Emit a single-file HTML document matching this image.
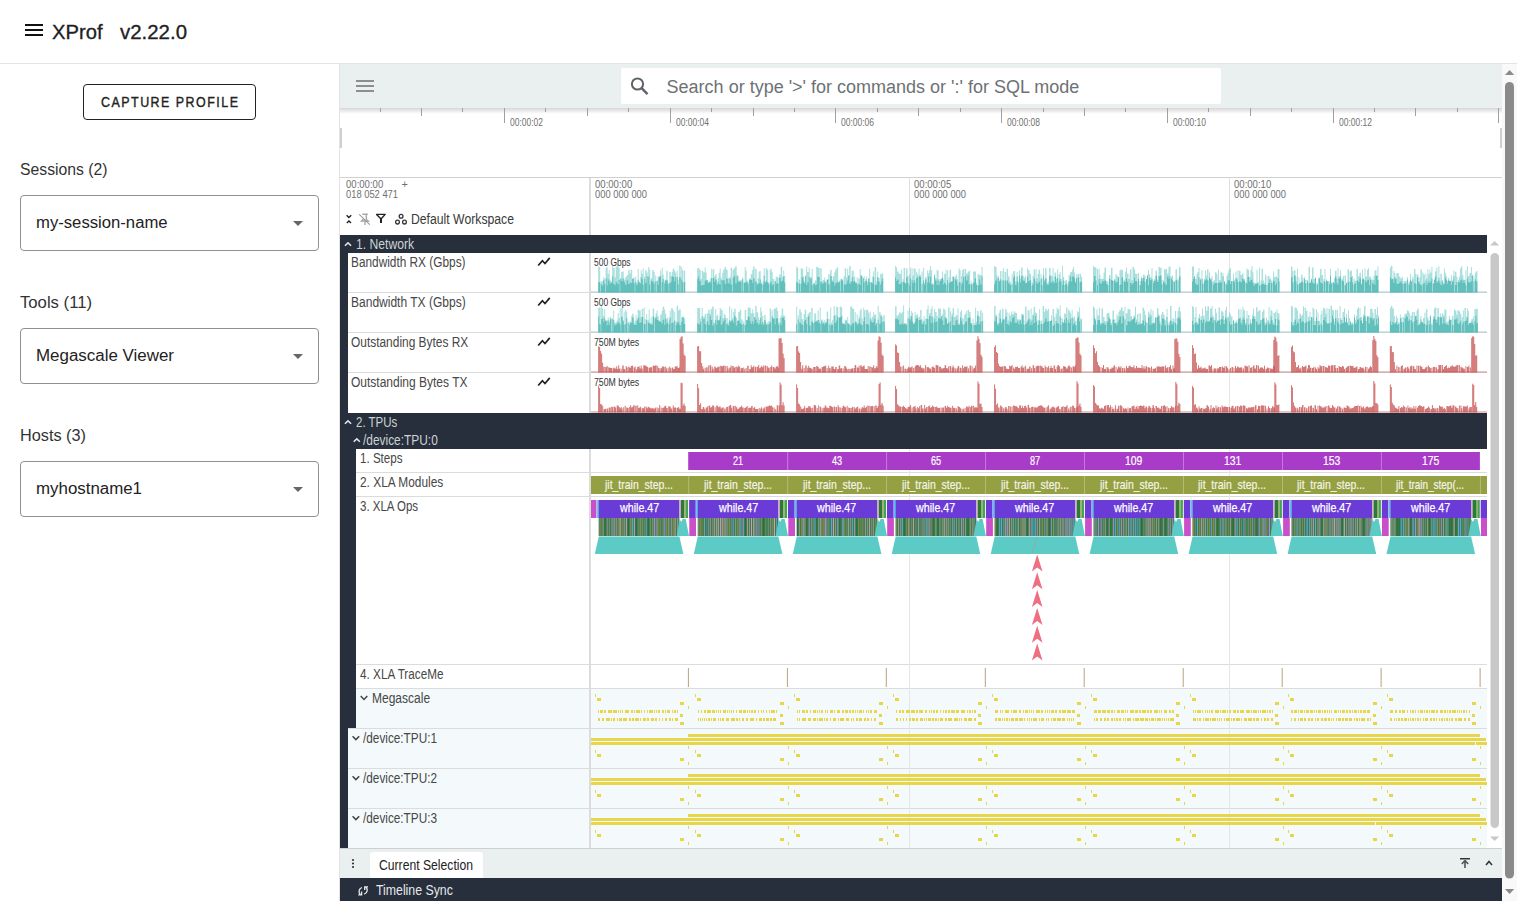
<!DOCTYPE html>
<html><head><meta charset="utf-8"><style>
html,body{margin:0;padding:0;width:1517px;height:901px;overflow:hidden;background:#fff;font-family:"Liberation Sans", sans-serif;}
</style></head><body>
<div style="position:absolute;left:0px;top:0px;width:1517px;height:63px;background:#fff;"></div><div style="position:absolute;left:0px;top:63px;width:1517px;height:1px;background:#e3e3e3;"></div><div style="position:absolute;left:25px;top:24px;width:18px;height:2px;background:#111;"></div><div style="position:absolute;left:25px;top:29px;width:18px;height:2px;background:#111;"></div><div style="position:absolute;left:25px;top:34px;width:18px;height:2px;background:#111;"></div><span style="position:absolute;left:52px;top:22.07px;font-size:20px;line-height:20px;color:#202124;font-weight:normal;letter-spacing:0px;white-space:nowrap;transform-origin:0 0;transform:scaleX(1.0094);-webkit-text-stroke:0.3px #202124;">XProf</span><span style="position:absolute;left:120px;top:22.07px;font-size:20px;line-height:20px;color:#202124;font-weight:normal;letter-spacing:0px;white-space:nowrap;transform-origin:0 0;transform:scaleX(1.0212);-webkit-text-stroke:0.3px #202124;">v2.22.0</span><div style="position:absolute;left:0px;top:64px;width:339px;height:837px;background:#fff;"></div><div style="position:absolute;left:339px;top:64px;width:1px;height:837px;background:#e3e3e3;"></div><div style="position:absolute;left:83px;top:84px;width:171px;height:34px;border:1px solid #222;border-radius:4px;"></div><span style="position:absolute;left:100.7px;top:93.60px;font-size:15px;line-height:15px;color:#222;font-weight:normal;letter-spacing:1.8px;white-space:nowrap;transform-origin:0 0;transform:scaleX(0.8292);-webkit-text-stroke:0.4px #222;">CAPTURE PROFILE</span><span style="position:absolute;left:20px;top:161.96px;font-size:16px;line-height:16px;color:#333;font-weight:normal;letter-spacing:0px;white-space:nowrap;transform-origin:0 0;transform:scaleX(0.9840);">Sessions (2)</span><div style="position:absolute;left:20px;top:195px;width:297px;height:54px;border:1px solid #909090;border-radius:4px;"></div><span style="position:absolute;left:36px;top:214.76px;font-size:16px;line-height:16px;color:#222;font-weight:normal;letter-spacing:0px;white-space:nowrap;transform-origin:0 0;transform:scaleX(1.0422);">my-session-name</span><div style="position:absolute;left:293px;top:221px;width:0;height:0;border-left:5px solid transparent;border-right:5px solid transparent;border-top:5px solid #666;"></div><span style="position:absolute;left:20px;top:294.96px;font-size:16px;line-height:16px;color:#333;font-weight:normal;letter-spacing:0px;white-space:nowrap;transform-origin:0 0;transform:scaleX(1.0425);">Tools (11)</span><div style="position:absolute;left:20px;top:328px;width:297px;height:54px;border:1px solid #909090;border-radius:4px;"></div><span style="position:absolute;left:36px;top:347.76px;font-size:16px;line-height:16px;color:#222;font-weight:normal;letter-spacing:0px;white-space:nowrap;transform-origin:0 0;transform:scaleX(1.0580);">Megascale Viewer</span><div style="position:absolute;left:293px;top:354px;width:0;height:0;border-left:5px solid transparent;border-right:5px solid transparent;border-top:5px solid #666;"></div><span style="position:absolute;left:20px;top:427.96px;font-size:16px;line-height:16px;color:#333;font-weight:normal;letter-spacing:0px;white-space:nowrap;transform-origin:0 0;transform:scaleX(1.0169);">Hosts (3)</span><div style="position:absolute;left:20px;top:461px;width:297px;height:54px;border:1px solid #909090;border-radius:4px;"></div><span style="position:absolute;left:36px;top:480.76px;font-size:16px;line-height:16px;color:#222;font-weight:normal;letter-spacing:0px;white-space:nowrap;transform-origin:0 0;transform:scaleX(1.0547);">myhostname1</span><div style="position:absolute;left:293px;top:487px;width:0;height:0;border-left:5px solid transparent;border-right:5px solid transparent;border-top:5px solid #666;"></div><svg width="1517" height="901" viewBox="0 0 1517 901" style="position:absolute;left:0;top:0"><rect x="340" y="64" width="1162" height="44" fill="#eaeff0" /><defs><linearGradient id="sh" x1="0" y1="0" x2="0" y2="1"><stop offset="0" stop-color="#000" stop-opacity="0.16"/><stop offset="1" stop-color="#000" stop-opacity="0"/></linearGradient></defs><rect x="340" y="108" width="1162" height="69" fill="#ffffff" /><rect x="340" y="108" width="1162" height="6" fill="url(#sh)" /><rect x="356" y="80" width="18" height="2" fill="#8e8e8e" /><rect x="356" y="85" width="18" height="2" fill="#8e8e8e" /><rect x="356" y="90" width="18" height="2" fill="#8e8e8e" /><rect x="621" y="68" width="600" height="36" rx="2" fill="#fff"/><circle cx="637.5" cy="84" r="5.6" fill="none" stroke="#5f6368" stroke-width="2"/><line x1="641.6" y1="88.2" x2="647.5" y2="94.2" stroke="#5f6368" stroke-width="2.4"/><rect x="380" y="108" width="1" height="4" fill="#a0a0a0" /><rect x="421" y="108" width="1" height="8" fill="#a0a0a0" /><rect x="462" y="108" width="1" height="4" fill="#a0a0a0" /><rect x="504" y="108" width="1" height="15" fill="#a0a0a0" /><rect x="545" y="108" width="1" height="4" fill="#a0a0a0" /><rect x="587" y="108" width="1" height="8" fill="#a0a0a0" /><rect x="628" y="108" width="1" height="4" fill="#a0a0a0" /><rect x="670" y="108" width="1" height="15" fill="#a0a0a0" /><rect x="711" y="108" width="1" height="4" fill="#a0a0a0" /><rect x="753" y="108" width="1" height="8" fill="#a0a0a0" /><rect x="794" y="108" width="1" height="4" fill="#a0a0a0" /><rect x="835" y="108" width="1" height="15" fill="#a0a0a0" /><rect x="877" y="108" width="1" height="4" fill="#a0a0a0" /><rect x="918" y="108" width="1" height="8" fill="#a0a0a0" /><rect x="960" y="108" width="1" height="4" fill="#a0a0a0" /><rect x="1001" y="108" width="1" height="15" fill="#a0a0a0" /><rect x="1043" y="108" width="1" height="4" fill="#a0a0a0" /><rect x="1084" y="108" width="1" height="8" fill="#a0a0a0" /><rect x="1125" y="108" width="1" height="4" fill="#a0a0a0" /><rect x="1167" y="108" width="1" height="15" fill="#a0a0a0" /><rect x="1208" y="108" width="1" height="4" fill="#a0a0a0" /><rect x="1250" y="108" width="1" height="8" fill="#a0a0a0" /><rect x="1291" y="108" width="1" height="4" fill="#a0a0a0" /><rect x="1333" y="108" width="1" height="15" fill="#a0a0a0" /><rect x="1374" y="108" width="1" height="4" fill="#a0a0a0" /><rect x="1415" y="108" width="1" height="8" fill="#a0a0a0" /><rect x="1457" y="108" width="1" height="4" fill="#a0a0a0" /><rect x="1498" y="108" width="1" height="15" fill="#a0a0a0" /><rect x="1498" y="108" width="1" height="14" fill="#a0a0a0" /><rect x="340" y="128" width="2" height="20" fill="#cfcfcf" /><rect x="1500" y="128" width="2" height="20" fill="#cfcfcf" /><rect x="340" y="177" width="1162" height="1" fill="#d0d0d0" /><rect x="340" y="178" width="1162" height="57" fill="#fff" /><rect x="589" y="178" width="2" height="57" fill="#dcdcdc" /><rect x="909" y="178" width="1" height="57" fill="#e0e0e0" /><rect x="1229" y="178" width="1" height="57" fill="#e0e0e0" /><rect x="340" y="235" width="1147" height="613" fill="#262f3b" /><rect x="1487" y="235" width="15" height="613" fill="#ffffff" /><rect x="1490.5" y="253" width="8.5" height="575" rx="4.2" fill="#c8c8c8"/><path d="M1490 245.5 L1494.6 241 L1499.2 245.5 Z" fill="#c8c8c8"/><path d="M1490 836.5 L1494.6 841 L1499.2 836.5 Z" fill="#c8c8c8"/><rect x="1502" y="64" width="15" height="837" fill="#f9f9f9" /><rect x="1505" y="82" width="9" height="796.5" rx="4.5" fill="#8a8a8a"/><path d="M1505 75 L1509.6 70 L1514.2 75 Z" fill="#8a8a8a"/><path d="M1505 889 L1509.6 894 L1514.2 889 Z" fill="#8a8a8a"/><rect x="348" y="253" width="1139" height="160" fill="#fff" /><rect x="348" y="292" width="1139" height="1" fill="#dcdcdc" /><rect x="348" y="332" width="1139" height="1" fill="#dcdcdc" /><rect x="348" y="372" width="1139" height="1" fill="#dcdcdc" /><rect x="589" y="253" width="2" height="160" fill="#dcdcdc" /><rect x="356" y="449" width="1131" height="239" fill="#fff" /><rect x="356" y="472" width="1131" height="1" fill="#dcdcdc" /><rect x="356" y="496" width="1131" height="1" fill="#dcdcdc" /><rect x="356" y="664" width="1131" height="1" fill="#dcdcdc" /><rect x="356" y="688" width="1131" height="40" fill="#f4fafb" /><rect x="348" y="728" width="1139" height="40" fill="#f4fafb" /><rect x="348" y="768" width="1139" height="40" fill="#f4fafb" /><rect x="348" y="808" width="1139" height="40" fill="#f4fafb" /><rect x="356" y="688" width="1131" height="1" fill="#dcdcdc" /><rect x="348" y="728" width="1139" height="1" fill="#dcdcdc" /><rect x="348" y="768" width="1139" height="1" fill="#dcdcdc" /><rect x="348" y="808" width="1139" height="1" fill="#dcdcdc" /><rect x="589" y="449" width="2" height="399" fill="#dcdcdc" /><rect x="909" y="253" width="1" height="160" fill="#e6e6e6" /><rect x="909" y="449" width="1" height="399" fill="#e6e6e6" /><rect x="1229" y="253" width="1" height="160" fill="#e6e6e6" /><rect x="1229" y="449" width="1" height="399" fill="#e6e6e6" /><rect x="340" y="848" width="1162" height="1" fill="#cfcfcf" /><rect x="340" y="849" width="1162" height="29" fill="#eaeff0" /><path d="M370 878 V855 Q370 852 373 852 H480 Q483 852 483 855 V878 Z" fill="#fff"/><rect x="340" y="878" width="1162" height="23" fill="#262f3b" /><circle cx="353" cy="860.0" r="1.1" fill="#333"/><circle cx="353" cy="863.5" r="1.1" fill="#333"/><circle cx="353" cy="867.0" r="1.1" fill="#333"/><rect x="1460" y="858" width="10" height="1.5" fill="#333" /><path d="M1465 860.5 L1461.8 864 M1465 860.5 L1468.2 864 M1465 861 V868" stroke="#555" stroke-width="1.6" fill="none"/><path d="M1486 865 L1489 861.5 L1492 865" stroke="#333" stroke-width="1.5" fill="none"/><clipPath id="trk"><rect x="591" y="235" width="896" height="613"/></clipPath><g clip-path="url(#trk)"><rect x="591" y="291.5" width="896" height="1" fill="#a9cfcd" /><path d="M499.3 266.1h1v26.4h-1zM500.3 268.1h1v24.4h-1zM501.3 274.6h1.5v17.9h-1.5zM502.8 267.8h1.5v24.7h-1.5zM504.3 272h1v20.5h-1zM505.3 278.1h1v14.4h-1zM506.8 283.4h1v9.1h-1zM507.8 281.9h1v10.6h-1zM508.8 277.5h1.5v15h-1.5zM510.3 279.8h1v12.7h-1zM511.3 274.1h1v18.4h-1zM512.3 278.7h1v13.8h-1zM513.3 274.9h1v17.6h-1zM514.3 265.5h1v27h-1zM515.3 277.6h1.5v14.9h-1.5zM517.3 282.5h1.5v10h-1.5zM519.3 280.3h1.5v12.2h-1.5zM520.8 275.6h1v16.9h-1zM521.8 280.9h1v11.6h-1zM522.8 283.4h1v9.1h-1zM523.8 275.4h1v17.1h-1zM525.3 280.6h1v11.9h-1zM526.3 280.7h1v11.8h-1zM527.3 275.3h1v17.2h-1zM528.8 280.4h1.5v12.1h-1.5zM530.3 269.2h1.5v23.3h-1.5zM531.8 266.5h1v26h-1zM532.8 271.4h1.5v21.1h-1.5zM534.3 271.6h1v20.9h-1zM535.8 279.3h1.5v13.2h-1.5zM537.3 283h1v9.5h-1zM538.3 281.7h1v10.8h-1zM539.8 279.1h1v13.4h-1zM540.8 282.3h1v10.2h-1zM541.8 266.4h1v26.1h-1zM543.3 267.9h1v24.6h-1zM544.3 270h1v22.5h-1zM545.3 274.4h1v18.1h-1zM546.3 267.9h1v24.6h-1zM547.8 283.3h1.5v9.2h-1.5zM549.3 271.3h1.5v21.2h-1.5zM551.3 268.6h1v23.9h-1zM552.3 268.9h1v23.6h-1zM553.3 270h1v22.5h-1zM554.3 280.7h1.5v11.8h-1.5zM555.8 282h1.5v10.5h-1.5zM557.3 278.2h1v14.3h-1zM558.3 267.6h1.5v24.9h-1.5zM559.8 272.7h1v19.8h-1zM560.8 271h1v21.5h-1zM561.8 279.3h1v13.2h-1zM562.8 277.6h1v14.9h-1zM563.8 276.3h1.5v16.2h-1.5zM565.3 268.9h1.5v23.6h-1.5zM567.3 272.5h1v20h-1zM568.3 278.6h1v13.9h-1zM569.8 274.4h1v18.1h-1zM570.8 271.8h1.5v20.7h-1.5zM572.8 272.4h1v20.1h-1zM573.8 277.1h1.5v15.4h-1.5zM575.3 282h1v10.5h-1zM576.3 281.1h1v11.4h-1zM577.3 280.1h1v12.4h-1zM578.3 280.1h1v12.4h-1zM579.8 273.3h1.5v19.2h-1.5zM581.3 268.3h1.5v24.2h-1.5zM582.8 277.1h1v15.4h-1zM584.3 270.8h1.5v21.7h-1.5zM585.8 271h1.5v21.5h-1.5zM598.2 266.6h1v25.9h-1zM599.2 267.1h1v25.4h-1zM600.7 281.3h1v11.2h-1zM601.7 281.4h1.5v11.1h-1.5zM603.2 276.9h1v15.6h-1zM604.2 278.8h1v13.7h-1zM605.7 267.8h1v24.7h-1zM606.7 267.2h1v25.3h-1zM607.7 274.1h1v18.4h-1zM608.7 269.9h1v22.6h-1zM609.7 279.4h1v13.1h-1zM610.7 281.4h1.5v11.1h-1.5zM612.2 265.8h1v26.7h-1zM613.2 268h1.5v24.5h-1.5zM614.7 277.5h1v15h-1zM615.7 266.4h1.5v26.1h-1.5zM617.2 266.2h1.5v26.3h-1.5zM618.7 268.1h1v24.4h-1zM620.2 278.2h1v14.3h-1zM621.2 272h1.5v20.5h-1.5zM622.7 271.2h1v21.3h-1zM623.7 279.4h1.5v13.1h-1.5zM625.2 277.1h1.5v15.4h-1.5zM626.7 274.9h1.5v17.6h-1.5zM628.2 270h1.5v22.5h-1.5zM629.7 273.3h1v19.2h-1zM630.7 269.8h1.5v22.7h-1.5zM632.2 278.5h1.5v14h-1.5zM633.7 277.5h1v15h-1zM635.2 276.8h1v15.7h-1zM636.2 282.8h1.5v9.7h-1.5zM637.7 269h1v23.5h-1zM638.7 281.4h1v11.1h-1zM639.7 283.3h1v9.2h-1zM640.7 270.2h1v22.3h-1zM641.7 273.8h1v18.7h-1zM642.7 268.3h1v24.2h-1zM644.2 276.3h1v16.2h-1zM645.2 270.2h1.5v22.3h-1.5zM646.7 272.5h1v20h-1zM648.2 267h1v25.5h-1zM649.2 269.5h1v23h-1zM650.7 278.3h1.5v14.2h-1.5zM652.2 269.9h1.5v22.6h-1.5zM653.7 271.9h1v20.6h-1zM655.2 275.5h1v17h-1zM656.7 280.5h1v12h-1zM657.7 276.4h1v16.1h-1zM658.7 276.3h1.5v16.2h-1.5zM660.2 270.5h1v22h-1zM661.7 267.8h1v24.7h-1zM662.7 274.5h1v18h-1zM664.2 280.6h1v11.9h-1zM665.2 279.2h1v13.3h-1zM666.2 270.8h1.5v21.7h-1.5zM667.7 282.3h1v10.2h-1zM669.2 272.1h1.5v20.4h-1.5zM670.7 276.2h1v16.3h-1zM671.7 272.1h1v20.4h-1zM672.7 268.6h1.5v23.9h-1.5zM674.2 270.5h1v22h-1zM675.2 272.5h1v20h-1zM676.7 270.8h1v21.7h-1zM677.7 279.8h1v12.7h-1zM679.2 265.8h1.5v26.7h-1.5zM681.2 267.1h1v25.4h-1zM682.2 270h1v22.5h-1zM683.7 270.7h1.5v21.8h-1.5zM697.2 268.1h1v24.4h-1zM698.2 268.1h1v24.4h-1zM699.2 269.8h1.5v22.7h-1.5zM700.7 279h1v13.5h-1zM701.7 270.7h1.5v21.8h-1.5zM703.2 272.2h1.5v20.3h-1.5zM704.7 267.6h1v24.9h-1zM705.7 272.6h1v19.9h-1zM706.7 280h1v12.5h-1zM707.7 281.8h1.5v10.7h-1.5zM709.2 281.4h1v11.1h-1zM710.2 278.2h1v14.3h-1zM711.2 268.8h1v23.7h-1zM712.7 269.3h1.5v23.2h-1.5zM714.2 276.6h1v15.9h-1zM715.2 274.2h1.5v18.3h-1.5zM716.7 283.3h1v9.2h-1zM717.7 278.1h1v14.4h-1zM718.7 273.1h1v19.4h-1zM719.7 268.8h1v23.7h-1zM720.7 277.4h1v15.1h-1zM722.2 272.7h1v19.8h-1zM723.2 269.5h1.5v23h-1.5zM724.7 267h1.5v25.5h-1.5zM726.2 269.8h1.5v22.7h-1.5zM727.7 278.3h1v14.2h-1zM728.7 277.5h1v15h-1zM729.7 276.7h1v15.8h-1zM730.7 267.7h1.5v24.8h-1.5zM732.7 270.1h1v22.4h-1zM733.7 268.3h1.5v24.2h-1.5zM735.2 266.2h1.5v26.3h-1.5zM736.7 274.7h1v17.8h-1zM737.7 275.7h1v16.8h-1zM738.7 280.6h1.5v11.9h-1.5zM740.2 279.7h1.5v12.8h-1.5zM742.2 277.3h1v15.2h-1zM743.7 282.3h1v10.2h-1zM744.7 267.1h1v25.4h-1zM745.7 270.4h1v22.1h-1zM746.7 280.4h1v12.1h-1zM747.7 281.5h1v11h-1zM749.2 278.5h1.5v14h-1.5zM750.7 273.9h1.5v18.6h-1.5zM752.2 270.1h1v22.4h-1zM753.2 266.4h1.5v26.1h-1.5zM755.2 269h1.5v23.5h-1.5zM756.7 283.2h1v9.3h-1zM757.7 278.1h1v14.4h-1zM758.7 271.4h1v21.1h-1zM759.7 270.9h1v21.6h-1zM760.7 282.3h1.5v10.2h-1.5zM762.7 280.9h1v11.6h-1zM763.7 268.3h1v24.2h-1zM764.7 282.3h1v10.2h-1zM765.7 267.9h1v24.6h-1zM766.7 269.4h1.5v23.1h-1.5zM768.2 282.2h1v10.3h-1zM769.7 269.7h1v22.8h-1zM770.7 268.5h1v24h-1zM771.7 272.1h1v20.4h-1zM772.7 279h1.5v13.5h-1.5zM774.7 281h1v11.5h-1zM775.7 276.7h1.5v15.8h-1.5zM777.2 277.3h1.5v15.2h-1.5zM779.2 274.4h1.5v18.1h-1.5zM780.7 266.7h1.5v25.8h-1.5zM782.2 276.8h1v15.7h-1zM783.2 270.5h1v22h-1zM784.2 275.9h1v16.6h-1zM796.2 266.4h1v26.1h-1zM797.2 268h1v24.5h-1zM798.7 279.5h1.5v13h-1.5zM800.7 268.2h1v24.3h-1zM801.7 268.8h1.5v23.7h-1.5zM803.2 276.4h1v16.1h-1zM804.2 282.4h1v10.1h-1zM805.2 275.4h1v17.1h-1zM806.2 266.6h1v25.9h-1zM807.2 272h1.5v20.5h-1.5zM808.7 267.9h1v24.6h-1zM810.2 276.8h1.5v15.7h-1.5zM811.7 269h1v23.5h-1zM813.2 283.2h1.5v9.3h-1.5zM814.7 280.5h1.5v12h-1.5zM816.2 266.8h1v25.7h-1zM817.2 266.9h1v25.6h-1zM818.2 268h1.5v24.5h-1.5zM820.2 268.3h1.5v24.2h-1.5zM821.7 280.9h1v11.6h-1zM822.7 279.9h1.5v12.6h-1.5zM824.2 277.5h1v15h-1zM825.2 281.8h1v10.7h-1zM826.7 279.1h1.5v13.4h-1.5zM828.2 274.1h1.5v18.4h-1.5zM830.2 270.1h1.5v22.4h-1.5zM831.7 280.1h1v12.4h-1zM832.7 276.3h1.5v16.2h-1.5zM834.2 272.4h1v20.1h-1zM835.2 269.5h1.5v23h-1.5zM836.7 267.3h1.5v25.2h-1.5zM838.2 282.4h1v10.1h-1zM839.2 280.6h1v11.9h-1zM840.7 278.6h1v13.9h-1zM841.7 279.2h1.5v13.3h-1.5zM843.7 276.3h1v16.2h-1zM844.7 268.3h1.5v24.2h-1.5zM846.2 277.5h1v15h-1zM847.2 268.8h1v23.7h-1zM848.2 275.1h1v17.4h-1zM849.2 266.1h1.5v26.4h-1.5zM850.7 281.6h1v10.9h-1zM851.7 270.7h1v21.8h-1zM852.7 270.5h1v22h-1zM853.7 276.6h1.5v15.9h-1.5zM855.2 282.7h1.5v9.8h-1.5zM856.7 277.3h1v15.2h-1zM858.2 278.4h1.5v14.1h-1.5zM859.7 268.9h1v23.6h-1zM860.7 275.5h1.5v17h-1.5zM862.7 277.7h1v14.8h-1zM863.7 276.3h1v16.2h-1zM865.2 279h1v13.5h-1zM866.2 276.4h1v16.1h-1zM867.2 282.4h1v10.1h-1zM868.2 278.2h1v14.3h-1zM869.2 268.8h1v23.7h-1zM870.7 282.2h1.5v10.3h-1.5zM872.2 276.4h1v16.1h-1zM873.2 271.2h1v21.3h-1zM874.7 267.2h1.5v25.3h-1.5zM876.2 281.5h1v11h-1zM877.2 271.7h1v20.8h-1zM878.2 277.7h1.5v14.8h-1.5zM880.2 273.8h1v18.7h-1zM881.2 274.2h1v18.3h-1zM882.2 273.3h1v19.2h-1zM895.1 265.9h1v26.6h-1zM896.1 267.5h1v25h-1zM897.1 271.6h1.5v20.9h-1.5zM898.6 273.5h1.5v19h-1.5zM900.1 274h1v18.5h-1zM901.1 269.8h1v22.7h-1zM902.6 279.2h1v13.3h-1zM903.6 267.9h1.5v24.6h-1.5zM905.1 283.1h1v9.4h-1zM906.1 268.2h1.5v24.3h-1.5zM907.6 276.1h1v16.4h-1zM909.1 274.6h1v17.9h-1zM910.1 267.6h1v24.9h-1zM911.6 268.4h1v24.1h-1zM912.6 275.7h1v16.8h-1zM913.6 268.1h1v24.4h-1zM914.6 268.9h1v23.6h-1zM916.1 271.7h1v20.8h-1zM917.1 273.8h1v18.7h-1zM918.6 268.8h1v23.7h-1zM919.6 274.8h1.5v17.7h-1.5zM921.6 271.6h1v20.9h-1zM923.1 267.8h1v24.7h-1zM924.1 282.8h1v9.7h-1zM925.1 277h1.5v15.5h-1.5zM927.1 270.4h1v22.1h-1zM928.1 273.3h1v19.2h-1zM929.1 270h1v22.5h-1zM930.1 265.9h1v26.6h-1zM931.1 270.5h1v22h-1zM932.1 283.3h1.5v9.2h-1.5zM934.1 274.2h1v18.3h-1zM935.1 278.3h1.5v14.2h-1.5zM936.6 269.7h1v22.8h-1zM937.6 270.6h1v21.9h-1zM938.6 281.3h1v11.2h-1zM939.6 278.9h1.5v13.6h-1.5zM941.1 278.7h1v13.8h-1zM942.1 271.6h1v20.9h-1zM943.1 279.4h1v13.1h-1zM944.1 274h1.5v18.5h-1.5zM945.6 269.8h1v22.7h-1zM947.1 270.2h1v22.3h-1zM948.6 277.3h1v15.2h-1zM949.6 269.8h1.5v22.7h-1.5zM951.1 281.1h1.5v11.4h-1.5zM952.6 276.5h1.5v16h-1.5zM954.6 277.1h1v15.4h-1zM955.6 274.7h1.5v17.8h-1.5zM957.1 278.9h1v13.6h-1zM958.6 268.2h1v24.3h-1zM959.6 270h1v22.5h-1zM961.1 276.1h1v16.4h-1zM962.1 269.9h1v22.6h-1zM963.1 269.3h1v23.2h-1zM964.6 268.8h1.5v23.7h-1.5zM966.1 273.5h1.5v19h-1.5zM967.6 271.8h1v20.7h-1zM968.6 270.8h1.5v21.7h-1.5zM970.6 280.8h1v11.7h-1zM971.6 282.9h1v9.6h-1zM973.1 271.6h1.5v20.9h-1.5zM974.6 271.6h1.5v20.9h-1.5zM976.1 282.9h1v9.6h-1zM977.6 273.9h1.5v18.6h-1.5zM979.1 275.3h1v17.2h-1zM980.1 274.9h1.5v17.6h-1.5zM981.6 267h1v25.5h-1zM994.1 266.1h1v26.4h-1zM995.1 267.1h1.5v25.4h-1.5zM996.6 275.3h1v17.2h-1zM998.1 275.9h1v16.6h-1zM999.1 280.5h1v12h-1zM1000.1 271.1h1v21.4h-1zM1001.6 271h1v21.5h-1zM1003.1 268.3h1v24.2h-1zM1004.6 272h1.5v20.5h-1.5zM1006.6 268.7h1.5v23.8h-1.5zM1008.1 276.6h1.5v15.9h-1.5zM1009.6 281.7h1.5v10.8h-1.5zM1011.6 273.8h1v18.7h-1zM1013.1 271.2h1v21.3h-1zM1014.1 270.9h1v21.6h-1zM1015.1 281.5h1.5v11h-1.5zM1016.6 272.1h1v20.4h-1zM1017.6 281.1h1v11.4h-1zM1019.1 269.9h1v22.6h-1zM1020.1 278.7h1v13.8h-1zM1021.1 267.4h1.5v25.1h-1.5zM1022.6 275.4h1v17.1h-1zM1023.6 277.5h1.5v15h-1.5zM1025.1 275.8h1v16.7h-1zM1026.1 282.5h1v10h-1zM1027.1 267.9h1v24.6h-1zM1028.1 270.3h1.5v22.2h-1.5zM1029.6 274.1h1.5v18.4h-1.5zM1031.6 282.4h1v10.1h-1zM1032.6 275.9h1v16.6h-1zM1033.6 269.6h1.5v22.9h-1.5zM1035.6 269.2h1v23.3h-1zM1036.6 278.3h1v14.2h-1zM1037.6 273.8h1v18.7h-1zM1038.6 269.8h1.5v22.7h-1.5zM1040.6 274.2h1v18.3h-1zM1041.6 277.8h1v14.7h-1zM1043.1 267.9h1v24.6h-1zM1044.1 279.5h1v13h-1zM1045.1 268.2h1.5v24.3h-1.5zM1046.6 283.1h1.5v9.4h-1.5zM1048.1 281.4h1v11.1h-1zM1049.1 268h1.5v24.5h-1.5zM1050.6 275.1h1v17.4h-1zM1051.6 276.6h1v15.9h-1zM1052.6 268.3h1v24.2h-1zM1053.6 282.3h1v10.2h-1zM1054.6 272.4h1.5v20.1h-1.5zM1056.1 279.1h1v13.4h-1zM1057.1 269.2h1v23.3h-1zM1058.6 274.3h1v18.2h-1zM1059.6 272.1h1v20.4h-1zM1060.6 278.8h1v13.7h-1zM1062.1 265.7h1v26.8h-1zM1063.1 276.8h1v15.7h-1zM1064.6 280.9h1v11.6h-1zM1065.6 279.9h1.5v12.6h-1.5zM1067.6 282.5h1v10h-1zM1068.6 274.9h1.5v17.6h-1.5zM1070.1 272.3h1v20.2h-1zM1071.1 271.7h1v20.8h-1zM1072.1 269.4h1v23.1h-1zM1073.1 266.7h1v25.8h-1zM1074.1 272.6h1v19.9h-1zM1075.1 281.2h1v11.3h-1zM1076.1 274.4h1v18.1h-1zM1077.6 273.8h1.5v18.7h-1.5zM1079.6 273.9h1.5v18.6h-1.5zM1081.1 276.8h1v15.7h-1zM1093 265.9h1v26.6h-1zM1094 267.2h1.5v25.3h-1.5zM1095.5 267.5h1v25h-1zM1097 269.1h1v23.4h-1zM1098.5 268.5h1v24h-1zM1099.5 274.4h1v18.1h-1zM1100.5 278.9h1.5v13.6h-1.5zM1102 278.8h1.5v13.7h-1.5zM1103.5 272.8h1v19.7h-1zM1104.5 267.5h1.5v25h-1.5zM1106 280.9h1.5v11.6h-1.5zM1107.5 281.8h1v10.7h-1zM1109 275h1.5v17.5h-1.5zM1111 267.8h1.5v24.7h-1.5zM1112.5 280.6h1v11.9h-1zM1114 278.9h1.5v13.6h-1.5zM1115.5 273.9h1v18.6h-1zM1116.5 275.8h1.5v16.7h-1.5zM1118 277.2h1v15.3h-1zM1119.5 270.5h1v22h-1zM1120.5 269.3h1v23.2h-1zM1121.5 270.1h1.5v22.4h-1.5zM1123.5 279.6h1.5v12.9h-1.5zM1125 271.7h1v20.8h-1zM1126 267.5h1v25h-1zM1127 273.5h1v19h-1zM1128.5 273.6h1v18.9h-1zM1130 269.3h1.5v23.2h-1.5zM1131.5 280.2h1v12.3h-1zM1132.5 267h1.5v25.5h-1.5zM1134 269.2h1v23.3h-1zM1135 273.6h1.5v18.9h-1.5zM1136.5 274h1v18.5h-1zM1138 272.9h1v19.6h-1zM1139.5 280.9h1.5v11.6h-1.5zM1141 276.6h1v15.9h-1zM1142 278h1v14.5h-1zM1143 274.6h1.5v17.9h-1.5zM1144.5 275.4h1v17.1h-1zM1146 279.1h1v13.4h-1zM1147 274.4h1v18.1h-1zM1148 270.1h1v22.4h-1zM1149 274.3h1v18.2h-1zM1150 277.2h1.5v15.3h-1.5zM1151.5 268.1h1v24.4h-1zM1153 280.6h1v11.9h-1zM1154 279.3h1.5v13.2h-1.5zM1155.5 270.7h1.5v21.8h-1.5zM1157 279.4h1.5v13.1h-1.5zM1158.5 267h1.5v25.5h-1.5zM1160 267.8h1.5v24.7h-1.5zM1161.5 280h1v12.5h-1zM1163 280.6h1v11.9h-1zM1164 269.5h1.5v23h-1.5zM1165.5 269.1h1.5v23.4h-1.5zM1167 273.4h1.5v19.1h-1.5zM1168.5 267.1h1v25.4h-1zM1169.5 266.2h1v26.3h-1zM1171 276.5h1v16h-1zM1172 275.4h1v17.1h-1zM1173.5 281.3h1.5v11.2h-1.5zM1175.5 269.3h1.5v23.2h-1.5zM1177.5 278.3h1v14.2h-1zM1179 267.2h1.5v25.3h-1.5zM1192 266.7h1v25.8h-1zM1193 266.3h1v26.2h-1zM1194 275.8h1v16.7h-1zM1195 278.7h1.5v13.8h-1.5zM1196.5 273.8h1v18.7h-1zM1197.5 272h1v20.5h-1zM1198.5 267.9h1v24.6h-1zM1200 278.1h1v14.4h-1zM1201.5 270.1h1v22.4h-1zM1202.5 282.6h1v9.9h-1zM1204 278.4h1v14.1h-1zM1205 270.4h1v22.1h-1zM1206 275.6h1v16.9h-1zM1207 269.3h1.5v23.2h-1.5zM1209 272.5h1v20h-1zM1210 278.4h1.5v14.1h-1.5zM1211.5 276.1h1v16.4h-1zM1213 280.9h1v11.6h-1zM1214 280.3h1v12.2h-1zM1215 272.2h1.5v20.3h-1.5zM1216.5 274h1v18.5h-1zM1218 269.8h1v22.7h-1zM1219 279.9h1.5v12.6h-1.5zM1220.5 272.3h1.5v20.2h-1.5zM1222.5 273h1v19.5h-1zM1224 281.3h1v11.2h-1zM1225.5 283.2h1v9.3h-1zM1226.5 275.7h1v16.8h-1zM1227.5 273.1h1v19.4h-1zM1228.5 269.8h1.5v22.7h-1.5zM1230 268.1h1v24.4h-1zM1231 281.2h1.5v11.3h-1.5zM1233 273.6h1v18.9h-1zM1234 279.7h1v12.8h-1zM1235.5 271.4h1v21.1h-1zM1236.5 277.9h1v14.6h-1zM1237.5 270h1v22.5h-1zM1239 270.9h1.5v21.6h-1.5zM1240.5 275.1h1.5v17.4h-1.5zM1242 273.5h1.5v19h-1.5zM1243.5 279.1h1.5v13.4h-1.5zM1245.5 281.9h1v10.6h-1zM1246.5 268.4h1v24.1h-1zM1247.5 269.8h1.5v22.7h-1.5zM1249 276.7h1.5v15.8h-1.5zM1250.5 269.8h1v22.7h-1zM1251.5 266h1v26.5h-1zM1252.5 272.3h1v20.2h-1zM1253.5 282.4h1.5v10.1h-1.5zM1255 283.5h1.5v9h-1.5zM1256.5 269.7h1v22.8h-1zM1257.5 282.2h1v10.3h-1zM1259 267.7h1v24.8h-1zM1260.5 280.6h1v11.9h-1zM1261.5 268.7h1.5v23.8h-1.5zM1263 280.4h1v12.1h-1zM1264 282.7h1v9.8h-1zM1265 274.6h1v17.9h-1zM1266.5 276.3h1v16.2h-1zM1268 275.9h1.5v16.6h-1.5zM1269.5 278.4h1v14.1h-1zM1271 280.6h1.5v11.9h-1.5zM1273 271.5h1v21h-1zM1274 276.8h1v15.7h-1zM1275 277h1v15.5h-1zM1276 276.2h1v16.3h-1zM1277.5 269.6h1v22.9h-1zM1278.5 269.1h1v23.4h-1zM1291 266.5h1.5v26h-1.5zM1292.5 270.9h1v21.6h-1zM1294 270.2h1.5v22.3h-1.5zM1295.5 276.5h1v16h-1zM1297 269.1h1v23.4h-1zM1298.5 277.2h1v15.3h-1zM1299.5 282.7h1.5v9.8h-1.5zM1301 274.8h1.5v17.7h-1.5zM1302.5 278h1v14.5h-1zM1304 277h1v15.5h-1zM1305 280.1h1.5v12.4h-1.5zM1307 279.9h1v12.6h-1zM1308.5 267.1h1.5v25.4h-1.5zM1310 281.7h1v10.8h-1zM1311 278.7h1v13.8h-1zM1312 267.5h1.5v25h-1.5zM1313.5 279h1.5v13.5h-1.5zM1315 277.3h1v15.2h-1zM1316.5 282.7h1.5v9.8h-1.5zM1318.5 277.5h1.5v15h-1.5zM1320 269.1h1.5v23.4h-1.5zM1321.5 275h1.5v17.5h-1.5zM1323.5 278.9h1v13.6h-1zM1324.5 268.9h1v23.6h-1zM1326 279.4h1v13.1h-1zM1327 280.9h1.5v11.6h-1.5zM1329 281.3h1v11.2h-1zM1330 268.7h1v23.8h-1zM1331 282.5h1v10h-1zM1332.5 282.2h1.5v10.3h-1.5zM1334 278h1v14.5h-1zM1335 270.8h1.5v21.7h-1.5zM1336.5 279h1v13.5h-1zM1337.5 268.3h1v24.2h-1zM1338.5 276.4h1.5v16.1h-1.5zM1340 270.1h1v22.4h-1zM1341.5 278.4h1.5v14.1h-1.5zM1343 276h1v16.5h-1zM1344.5 275.6h1.5v16.9h-1.5zM1346 283h1v9.5h-1zM1347.5 269.3h1.5v23.2h-1.5zM1349.5 271.2h1v21.3h-1zM1350.5 270.5h1.5v22h-1.5zM1352 275.9h1v16.6h-1zM1353.5 278.6h1v13.9h-1zM1354.5 280.8h1.5v11.7h-1.5zM1356.5 269.1h1.5v23.4h-1.5zM1358 276.2h1.5v16.3h-1.5zM1359.5 272.7h1.5v19.8h-1.5zM1361 283.3h1v9.2h-1zM1362 269.8h1v22.7h-1zM1363 278.5h1v14h-1zM1364.5 268.5h1v24h-1zM1365.5 276.4h1.5v16.1h-1.5zM1367 269.7h1v22.8h-1zM1368 268.3h1v24.2h-1zM1369 277h1v15.5h-1zM1370 276.5h1v16h-1zM1371.5 278.5h1v14h-1zM1372.5 283.2h1v9.3h-1zM1373.5 275.8h1v16.7h-1zM1374.5 270.8h1v21.7h-1zM1375.5 270.1h1v22.4h-1zM1376.5 275.3h1v17.2h-1zM1377.5 266.5h1v26h-1zM1389.9 267.7h1v24.8h-1zM1390.9 265.7h1.5v26.8h-1.5zM1392.4 278.4h1v14.1h-1zM1393.4 270.9h1v21.6h-1zM1394.4 273.2h1v19.3h-1zM1395.4 278.2h1v14.3h-1zM1396.4 273.3h1v19.2h-1zM1397.4 273h1.5v19.5h-1.5zM1398.9 276.4h1.5v16.1h-1.5zM1400.4 278.5h1.5v14h-1.5zM1401.9 276.8h1v15.7h-1zM1403.4 281h1.5v11.5h-1.5zM1404.9 280.7h1.5v11.8h-1.5zM1406.9 277h1v15.5h-1zM1408.4 281.8h1.5v10.7h-1.5zM1409.9 274.1h1v18.4h-1zM1410.9 281.3h1v11.2h-1zM1412.4 276.2h1v16.3h-1zM1413.9 269.1h1.5v23.4h-1.5zM1415.4 273.7h1v18.8h-1zM1416.9 274.5h1.5v18h-1.5zM1418.4 281.3h1v11.2h-1zM1419.4 277h1v15.5h-1zM1420.4 269.4h1.5v23.1h-1.5zM1422.4 272.4h1v20.1h-1zM1423.4 274.4h1.5v18.1h-1.5zM1425.4 273.5h1v19h-1zM1426.4 278.2h1v14.3h-1zM1427.4 269.4h1v23.1h-1zM1428.4 274.3h1v18.2h-1zM1429.4 269.6h1v22.9h-1zM1430.4 272.8h1v19.7h-1zM1431.4 267.1h1v25.4h-1zM1432.9 283.1h1v9.4h-1zM1433.9 279h1v13.5h-1zM1434.9 271.2h1.5v21.3h-1.5zM1436.4 267.6h1v24.9h-1zM1437.4 280.9h1v11.6h-1zM1438.4 266.3h1v26.2h-1zM1439.4 280.5h1v12h-1zM1440.4 273.7h1.5v18.8h-1.5zM1441.9 280h1v12.5h-1zM1442.9 282.5h1v10h-1zM1443.9 268.6h1v23.9h-1zM1444.9 272.7h1v19.8h-1zM1445.9 275.7h1v16.8h-1zM1446.9 281.1h1v11.4h-1zM1447.9 278.1h1.5v14.4h-1.5zM1449.4 280.8h1.5v11.7h-1.5zM1450.9 275h1v17.5h-1zM1451.9 280.5h1.5v12h-1.5zM1453.4 270.4h1v22.1h-1zM1454.9 271.7h1.5v20.8h-1.5zM1456.4 276.7h1v15.8h-1zM1457.9 280.1h1v12.4h-1zM1458.9 276.7h1v15.8h-1zM1459.9 268.8h1v23.7h-1zM1460.9 266.6h1.5v25.9h-1.5zM1462.4 275.3h1v17.2h-1zM1463.4 279.4h1v13.1h-1zM1464.4 280.1h1v12.4h-1zM1465.4 270.3h1v22.2h-1zM1466.9 266.3h1v26.2h-1zM1467.9 275.9h1.5v16.6h-1.5zM1469.4 272.9h1.5v19.6h-1.5zM1470.9 267.1h1v25.4h-1zM1471.9 274.4h1v18.1h-1zM1473.4 275.8h1v16.7h-1zM1474.9 272.8h1v19.7h-1zM1475.9 271.3h1.5v21.2h-1.5zM1488.9 268.4h1v24.1h-1zM1489.9 265.9h1v26.6h-1zM1490.9 280.5h1v12h-1zM1491.9 276.7h1v15.8h-1zM1492.9 270h1v22.5h-1zM1494.4 269h1v23.5h-1zM1495.4 282.2h1v10.3h-1zM1496.4 272.8h1.5v19.7h-1.5zM1497.9 273.7h1v18.8h-1zM1498.9 268.8h1.5v23.7h-1.5zM1500.4 273.5h1.5v19h-1.5zM1501.9 278h1v14.5h-1zM1502.9 273.6h1v18.9h-1zM1503.9 271.8h1.5v20.7h-1.5zM1505.9 268.1h1v24.4h-1zM1506.9 266.8h1.5v25.7h-1.5zM1508.4 271.2h1v21.3h-1zM1509.4 277.8h1v14.7h-1zM1510.4 268.4h1v24.1h-1zM1511.4 280.9h1.5v11.6h-1.5zM1512.9 282.9h1v9.6h-1zM1513.9 268.4h1v24.1h-1zM1514.9 278.7h1.5v13.8h-1.5zM1516.4 267h1v25.5h-1zM1517.4 277.5h1v15h-1zM1518.4 282.4h1.5v10.1h-1.5zM1520.4 273.3h1.5v19.2h-1.5zM1521.9 276.3h1v16.2h-1zM1522.9 269.7h1v22.8h-1zM1523.9 271.4h1.5v21.1h-1.5zM1525.4 267.3h1v25.2h-1zM1526.9 274.6h1v17.9h-1zM1527.9 272.6h1.5v19.9h-1.5zM1529.9 282.9h1v9.6h-1zM1530.9 280.1h1.5v12.4h-1.5zM1532.4 276.4h1.5v16.1h-1.5zM1533.9 269.5h1v23h-1zM1535.4 268h1.5v24.5h-1.5zM1536.9 270.1h1.5v22.4h-1.5zM1538.4 272.4h1.5v20.1h-1.5zM1539.9 272h1.5v20.5h-1.5zM1541.9 270.3h1.5v22.2h-1.5zM1543.4 267.9h1.5v24.6h-1.5zM1544.9 276.8h1v15.7h-1zM1545.9 269.4h1.5v23.1h-1.5zM1547.4 271.4h1v21.1h-1zM1548.4 269.7h1.5v22.8h-1.5zM1549.9 269.6h1.5v22.9h-1.5zM1551.9 271.7h1.5v20.8h-1.5zM1553.9 280.3h1.5v12.2h-1.5zM1555.4 273.8h1v18.7h-1zM1556.4 274.8h1v17.7h-1zM1557.4 278.1h1v14.4h-1zM1558.4 274.4h1v18.1h-1zM1559.4 281.7h1v10.8h-1zM1560.4 268.7h1.5v23.8h-1.5zM1561.9 278.4h1v14.1h-1zM1562.9 282.4h1v10.1h-1zM1563.9 280.1h1v12.4h-1zM1564.9 282.1h1v10.4h-1zM1565.9 270h1v22.5h-1zM1566.9 268.3h1v24.2h-1zM1567.9 275.6h1.5v16.9h-1.5zM1569.9 269.5h1v23h-1zM1570.9 277.3h1v15.2h-1zM1571.9 276.3h1v16.2h-1zM1572.9 278.3h1.5v14.2h-1.5zM1574.9 269.6h1.5v22.9h-1.5z" fill="#62c6c2" fill-opacity="0.55"/><path d="M499.3 276.9h1v15.6h-1zM500.3 281.2h1v11.3h-1zM501.3 275.9h1.5v16.6h-1.5zM502.8 280.5h1.5v12h-1.5zM504.3 282.1h1v10.4h-1zM505.3 278.2h1v14.3h-1zM506.8 285.2h1v7.3h-1zM507.8 282.3h1v10.2h-1zM508.8 280.7h1.5v11.8h-1.5zM510.3 284.3h1v8.2h-1zM511.3 275.9h1v16.6h-1zM512.3 285.4h1v7.1h-1zM513.3 282.3h1v10.2h-1zM514.3 276.3h1v16.2h-1zM515.3 279.5h1.5v13h-1.5zM517.3 284.5h1.5v8h-1.5zM519.3 281.8h1.5v10.7h-1.5zM520.8 282.2h1v10.3h-1zM521.8 285.1h1v7.4h-1zM522.8 285.1h1v7.4h-1zM523.8 277.6h1v14.9h-1zM525.3 284.6h1v7.9h-1zM526.3 282.7h1v9.8h-1zM527.3 284.3h1v8.2h-1zM528.8 284.5h1.5v8h-1.5zM530.3 282.6h1.5v9.9h-1.5zM531.8 280.1h1v12.4h-1zM532.8 276.7h1.5v15.8h-1.5zM534.3 281.5h1v11h-1zM535.8 282.5h1.5v10h-1.5zM537.3 283.2h1v9.3h-1zM538.3 282.2h1v10.3h-1zM539.8 283.6h1v8.9h-1zM540.8 283h1v9.5h-1zM541.8 283.2h1v9.3h-1zM543.3 277.6h1v14.9h-1zM544.3 284h1v8.5h-1zM545.3 275.7h1v16.8h-1zM546.3 280h1v12.5h-1zM547.8 284.2h1.5v8.3h-1.5zM549.3 280.9h1.5v11.6h-1.5zM551.3 278.8h1v13.7h-1zM552.3 277.5h1v15h-1zM553.3 276h1v16.5h-1zM554.3 284h1.5v8.5h-1.5zM555.8 285.3h1.5v7.2h-1.5zM557.3 282.7h1v9.8h-1zM558.3 276.5h1.5v16h-1.5zM559.8 277.9h1v14.6h-1zM560.8 279.9h1v12.6h-1zM561.8 279.4h1v13.1h-1zM562.8 280.2h1v12.3h-1zM563.8 280.9h1.5v11.6h-1.5zM565.3 281.8h1.5v10.7h-1.5zM567.3 284.4h1v8.1h-1zM568.3 284.3h1v8.2h-1zM569.8 277.5h1v15h-1zM570.8 277.4h1.5v15.1h-1.5zM572.8 279.2h1v13.3h-1zM573.8 280.8h1.5v11.7h-1.5zM575.3 284.6h1v7.9h-1zM576.3 281.4h1v11.1h-1zM577.3 282.1h1v10.4h-1zM578.3 281.8h1v10.7h-1zM579.8 281.1h1.5v11.4h-1.5zM581.3 280.7h1.5v11.8h-1.5zM582.8 279.9h1v12.6h-1zM584.3 278.1h1.5v14.4h-1.5zM585.8 281.9h1.5v10.6h-1.5zM598.2 282.3h1v10.2h-1zM599.2 282h1v10.5h-1zM600.7 283.9h1v8.6h-1zM601.7 285.5h1.5v7h-1.5zM603.2 280.2h1v12.3h-1zM604.2 284h1v8.5h-1zM605.7 277.9h1v14.6h-1zM606.7 285.5h1v7h-1zM607.7 279.3h1v13.2h-1zM608.7 281.1h1v11.4h-1zM609.7 283.7h1v8.8h-1zM610.7 282.7h1.5v9.8h-1.5zM612.2 276.4h1v16.1h-1zM613.2 284.1h1.5v8.4h-1.5zM614.7 285.3h1v7.2h-1zM615.7 281.9h1.5v10.6h-1.5zM617.2 284.2h1.5v8.3h-1.5zM618.7 280.1h1v12.4h-1zM620.2 278.7h1v13.8h-1zM621.2 281.1h1.5v11.4h-1.5zM622.7 278.2h1v14.3h-1zM623.7 282.3h1.5v10.2h-1.5zM625.2 284.7h1.5v7.8h-1.5zM626.7 280.5h1.5v12h-1.5zM628.2 284h1.5v8.5h-1.5zM629.7 282.6h1v9.9h-1zM630.7 283.1h1.5v9.4h-1.5zM632.2 278.7h1.5v13.8h-1.5zM633.7 283.2h1v9.3h-1zM635.2 281.4h1v11.1h-1zM636.2 285h1.5v7.5h-1.5zM637.7 279.7h1v12.8h-1zM638.7 282.1h1v10.4h-1zM639.7 283.5h1v9h-1zM640.7 277.1h1v15.4h-1zM641.7 279.1h1v13.4h-1zM642.7 284.8h1v7.7h-1zM644.2 278.7h1v13.8h-1zM645.2 283h1.5v9.5h-1.5zM646.7 276.2h1v16.3h-1zM648.2 276.4h1v16.1h-1zM649.2 284.5h1v8h-1zM650.7 280.8h1.5v11.7h-1.5zM652.2 281.7h1.5v10.8h-1.5zM653.7 283.6h1v8.9h-1zM655.2 281.3h1v11.2h-1zM656.7 280.9h1v11.6h-1zM657.7 285.1h1v7.4h-1zM658.7 277.2h1.5v15.3h-1.5zM660.2 276h1v16.5h-1zM661.7 282.2h1v10.3h-1zM662.7 279.1h1v13.4h-1zM664.2 283.2h1v9.3h-1zM665.2 280.6h1v11.9h-1zM666.2 280.2h1.5v12.3h-1.5zM667.7 284.1h1v8.4h-1zM669.2 283.3h1.5v9.2h-1.5zM670.7 281.7h1v10.8h-1zM671.7 276.3h1v16.2h-1zM672.7 277h1.5v15.5h-1.5zM674.2 281.5h1v11h-1zM675.2 277.2h1v15.3h-1zM676.7 276.7h1v15.8h-1zM677.7 284.2h1v8.3h-1zM679.2 277.1h1.5v15.4h-1.5zM681.2 279.4h1v13.1h-1zM682.2 282.2h1v10.3h-1zM683.7 282h1.5v10.5h-1.5zM697.2 279.1h1v13.4h-1zM698.2 276.2h1v16.3h-1zM699.2 280.7h1.5v11.8h-1.5zM700.7 285.5h1v7h-1zM701.7 285.2h1.5v7.3h-1.5zM703.2 284.9h1.5v7.6h-1.5zM704.7 281h1v11.5h-1zM705.7 280.3h1v12.2h-1zM706.7 280.1h1v12.4h-1zM707.7 283.2h1.5v9.3h-1.5zM709.2 281.4h1v11.1h-1zM710.2 282.8h1v9.7h-1zM711.2 277.9h1v14.6h-1zM712.7 278h1.5v14.5h-1.5zM714.2 281.8h1v10.7h-1zM715.2 279.4h1.5v13.1h-1.5zM716.7 284.9h1v7.6h-1zM717.7 281.5h1v11h-1zM718.7 283.9h1v8.6h-1zM719.7 284.6h1v7.9h-1zM720.7 279.7h1v12.8h-1zM722.2 279.9h1v12.6h-1zM723.2 280.4h1.5v12.1h-1.5zM724.7 284h1.5v8.5h-1.5zM726.2 278.7h1.5v13.8h-1.5zM727.7 283.3h1v9.2h-1zM728.7 283.4h1v9.1h-1zM729.7 278.9h1v13.6h-1zM730.7 284.6h1.5v7.9h-1.5zM732.7 278.1h1v14.4h-1zM733.7 276.1h1.5v16.4h-1.5zM735.2 283.5h1.5v9h-1.5zM736.7 276.4h1v16.1h-1zM737.7 281.7h1v10.8h-1zM738.7 281.8h1.5v10.7h-1.5zM740.2 281.5h1.5v11h-1.5zM742.2 279.3h1v13.2h-1zM743.7 282.5h1v10h-1zM744.7 283h1v9.5h-1zM745.7 281.7h1v10.8h-1zM746.7 282.2h1v10.3h-1zM747.7 283.8h1v8.7h-1zM749.2 279.5h1.5v13h-1.5zM750.7 279.9h1.5v12.6h-1.5zM752.2 283h1v9.5h-1zM753.2 278.5h1.5v14h-1.5zM755.2 281.6h1.5v10.9h-1.5zM756.7 284.8h1v7.7h-1zM757.7 284.3h1v8.2h-1zM758.7 283h1v9.5h-1zM759.7 279.2h1v13.3h-1zM760.7 283.9h1.5v8.6h-1.5zM762.7 284.6h1v7.9h-1zM763.7 275.7h1v16.8h-1zM764.7 282.6h1v9.9h-1zM765.7 280.4h1v12.1h-1zM766.7 282.3h1.5v10.2h-1.5zM768.2 284.3h1v8.2h-1zM769.7 282.9h1v9.6h-1zM770.7 281.6h1v10.9h-1zM771.7 285.5h1v7h-1zM772.7 284.3h1.5v8.2h-1.5zM774.7 281h1v11.5h-1zM775.7 283.7h1.5v8.8h-1.5zM777.2 283.2h1.5v9.3h-1.5zM779.2 277.8h1.5v14.7h-1.5zM780.7 281.6h1.5v10.9h-1.5zM782.2 280.6h1v11.9h-1zM783.2 276.4h1v16.1h-1zM784.2 282.6h1v9.9h-1zM796.2 281.8h1v10.7h-1zM797.2 282.8h1v9.7h-1zM798.7 283.6h1.5v8.9h-1.5zM800.7 283.8h1v8.7h-1zM801.7 277.2h1.5v15.3h-1.5zM803.2 280.7h1v11.8h-1zM804.2 283h1v9.5h-1zM805.2 276.3h1v16.2h-1zM806.2 285h1v7.5h-1zM807.2 282.3h1.5v10.2h-1.5zM808.7 277h1v15.5h-1zM810.2 278.5h1.5v14h-1.5zM811.7 284.9h1v7.6h-1zM813.2 283.6h1.5v8.9h-1.5zM814.7 285.3h1.5v7.2h-1.5zM816.2 284.5h1v8h-1zM817.2 276.8h1v15.7h-1zM818.2 277.1h1.5v15.4h-1.5zM820.2 281.9h1.5v10.6h-1.5zM821.7 283.9h1v8.6h-1zM822.7 283.2h1.5v9.3h-1.5zM824.2 281.2h1v11.3h-1zM825.2 283.1h1v9.4h-1zM826.7 280h1.5v12.5h-1.5zM828.2 284.3h1.5v8.2h-1.5zM830.2 276h1.5v16.5h-1.5zM831.7 281.8h1v10.7h-1zM832.7 281.7h1.5v10.8h-1.5zM834.2 285.5h1v7h-1zM835.2 283.2h1.5v9.3h-1.5zM836.7 281.7h1.5v10.8h-1.5zM838.2 282.5h1v10h-1zM839.2 281.6h1v10.9h-1zM840.7 279.2h1v13.3h-1zM841.7 280.6h1.5v11.9h-1.5zM843.7 284h1v8.5h-1zM844.7 285.1h1.5v7.4h-1.5zM846.2 283.2h1v9.3h-1zM847.2 280.5h1v12h-1zM848.2 276.1h1v16.4h-1zM849.2 283.7h1.5v8.8h-1.5zM850.7 281.8h1v10.7h-1zM851.7 277.3h1v15.2h-1zM852.7 281.8h1v10.7h-1zM853.7 280.9h1.5v11.6h-1.5zM855.2 282.8h1.5v9.7h-1.5zM856.7 284.2h1v8.3h-1zM858.2 283.7h1.5v8.8h-1.5zM859.7 284.9h1v7.6h-1zM860.7 275.7h1.5v16.8h-1.5zM862.7 278.5h1v14h-1zM863.7 282.2h1v10.3h-1zM865.2 280.9h1v11.6h-1zM866.2 280.7h1v11.8h-1zM867.2 285.2h1v7.3h-1zM868.2 278.8h1v13.7h-1zM869.2 282.3h1v10.2h-1zM870.7 282.3h1.5v10.2h-1.5zM872.2 283.4h1v9.1h-1zM873.2 276.9h1v15.6h-1zM874.7 284.8h1.5v7.7h-1.5zM876.2 285h1v7.5h-1zM877.2 277h1v15.5h-1zM878.2 281.6h1.5v10.9h-1.5zM880.2 284.5h1v8h-1zM881.2 281.2h1v11.3h-1zM882.2 278.4h1v14.1h-1zM895.1 277.6h1v14.9h-1zM896.1 281h1v11.5h-1zM897.1 279.5h1.5v13h-1.5zM898.6 284.2h1.5v8.3h-1.5zM900.1 284h1v8.5h-1zM901.1 282.3h1v10.2h-1zM902.6 281.9h1v10.6h-1zM903.6 282.3h1.5v10.2h-1.5zM905.1 283.8h1v8.7h-1zM906.1 277.3h1.5v15.2h-1.5zM907.6 283h1v9.5h-1zM909.1 285.4h1v7.1h-1zM910.1 278.5h1v14h-1zM911.6 280.4h1v12.1h-1zM912.6 283.2h1v9.3h-1zM913.6 280.1h1v12.4h-1zM914.6 282.4h1v10.1h-1zM916.1 278.3h1v14.2h-1zM917.1 277.3h1v15.2h-1zM918.6 276.1h1v16.4h-1zM919.6 276.9h1.5v15.6h-1.5zM921.6 283.8h1v8.7h-1zM923.1 280.4h1v12.1h-1zM924.1 284.6h1v7.9h-1zM925.1 279.6h1.5v12.9h-1.5zM927.1 282.4h1v10.1h-1zM928.1 276.8h1v15.7h-1zM929.1 282.9h1v9.6h-1zM930.1 276.6h1v15.9h-1zM931.1 284.5h1v8h-1zM932.1 284.6h1.5v7.9h-1.5zM934.1 275.6h1v16.9h-1zM935.1 280.6h1.5v11.9h-1.5zM936.6 285.1h1v7.4h-1zM937.6 279.5h1v13h-1zM938.6 285.1h1v7.4h-1zM939.6 280.7h1.5v11.8h-1.5zM941.1 278.8h1v13.7h-1zM942.1 277.6h1v14.9h-1zM943.1 284.4h1v8.1h-1zM944.1 282.7h1.5v9.8h-1.5zM945.6 284.8h1v7.7h-1zM947.1 280.2h1v12.3h-1zM948.6 282.9h1v9.6h-1zM949.6 282.3h1.5v10.2h-1.5zM951.1 281.7h1.5v10.8h-1.5zM952.6 276.8h1.5v15.7h-1.5zM954.6 279.1h1v13.4h-1zM955.6 280.5h1.5v12h-1.5zM957.1 285.5h1v7h-1zM958.6 282.6h1v9.9h-1zM959.6 282h1v10.5h-1zM961.1 284.2h1v8.3h-1zM962.1 282.5h1v10h-1zM963.1 277h1v15.5h-1zM964.6 276.3h1.5v16.2h-1.5zM966.1 280.6h1.5v11.9h-1.5zM967.6 275.6h1v16.9h-1zM968.6 284.2h1.5v8.3h-1.5zM970.6 284.3h1v8.2h-1zM971.6 284.7h1v7.8h-1zM973.1 282.6h1.5v9.9h-1.5zM974.6 278.5h1.5v14h-1.5zM976.1 285h1v7.5h-1zM977.6 285.2h1.5v7.3h-1.5zM979.1 279.5h1v13h-1zM980.1 284.6h1.5v7.9h-1.5zM981.6 276.6h1v15.9h-1zM994.1 284.3h1v8.2h-1zM995.1 280.8h1.5v11.7h-1.5zM996.6 278.5h1v14h-1zM998.1 277.8h1v14.7h-1zM999.1 281.6h1v10.9h-1zM1000.1 279.3h1v13.2h-1zM1001.6 280.5h1v12h-1zM1003.1 280.5h1v12h-1zM1004.6 280.5h1.5v12h-1.5zM1006.6 280.5h1.5v12h-1.5zM1008.1 283.3h1.5v9.2h-1.5zM1009.6 285h1.5v7.5h-1.5zM1011.6 284.1h1v8.4h-1zM1013.1 277.5h1v15h-1zM1014.1 276h1v16.5h-1zM1015.1 285.3h1.5v7.2h-1.5zM1016.6 276.5h1v16h-1zM1017.6 282.5h1v10h-1zM1019.1 275.6h1v16.9h-1zM1020.1 282.6h1v9.9h-1zM1021.1 276h1.5v16.5h-1.5zM1022.6 280.6h1v11.9h-1zM1023.6 280.8h1.5v11.7h-1.5zM1025.1 283.2h1v9.3h-1zM1026.1 282.9h1v9.6h-1zM1027.1 276.6h1v15.9h-1zM1028.1 281.2h1.5v11.3h-1.5zM1029.6 280.2h1.5v12.3h-1.5zM1031.6 285.5h1v7h-1zM1032.6 284.2h1v8.3h-1zM1033.6 278.6h1.5v13.9h-1.5zM1035.6 281.2h1v11.3h-1zM1036.6 284.1h1v8.4h-1zM1037.6 282.9h1v9.6h-1zM1038.6 281.8h1.5v10.7h-1.5zM1040.6 279.1h1v13.4h-1zM1041.6 285.3h1v7.2h-1zM1043.1 275.5h1v17h-1zM1044.1 281.5h1v11h-1zM1045.1 278.5h1.5v14h-1.5zM1046.6 284.7h1.5v7.8h-1.5zM1048.1 284.4h1v8.1h-1zM1049.1 275.9h1.5v16.6h-1.5zM1050.6 283.1h1v9.4h-1zM1051.6 281.8h1v10.7h-1zM1052.6 280.7h1v11.8h-1zM1053.6 283.6h1v8.9h-1zM1054.6 276.6h1.5v15.9h-1.5zM1056.1 282.8h1v9.7h-1zM1057.1 277.9h1v14.6h-1zM1058.6 281.6h1v10.9h-1zM1059.6 279.2h1v13.3h-1zM1060.6 281.4h1v11.1h-1zM1062.1 284.8h1v7.7h-1zM1063.1 280.6h1v11.9h-1zM1064.6 285.1h1v7.4h-1zM1065.6 283.8h1.5v8.7h-1.5zM1067.6 285.5h1v7h-1zM1068.6 281.3h1.5v11.2h-1.5zM1070.1 276.8h1v15.7h-1zM1071.1 281.5h1v11h-1zM1072.1 276.5h1v16h-1zM1073.1 276.6h1v15.9h-1zM1074.1 277.9h1v14.6h-1zM1075.1 282.8h1v9.7h-1zM1076.1 278.2h1v14.3h-1zM1077.6 277.5h1.5v15h-1.5zM1079.6 282.2h1.5v10.3h-1.5zM1081.1 281.5h1v11h-1zM1093 282.2h1v10.3h-1zM1094 276h1.5v16.5h-1.5zM1095.5 280.5h1v12h-1zM1097 285.1h1v7.4h-1zM1098.5 279.1h1v13.4h-1zM1099.5 282.7h1v9.8h-1zM1100.5 283.7h1.5v8.8h-1.5zM1102 281.3h1.5v11.2h-1.5zM1103.5 281.5h1v11h-1zM1104.5 280.5h1.5v12h-1.5zM1106 284h1.5v8.5h-1.5zM1107.5 285.5h1v7h-1zM1109 278.8h1.5v13.7h-1.5zM1111 279.9h1.5v12.6h-1.5zM1112.5 281.1h1v11.4h-1zM1114 280.7h1.5v11.8h-1.5zM1115.5 282.7h1v9.8h-1zM1116.5 281.7h1.5v10.8h-1.5zM1118 277.3h1v15.2h-1zM1119.5 285.1h1v7.4h-1zM1120.5 284.4h1v8.1h-1zM1121.5 277.2h1.5v15.3h-1.5zM1123.5 281.5h1.5v11h-1.5zM1125 281.9h1v10.6h-1zM1126 278.4h1v14.1h-1zM1127 281.8h1v10.7h-1zM1128.5 279h1v13.5h-1zM1130 282.9h1.5v9.6h-1.5zM1131.5 284.9h1v7.6h-1zM1132.5 283h1.5v9.5h-1.5zM1134 277.4h1v15.1h-1zM1135 281.1h1.5v11.4h-1.5zM1136.5 281.6h1v10.9h-1zM1138 279h1v13.5h-1zM1139.5 285.2h1.5v7.3h-1.5zM1141 278.4h1v14.1h-1zM1142 281.2h1v11.3h-1zM1143 278h1.5v14.5h-1.5zM1144.5 282h1v10.5h-1zM1146 279.3h1v13.2h-1zM1147 276.1h1v16.4h-1zM1148 284.9h1v7.6h-1zM1149 278.3h1v14.2h-1zM1150 280.2h1.5v12.3h-1.5zM1151.5 279h1v13.5h-1zM1153 283.2h1v9.3h-1zM1154 281h1.5v11.5h-1.5zM1155.5 275.8h1.5v16.7h-1.5zM1157 281.9h1.5v10.6h-1.5zM1158.5 276.2h1.5v16.3h-1.5zM1160 275.5h1.5v17h-1.5zM1161.5 284.2h1v8.3h-1zM1163 281.4h1v11.1h-1zM1164 282.8h1.5v9.7h-1.5zM1165.5 284.8h1.5v7.7h-1.5zM1167 276.6h1.5v15.9h-1.5zM1168.5 279.1h1v13.4h-1zM1169.5 276.5h1v16h-1zM1171 278.9h1v13.6h-1zM1172 280.3h1v12.2h-1zM1173.5 281.7h1.5v10.8h-1.5zM1175.5 279.9h1.5v12.6h-1.5zM1177.5 280.4h1v12.1h-1zM1179 276.4h1.5v16.1h-1.5zM1192 281.4h1v11.1h-1zM1193 279h1v13.5h-1zM1194 276.7h1v15.8h-1zM1195 283.5h1.5v9h-1.5zM1196.5 285.3h1v7.2h-1zM1197.5 284.4h1v8.1h-1zM1198.5 277.2h1v15.3h-1zM1200 279.9h1v12.6h-1zM1201.5 279h1v13.5h-1zM1202.5 284h1v8.5h-1zM1204 281h1v11.5h-1zM1205 279.9h1v12.6h-1zM1206 279h1v13.5h-1zM1207 280.2h1.5v12.3h-1.5zM1209 277.4h1v15.1h-1zM1210 279.5h1.5v13h-1.5zM1211.5 282.3h1v10.2h-1zM1213 284.7h1v7.8h-1zM1214 282.9h1v9.6h-1zM1215 282.9h1.5v9.6h-1.5zM1216.5 283h1v9.5h-1zM1218 282.4h1v10.1h-1zM1219 282.7h1.5v9.8h-1.5zM1220.5 282h1.5v10.5h-1.5zM1222.5 276.3h1v16.2h-1zM1224 281.6h1v10.9h-1zM1225.5 283.8h1v8.7h-1zM1226.5 285h1v7.5h-1zM1227.5 280.5h1v12h-1zM1228.5 280.3h1.5v12.2h-1.5zM1230 283.9h1v8.6h-1zM1231 281.2h1.5v11.3h-1.5zM1233 281h1v11.5h-1zM1234 282.6h1v9.9h-1zM1235.5 278h1v14.5h-1zM1236.5 279.8h1v12.7h-1zM1237.5 281.9h1v10.6h-1zM1239 281.2h1.5v11.3h-1.5zM1240.5 282.3h1.5v10.2h-1.5zM1242 278.5h1.5v14h-1.5zM1243.5 280.7h1.5v11.8h-1.5zM1245.5 283h1v9.5h-1zM1246.5 283.4h1v9.1h-1zM1247.5 277.1h1.5v15.4h-1.5zM1249 281.4h1.5v11.1h-1.5zM1250.5 280.1h1v12.4h-1zM1251.5 279.6h1v12.9h-1zM1252.5 282.8h1v9.7h-1zM1253.5 285.5h1.5v7h-1.5zM1255 283.7h1.5v8.8h-1.5zM1256.5 283.4h1v9.1h-1zM1257.5 282.8h1v9.7h-1zM1259 285.5h1v7h-1zM1260.5 285.1h1v7.4h-1zM1261.5 283.8h1.5v8.7h-1.5zM1263 283.9h1v8.6h-1zM1264 285h1v7.5h-1zM1265 284.3h1v8.2h-1zM1266.5 284.9h1v7.6h-1zM1268 283.1h1.5v9.4h-1.5zM1269.5 279.3h1v13.2h-1zM1271 283h1.5v9.5h-1.5zM1273 280.7h1v11.8h-1zM1274 281.4h1v11.1h-1zM1275 285.1h1v7.4h-1zM1276 282.9h1v9.6h-1zM1277.5 278.1h1v14.4h-1zM1278.5 281.6h1v10.9h-1zM1291 277.3h1.5v15.2h-1.5zM1292.5 282.6h1v9.9h-1zM1294 275.6h1.5v16.9h-1.5zM1295.5 281.5h1v11h-1zM1297 284h1v8.5h-1zM1298.5 284.7h1v7.8h-1zM1299.5 282.7h1.5v9.8h-1.5zM1301 281.4h1.5v11.1h-1.5zM1302.5 282.4h1v10.1h-1zM1304 279h1v13.5h-1zM1305 283.2h1.5v9.3h-1.5zM1307 281.2h1v11.3h-1zM1308.5 283h1.5v9.5h-1.5zM1310 282.9h1v9.6h-1zM1311 279.4h1v13.1h-1zM1312 282.4h1.5v10.1h-1.5zM1313.5 283.8h1.5v8.7h-1.5zM1315 278.1h1v14.4h-1zM1316.5 284.4h1.5v8.1h-1.5zM1318.5 278.5h1.5v14h-1.5zM1320 282.4h1.5v10.1h-1.5zM1321.5 283.6h1.5v8.9h-1.5zM1323.5 281h1v11.5h-1zM1324.5 282.3h1v10.2h-1zM1326 280.8h1v11.7h-1zM1327 281.5h1.5v11h-1.5zM1329 284.3h1v8.2h-1zM1330 276.1h1v16.4h-1zM1331 283.4h1v9.1h-1zM1332.5 282.6h1.5v9.9h-1.5zM1334 283.8h1v8.7h-1zM1335 276.6h1.5v15.9h-1.5zM1336.5 283h1v9.5h-1zM1337.5 284.7h1v7.8h-1zM1338.5 278.4h1.5v14.1h-1.5zM1340 276.4h1v16.1h-1zM1341.5 280.5h1.5v12h-1.5zM1343 281.3h1v11.2h-1zM1344.5 285.2h1.5v7.3h-1.5zM1346 283.1h1v9.4h-1zM1347.5 281.7h1.5v10.8h-1.5zM1349.5 281.7h1v10.8h-1zM1350.5 277.2h1.5v15.3h-1.5zM1352 282.3h1v10.2h-1zM1353.5 284.5h1v8h-1zM1354.5 283.2h1.5v9.3h-1.5zM1356.5 280.4h1.5v12.1h-1.5zM1358 281.7h1.5v10.8h-1.5zM1359.5 278.6h1.5v13.9h-1.5zM1361 284.5h1v8h-1zM1362 279.5h1v13h-1zM1363 278.7h1v13.8h-1zM1364.5 280h1v12.5h-1zM1365.5 282.1h1.5v10.4h-1.5zM1367 280.2h1v12.3h-1zM1368 279.8h1v12.7h-1zM1369 285.3h1v7.2h-1zM1370 279.4h1v13.1h-1zM1371.5 280.2h1v12.3h-1zM1372.5 284.1h1v8.4h-1zM1373.5 280.3h1v12.2h-1zM1374.5 285.1h1v7.4h-1zM1375.5 276h1v16.5h-1zM1376.5 276h1v16.5h-1zM1377.5 280.1h1v12.4h-1zM1389.9 277.2h1v15.3h-1zM1390.9 279.2h1.5v13.3h-1.5zM1392.4 279.1h1v13.4h-1zM1393.4 283.1h1v9.4h-1zM1394.4 277.1h1v15.4h-1zM1395.4 279h1v13.5h-1zM1396.4 283.7h1v8.8h-1zM1397.4 283.9h1.5v8.6h-1.5zM1398.9 282.7h1.5v9.8h-1.5zM1400.4 281.4h1.5v11.1h-1.5zM1401.9 283.7h1v8.8h-1zM1403.4 283.7h1.5v8.8h-1.5zM1404.9 283h1.5v9.5h-1.5zM1406.9 279.5h1v13h-1zM1408.4 284.4h1.5v8.1h-1.5zM1409.9 279.7h1v12.8h-1zM1410.9 281.4h1v11.1h-1zM1412.4 279.2h1v13.3h-1zM1413.9 282.9h1.5v9.6h-1.5zM1415.4 284h1v8.5h-1zM1416.9 277.2h1.5v15.3h-1.5zM1418.4 282.4h1v10.1h-1zM1419.4 284.1h1v8.4h-1zM1420.4 285.3h1.5v7.2h-1.5zM1422.4 284.2h1v8.3h-1zM1423.4 282.9h1.5v9.6h-1.5zM1425.4 280.6h1v11.9h-1zM1426.4 285.1h1v7.4h-1zM1427.4 282.8h1v9.7h-1zM1428.4 281.2h1v11.3h-1zM1429.4 283h1v9.5h-1zM1430.4 281.2h1v11.3h-1zM1431.4 278.3h1v14.2h-1zM1432.9 284.1h1v8.4h-1zM1433.9 279.9h1v12.6h-1zM1434.9 276.4h1.5v16.1h-1.5zM1436.4 282.9h1v9.6h-1zM1437.4 281.2h1v11.3h-1zM1438.4 277.8h1v14.7h-1zM1439.4 283h1v9.5h-1zM1440.4 285h1.5v7.5h-1.5zM1441.9 281.5h1v11h-1zM1442.9 284.8h1v7.7h-1zM1443.9 284.1h1v8.4h-1zM1444.9 277.7h1v14.8h-1zM1445.9 279.7h1v12.8h-1zM1446.9 283.8h1v8.7h-1zM1447.9 280.4h1.5v12.1h-1.5zM1449.4 281h1.5v11.5h-1.5zM1450.9 284.9h1v7.6h-1zM1451.9 281.5h1.5v11h-1.5zM1453.4 276.3h1v16.2h-1zM1454.9 285.1h1.5v7.4h-1.5zM1456.4 282.1h1v10.4h-1zM1457.9 282h1v10.5h-1zM1458.9 282.6h1v9.9h-1zM1459.9 280.4h1v12.1h-1zM1460.9 279.4h1.5v13.1h-1.5zM1462.4 282.7h1v9.8h-1zM1463.4 280.3h1v12.2h-1zM1464.4 282.9h1v9.6h-1zM1465.4 285.3h1v7.2h-1zM1466.9 278.8h1v13.7h-1zM1467.9 282h1.5v10.5h-1.5zM1469.4 282.5h1.5v10h-1.5zM1470.9 281.1h1v11.4h-1zM1471.9 275.8h1v16.7h-1zM1473.4 281.2h1v11.3h-1zM1474.9 279.2h1v13.3h-1zM1475.9 281.2h1.5v11.3h-1.5zM1488.9 276.4h1v16.1h-1zM1489.9 278.8h1v13.7h-1zM1490.9 281.5h1v11h-1zM1491.9 281.7h1v10.8h-1zM1492.9 279.3h1v13.2h-1zM1494.4 277.8h1v14.7h-1zM1495.4 284.7h1v7.8h-1zM1496.4 282.8h1.5v9.7h-1.5zM1497.9 282.3h1v10.2h-1zM1498.9 285h1.5v7.5h-1.5zM1500.4 280.4h1.5v12.1h-1.5zM1501.9 285.5h1v7h-1zM1502.9 278.6h1v13.9h-1zM1503.9 283.9h1.5v8.6h-1.5zM1505.9 276.5h1v16h-1zM1506.9 282.3h1.5v10.2h-1.5zM1508.4 280.6h1v11.9h-1zM1509.4 283h1v9.5h-1zM1510.4 285.1h1v7.4h-1zM1511.4 281.3h1.5v11.2h-1.5zM1512.9 283h1v9.5h-1zM1513.9 285.1h1v7.4h-1zM1514.9 282.4h1.5v10.1h-1.5zM1516.4 280.9h1v11.6h-1zM1517.4 279.4h1v13.1h-1zM1518.4 284.4h1.5v8.1h-1.5zM1520.4 275.7h1.5v16.8h-1.5zM1521.9 278h1v14.5h-1zM1522.9 276.2h1v16.3h-1zM1523.9 279.4h1.5v13.1h-1.5zM1525.4 284.4h1v8.1h-1zM1526.9 277.7h1v14.8h-1zM1527.9 281.5h1.5v11h-1.5zM1529.9 285.2h1v7.3h-1zM1530.9 281.3h1.5v11.2h-1.5zM1532.4 284h1.5v8.5h-1.5zM1533.9 275.9h1v16.6h-1zM1535.4 281.6h1.5v10.9h-1.5zM1536.9 278h1.5v14.5h-1.5zM1538.4 284.1h1.5v8.4h-1.5zM1539.9 278.5h1.5v14h-1.5zM1541.9 284.2h1.5v8.3h-1.5zM1543.4 281.4h1.5v11.1h-1.5zM1544.9 277.5h1v15h-1zM1545.9 277.6h1.5v14.9h-1.5zM1547.4 278.1h1v14.4h-1zM1548.4 276.5h1.5v16h-1.5zM1549.9 277.5h1.5v15h-1.5zM1551.9 275.7h1.5v16.8h-1.5zM1553.9 282.8h1.5v9.7h-1.5zM1555.4 281.9h1v10.6h-1zM1556.4 279.4h1v13.1h-1zM1557.4 284h1v8.5h-1zM1558.4 278.1h1v14.4h-1zM1559.4 283.6h1v8.9h-1zM1560.4 281.7h1.5v10.8h-1.5zM1561.9 285h1v7.5h-1zM1562.9 283.6h1v8.9h-1zM1563.9 281.6h1v10.9h-1zM1564.9 285.2h1v7.3h-1zM1565.9 280.5h1v12h-1zM1566.9 277h1v15.5h-1zM1567.9 281h1.5v11.5h-1.5zM1569.9 285.4h1v7.1h-1zM1570.9 277.6h1v14.9h-1zM1571.9 285.4h1v7.1h-1zM1572.9 285.3h1.5v7.2h-1.5zM1574.9 277.2h1.5v15.3h-1.5z" fill="#45b3af" fill-opacity="0.72"/><rect x="591" y="331.5" width="896" height="1" fill="#a9cfcd" /><path d="M499.3 307.5h1v25h-1zM500.3 306.8h1v25.7h-1zM501.3 314.3h1.5v18.2h-1.5zM502.8 317.6h1.5v14.9h-1.5zM504.8 322.4h1v10.1h-1zM506.3 307.8h1v24.7h-1zM507.3 316.5h1v16h-1zM508.3 318.8h1.5v13.7h-1.5zM509.8 312.6h1.5v19.9h-1.5zM511.3 312.5h1.5v20h-1.5zM512.8 312.4h1v20.1h-1zM513.8 306.6h1.5v25.9h-1.5zM515.8 313h1v19.5h-1zM516.8 308.2h1v24.3h-1zM517.8 315.9h1v16.6h-1zM518.8 320.9h1v11.6h-1zM519.8 323.1h1.5v9.4h-1.5zM521.3 312.3h1v20.2h-1zM522.3 311.1h1.5v21.4h-1.5zM523.8 318.2h1v14.3h-1zM524.8 311h1v21.5h-1zM525.8 307.1h1v25.4h-1zM526.8 322.9h1v9.6h-1zM527.8 318.4h1.5v14.1h-1.5zM529.3 314.7h1v17.8h-1zM530.3 312.7h1v19.8h-1zM531.3 322.6h1v9.9h-1zM532.3 317.3h1v15.2h-1zM533.3 317.6h1v14.9h-1zM534.3 317.1h1.5v15.4h-1.5zM535.8 310.1h1v22.4h-1zM536.8 317.5h1v15h-1zM537.8 311.1h1v21.4h-1zM538.8 318.4h1v14.1h-1zM539.8 316h1.5v16.5h-1.5zM541.3 312.6h1v19.9h-1zM542.3 316.6h1.5v15.9h-1.5zM543.8 321.1h1.5v11.4h-1.5zM545.8 310.8h1.5v21.7h-1.5zM547.3 319.5h1v13h-1zM548.3 319.9h1v12.6h-1zM549.8 310.4h1v22.1h-1zM550.8 315h1v17.5h-1zM551.8 311.6h1v20.9h-1zM552.8 316.6h1.5v15.9h-1.5zM554.3 313.2h1v19.3h-1zM555.3 313.5h1v19h-1zM556.3 314.9h1.5v17.6h-1.5zM557.8 315.4h1v17.1h-1zM558.8 318.2h1v14.3h-1zM559.8 313.8h1.5v18.7h-1.5zM561.3 305.8h1v26.7h-1zM562.3 316.1h1v16.4h-1zM563.8 314.7h1.5v17.8h-1.5zM565.3 318h1.5v14.5h-1.5zM567.3 308.4h1.5v24.1h-1.5zM568.8 323.2h1v9.3h-1zM570.3 315.7h1.5v16.8h-1.5zM571.8 314.2h1v18.3h-1zM572.8 320.7h1.5v11.8h-1.5zM574.3 311h1v21.5h-1zM575.8 308.9h1v23.6h-1zM576.8 307.5h1v25h-1zM577.8 319.1h1v13.4h-1zM579.3 320.2h1v12.3h-1zM580.3 309.6h1.5v22.9h-1.5zM582.3 316.1h1v16.4h-1zM583.3 312.3h1.5v20.2h-1.5zM584.8 315.6h1.5v16.9h-1.5zM586.3 313h1.5v19.5h-1.5zM598.2 307.9h1v24.6h-1zM599.2 307.6h1.5v24.9h-1.5zM601.2 306h1v26.5h-1zM602.2 308.5h1v24h-1zM603.2 316.1h1v16.4h-1zM604.2 308.9h1v23.6h-1zM605.2 320.2h1.5v12.3h-1.5zM606.7 320.5h1v12h-1zM607.7 317.6h1v14.9h-1zM608.7 322.5h1v10h-1zM609.7 317h1.5v15.5h-1.5zM611.7 318.2h1v14.3h-1zM613.2 310.5h1v22h-1zM614.2 323h1v9.5h-1zM615.2 322.2h1.5v10.3h-1.5zM616.7 320.3h1v12.2h-1zM617.7 313h1v19.5h-1zM618.7 317.9h1v14.6h-1zM619.7 308.4h1v24.1h-1zM621.2 307.7h1.5v24.8h-1.5zM622.7 320.2h1v12.3h-1zM623.7 311.8h1v20.7h-1zM625.2 309.4h1v23.1h-1zM626.2 311.5h1v21h-1zM627.7 322.1h1v10.4h-1zM629.2 322.2h1v10.3h-1zM630.2 320.7h1v11.8h-1zM631.2 315.8h1v16.7h-1zM632.2 313.7h1.5v18.8h-1.5zM633.7 322.9h1v9.6h-1zM634.7 320.8h1v11.7h-1zM635.7 315.3h1v17.2h-1zM636.7 319.5h1v13h-1zM637.7 309.7h1.5v22.8h-1.5zM639.2 310.5h1.5v22h-1.5zM640.7 316.9h1v15.6h-1zM641.7 309h1.5v23.5h-1.5zM643.7 307.5h1v25h-1zM644.7 319h1v13.5h-1zM646.2 314.2h1v18.3h-1zM647.7 319.7h1v12.8h-1zM648.7 309.5h1v23h-1zM649.7 323h1v9.5h-1zM650.7 317.2h1v15.3h-1zM651.7 323h1v9.5h-1zM652.7 308.4h1.5v24.1h-1.5zM654.7 317.2h1v15.3h-1zM655.7 313.2h1v19.3h-1zM656.7 310.2h1v22.3h-1zM657.7 316h1v16.5h-1zM658.7 320.6h1.5v11.9h-1.5zM660.2 314.6h1.5v17.9h-1.5zM661.7 310.5h1v22h-1zM662.7 306.7h1.5v25.8h-1.5zM664.2 309.6h1v22.9h-1zM665.2 313.8h1v18.7h-1zM666.2 318.9h1v13.6h-1zM667.2 317.3h1v15.2h-1zM668.7 319.6h1v12.9h-1zM669.7 310.6h1v21.9h-1zM671.2 308h1.5v24.5h-1.5zM672.7 310.1h1v22.4h-1zM674.2 312h1v20.5h-1zM675.7 321.6h1v10.9h-1zM676.7 305.8h1.5v26.7h-1.5zM678.2 310.5h1v22h-1zM679.2 309.2h1.5v23.3h-1.5zM681.2 317.4h1v15.1h-1zM682.2 316.6h1.5v15.9h-1.5zM683.7 318.3h1.5v14.2h-1.5zM697.2 307.9h1v24.6h-1zM698.2 308.1h1v24.4h-1zM699.2 307.9h1v24.6h-1zM700.2 318.6h1v13.9h-1zM701.7 308h1v24.5h-1zM703.2 316.7h1.5v15.8h-1.5zM704.7 314.1h1.5v18.4h-1.5zM706.7 313.2h1.5v19.3h-1.5zM708.2 309.8h1.5v22.7h-1.5zM709.7 313.7h1v18.8h-1zM710.7 309.1h1.5v23.4h-1.5zM712.2 306.5h1.5v26h-1.5zM713.7 322.7h1v9.8h-1zM715.2 309h1v23.5h-1zM716.2 316.1h1v16.4h-1zM717.2 314.4h1v18.1h-1zM718.2 319.7h1.5v12.8h-1.5zM719.7 307.9h1v24.6h-1zM720.7 309.5h1v23h-1zM721.7 309.9h1v22.6h-1zM722.7 318h1v14.5h-1zM723.7 313.5h1v19h-1zM724.7 315h1v17.5h-1zM726.2 318h1.5v14.5h-1.5zM727.7 322.5h1.5v10h-1.5zM729.2 306.2h1v26.3h-1zM730.2 321h1v11.5h-1zM731.2 308.5h1v24h-1zM732.2 318h1v14.5h-1zM733.2 312.1h1v20.4h-1zM734.2 308.8h1.5v23.7h-1.5zM735.7 317.8h1.5v14.7h-1.5zM737.2 320.7h1v11.8h-1zM738.2 312.1h1.5v20.4h-1.5zM739.7 309.7h1.5v22.8h-1.5zM741.2 319.6h1.5v12.9h-1.5zM743.2 321.6h1v10.9h-1zM744.7 310.1h1.5v22.4h-1.5zM746.2 320h1.5v12.5h-1.5zM747.7 307.8h1v24.7h-1zM748.7 307.5h1v25h-1zM749.7 307.8h1v24.7h-1zM750.7 313.2h1.5v19.3h-1.5zM752.2 309.2h1v23.3h-1zM753.2 312.9h1v19.6h-1zM754.2 317.1h1v15.4h-1zM755.2 305.9h1.5v26.6h-1.5zM756.7 312.3h1.5v20.2h-1.5zM758.2 317.3h1v15.2h-1zM759.2 319.9h1v12.6h-1zM760.2 307.6h1v24.9h-1zM761.2 311.5h1v21h-1zM762.2 316.1h1v16.4h-1zM763.2 323.3h1v9.2h-1zM764.2 315.1h1.5v17.4h-1.5zM765.7 323.4h1v9.1h-1zM766.7 322.2h1v10.3h-1zM768.2 321.3h1.5v11.2h-1.5zM769.7 308.6h1.5v23.9h-1.5zM771.7 310.2h1v22.3h-1zM772.7 318.1h1v14.4h-1zM773.7 309h1v23.5h-1zM774.7 308.6h1v23.9h-1zM775.7 307.5h1.5v25h-1.5zM777.2 310.9h1v21.6h-1zM778.2 322.8h1v9.7h-1zM779.7 317.4h1v15.1h-1zM780.7 315.8h1v16.7h-1zM781.7 308.6h1.5v23.9h-1.5zM783.2 315.6h1v16.9h-1zM784.2 315.7h1v16.8h-1zM796.2 306.5h1v26h-1zM797.7 315.2h1v17.3h-1zM799.2 309.3h1.5v23.2h-1.5zM800.7 312.2h1v20.3h-1zM801.7 319.1h1.5v13.4h-1.5zM803.7 314.1h1v18.4h-1zM804.7 309.8h1.5v22.7h-1.5zM806.2 317.2h1v15.3h-1zM807.7 313.4h1.5v19.1h-1.5zM809.2 311.9h1.5v20.6h-1.5zM811.2 307.9h1.5v24.6h-1.5zM812.7 323h1v9.5h-1zM814.2 313.2h1v19.3h-1zM815.2 313.5h1v19h-1zM816.2 320.4h1.5v12.1h-1.5zM817.7 310.3h1v22.2h-1zM818.7 319.9h1v12.6h-1zM819.7 307.4h1v25.1h-1zM821.2 319.6h1v12.9h-1zM822.2 319.7h1v12.8h-1zM823.2 322.5h1v10h-1zM824.2 320h1v12.5h-1zM825.2 322h1.5v10.5h-1.5zM826.7 311.4h1.5v21.1h-1.5zM828.7 318.7h1v13.8h-1zM830.2 307.6h1v24.9h-1zM831.2 322.5h1v10h-1zM832.2 319.8h1v12.7h-1zM833.7 305.9h1v26.6h-1zM834.7 315h1.5v17.5h-1.5zM836.2 306.9h1v25.6h-1zM837.2 306.7h1v25.8h-1zM838.7 317.5h1v15h-1zM839.7 306.4h1.5v26.1h-1.5zM841.2 307.4h1v25.1h-1zM842.2 323.1h1.5v9.4h-1.5zM843.7 323.4h1v9.1h-1zM844.7 319.6h1v12.9h-1zM845.7 319.8h1v12.7h-1zM847.2 317.1h1v15.4h-1zM848.2 323.3h1.5v9.2h-1.5zM850.2 306.3h1.5v26.2h-1.5zM851.7 307.7h1v24.8h-1zM852.7 309h1.5v23.5h-1.5zM854.7 312.1h1v20.4h-1zM855.7 322h1v10.5h-1zM856.7 314.1h1v18.4h-1zM857.7 323.4h1v9.1h-1zM858.7 316.6h1v15.9h-1zM859.7 310.3h1v22.2h-1zM860.7 308.4h1v24.1h-1zM861.7 318.5h1v14h-1zM863.2 307.8h1v24.7h-1zM864.2 310.2h1v22.3h-1zM865.7 309.8h1.5v22.7h-1.5zM867.2 309.7h1v22.8h-1zM868.2 312.6h1v19.9h-1zM869.7 311.5h1v21h-1zM870.7 319.5h1v13h-1zM871.7 316.7h1.5v15.8h-1.5zM873.2 312.1h1v20.4h-1zM874.2 315h1v17.5h-1zM875.2 314.3h1v18.2h-1zM876.2 323h1v9.5h-1zM877.7 305.8h1v26.7h-1zM879.2 312.3h1.5v20.2h-1.5zM880.7 315h1v17.5h-1zM881.7 316.9h1v15.6h-1zM883.2 315.2h1.5v17.3h-1.5zM895.1 306.2h1.5v26.3h-1.5zM896.6 316.2h1v16.3h-1zM897.6 314.7h1.5v17.8h-1.5zM899.1 312.3h1.5v20.2h-1.5zM900.6 313.6h1.5v18.9h-1.5zM902.1 312h1v20.5h-1zM903.1 305.5h1v27h-1zM904.1 322.9h1.5v9.6h-1.5zM905.6 323.3h1.5v9.2h-1.5zM907.6 310.4h1v22.1h-1zM909.1 308.1h1v24.4h-1zM910.1 315.8h1v16.7h-1zM911.1 310.9h1v21.6h-1zM912.1 312.7h1v19.8h-1zM913.1 323.5h1.5v9h-1.5zM914.6 311.7h1v20.8h-1zM915.6 315.2h1.5v17.3h-1.5zM917.1 313.7h1v18.8h-1zM918.6 316.7h1.5v15.8h-1.5zM920.1 309.9h1.5v22.6h-1.5zM921.6 319.3h1v13.2h-1zM922.6 321.8h1v10.7h-1zM923.6 316h1v16.5h-1zM925.1 318.4h1.5v14.1h-1.5zM926.6 309.6h1v22.9h-1zM927.6 305.6h1v26.9h-1zM929.1 313.2h1.5v19.3h-1.5zM930.6 308.9h1v23.6h-1zM931.6 306.2h1v26.3h-1zM932.6 316.8h1v15.7h-1zM934.1 308.9h1v23.6h-1zM935.1 312h1.5v20.5h-1.5zM936.6 315.7h1v16.8h-1zM938.1 308.5h1.5v24h-1.5zM939.6 308.7h1.5v23.8h-1.5zM941.1 315.9h1v16.6h-1zM942.1 314.3h1v18.2h-1zM943.1 308.7h1.5v23.8h-1.5zM944.6 310.3h1v22.2h-1zM945.6 317.5h1.5v15h-1.5zM947.1 323.3h1v9.2h-1zM948.1 307.6h1.5v24.9h-1.5zM950.1 311.3h1v21.2h-1zM951.6 313.2h1v19.3h-1zM952.6 308.3h1.5v24.2h-1.5zM954.1 317.1h1.5v15.4h-1.5zM955.6 314.7h1v17.8h-1zM956.6 315.4h1v17.1h-1zM957.6 308.5h1v24h-1zM958.6 323.2h1.5v9.3h-1.5zM960.1 311.7h1v20.8h-1zM961.1 310h1v22.5h-1zM962.1 318.2h1.5v14.3h-1.5zM964.1 314.9h1v17.6h-1zM965.1 313.6h1v18.9h-1zM966.1 311.1h1v21.4h-1zM967.6 309.8h1.5v22.7h-1.5zM969.1 312h1.5v20.5h-1.5zM970.6 322.9h1.5v9.6h-1.5zM972.6 318.7h1v13.8h-1zM974.1 322.7h1v9.8h-1zM975.1 307.7h1v24.8h-1zM976.1 321.4h1v11.1h-1zM977.1 310.9h1.5v21.6h-1.5zM978.6 316.4h1.5v16.1h-1.5zM980.1 310.3h1.5v22.2h-1.5zM982.1 312.7h1v19.8h-1zM994.1 306h1.5v26.5h-1.5zM995.6 314.8h1.5v17.7h-1.5zM997.1 322.9h1.5v9.6h-1.5zM998.6 312.7h1v19.8h-1zM999.6 309.8h1.5v22.7h-1.5zM1001.1 321.5h1v11h-1zM1002.1 308.8h1.5v23.7h-1.5zM1003.6 318.9h1v13.6h-1zM1005.1 309h1.5v23.5h-1.5zM1006.6 312.3h1v20.2h-1zM1007.6 320.5h1v12h-1zM1008.6 312.8h1v19.7h-1zM1009.6 315.4h1.5v17.1h-1.5zM1011.1 311.6h1v20.9h-1zM1012.1 314h1.5v18.5h-1.5zM1013.6 311h1v21.5h-1zM1014.6 312.5h1.5v20h-1.5zM1016.1 313.1h1v19.4h-1zM1017.1 319h1v13.5h-1zM1018.1 319.5h1.5v13h-1.5zM1019.6 319.5h1.5v13h-1.5zM1021.1 313.9h1v18.6h-1zM1022.1 314h1.5v18.5h-1.5zM1023.6 320.5h1v12h-1zM1025.1 306.5h1.5v26h-1.5zM1026.6 321.8h1v10.7h-1zM1027.6 309.9h1v22.6h-1zM1028.6 310.5h1v22h-1zM1029.6 319.3h1v13.2h-1zM1030.6 308.5h1v24h-1zM1031.6 319.8h1v12.7h-1zM1032.6 314.3h1v18.2h-1zM1033.6 307.1h1.5v25.4h-1.5zM1035.1 312.6h1v19.9h-1zM1036.1 312.9h1v19.6h-1zM1037.6 319.8h1.5v12.7h-1.5zM1039.1 309.2h1v23.3h-1zM1040.6 320.7h1.5v11.8h-1.5zM1042.6 305.9h1.5v26.6h-1.5zM1044.1 311.8h1v20.7h-1zM1045.1 308.8h1.5v23.7h-1.5zM1046.6 310.4h1.5v22.1h-1.5zM1048.1 308.6h1v23.9h-1zM1049.6 320.9h1.5v11.6h-1.5zM1051.1 315.5h1v17h-1zM1052.6 309h1.5v23.5h-1.5zM1054.1 317.3h1v15.2h-1zM1055.6 313.8h1v18.7h-1zM1056.6 307.7h1v24.8h-1zM1057.6 309.3h1.5v23.2h-1.5zM1059.6 305.5h1v27h-1zM1060.6 318h1v14.5h-1zM1062.1 318.5h1v14h-1zM1063.1 322.2h1v10.3h-1zM1064.1 313.3h1v19.2h-1zM1065.1 314.1h1v18.4h-1zM1066.1 307.5h1v25h-1zM1067.6 308.8h1v23.7h-1zM1068.6 310.8h1.5v21.7h-1.5zM1070.1 313.3h1v19.2h-1zM1071.6 309.8h1v22.7h-1zM1072.6 318.2h1v14.3h-1zM1073.6 316.5h1.5v16h-1.5zM1075.1 320.7h1.5v11.8h-1.5zM1077.1 310.9h1v21.6h-1zM1078.1 312.3h1v20.2h-1zM1079.1 307.2h1v25.3h-1zM1080.6 318.2h1v14.3h-1zM1093 306.2h1v26.3h-1zM1094 307.9h1v24.6h-1zM1095 318.8h1v13.7h-1zM1096.5 309.2h1v23.3h-1zM1097.5 315.4h1.5v17.1h-1.5zM1099 307.7h1v24.8h-1zM1100 322.6h1.5v9.9h-1.5zM1101.5 308.6h1.5v23.9h-1.5zM1103 316.9h1.5v15.6h-1.5zM1104.5 321.1h1.5v11.4h-1.5zM1106.5 313.8h1v18.7h-1zM1107.5 312.8h1v19.7h-1zM1108.5 312.9h1v19.6h-1zM1109.5 318.4h1v14.1h-1zM1110.5 323.1h1.5v9.4h-1.5zM1112.5 310.5h1.5v22h-1.5zM1114 319.5h1.5v13h-1.5zM1115.5 322.7h1v9.8h-1zM1116.5 314.5h1v18h-1zM1117.5 316.6h1v15.9h-1zM1118.5 311.7h1v20.8h-1zM1119.5 309.7h1.5v22.8h-1.5zM1121 307.2h1.5v25.3h-1.5zM1122.5 311.1h1.5v21.4h-1.5zM1124.5 306.7h1v25.8h-1zM1126 313.2h1.5v19.3h-1.5zM1127.5 308.8h1.5v23.7h-1.5zM1129 309.5h1.5v23h-1.5zM1130.5 316.3h1.5v16.2h-1.5zM1132 318.9h1.5v13.6h-1.5zM1133.5 315.4h1.5v17.1h-1.5zM1135 306.8h1v25.7h-1zM1136 319.2h1v13.3h-1zM1137 314.1h1.5v18.4h-1.5zM1138.5 321.8h1v10.7h-1zM1139.5 313.3h1.5v19.2h-1.5zM1141 322.9h1.5v9.6h-1.5zM1142.5 307.7h1.5v24.8h-1.5zM1144 310.4h1v22.1h-1zM1145 314.9h1v17.6h-1zM1146.5 322.6h1v9.9h-1zM1148 311.4h1.5v21.1h-1.5zM1149.5 314.3h1v18.2h-1zM1150.5 308.9h1v23.6h-1zM1151.5 323.1h1v9.4h-1zM1152.5 310.7h1v21.8h-1zM1153.5 322.6h1.5v9.9h-1.5zM1155 316.9h1.5v15.6h-1.5zM1157 308.2h1.5v24.3h-1.5zM1158.5 314.3h1v18.2h-1zM1159.5 321.1h1v11.4h-1zM1161 314.4h1v18.1h-1zM1162 312.1h1.5v20.4h-1.5zM1163.5 314.8h1v17.7h-1zM1164.5 320.2h1.5v12.3h-1.5zM1166.5 309.1h1v23.4h-1zM1167.5 322.2h1v10.3h-1zM1169 322h1v10.5h-1zM1170 305.9h1.5v26.6h-1.5zM1171.5 321.1h1v11.4h-1zM1172.5 317.8h1v14.7h-1zM1173.5 319h1v13.5h-1zM1175 310.9h1v21.6h-1zM1176.5 317.7h1v14.8h-1zM1177.5 311h1v21.5h-1zM1178.5 307.3h1.5v25.2h-1.5zM1180 311.6h1v20.9h-1zM1192 306.1h1v26.4h-1zM1193 307.2h1v25.3h-1zM1194.5 317h1v15.5h-1zM1195.5 306.9h1v25.6h-1zM1196.5 322.3h1.5v10.2h-1.5zM1198 317.4h1v15.1h-1zM1199 313.9h1v18.6h-1zM1200.5 316.2h1.5v16.3h-1.5zM1202 308.5h1v24h-1zM1203 315.7h1.5v16.8h-1.5zM1205 306.3h1v26.2h-1zM1206 310.4h1.5v22.1h-1.5zM1207.5 306.2h1.5v26.3h-1.5zM1209 320.6h1v11.9h-1zM1210 308.6h1.5v23.9h-1.5zM1211.5 306h1v26.5h-1zM1212.5 315.6h1v16.9h-1zM1213.5 317.8h1v14.7h-1zM1215 308.8h1v23.7h-1zM1216 312.7h1v19.8h-1zM1217 320.4h1.5v12.1h-1.5zM1218.5 307.5h1.5v25h-1.5zM1220 319.2h1v13.3h-1zM1221 310.8h1.5v21.7h-1.5zM1222.5 311.9h1v20.6h-1zM1223.5 319.9h1.5v12.6h-1.5zM1225 310.2h1v22.3h-1zM1226 306.7h1v25.8h-1zM1227.5 316.6h1v15.9h-1zM1229 312.2h1v20.3h-1zM1230 314.4h1v18.1h-1zM1231 316.4h1.5v16.1h-1.5zM1233 320h1v12.5h-1zM1234.5 322.4h1v10.1h-1zM1235.5 321.3h1v11.2h-1zM1236.5 320.3h1v12.2h-1zM1238 309.3h1.5v23.2h-1.5zM1239.5 317.4h1v15.1h-1zM1240.5 309.2h1v23.3h-1zM1241.5 320.3h1v12.2h-1zM1242.5 306.9h1v25.6h-1zM1243.5 310.2h1.5v22.3h-1.5zM1245 322.8h1.5v9.7h-1.5zM1246.5 310.9h1v21.6h-1zM1248 315.1h1.5v17.4h-1.5zM1250 319.2h1v13.3h-1zM1251 322.8h1v9.7h-1zM1252 314.5h1v18h-1zM1253 308.6h1v23.9h-1zM1254 315.9h1.5v16.6h-1.5zM1256 307.3h1.5v25.2h-1.5zM1257.5 311.8h1v20.7h-1zM1258.5 310.3h1v22.2h-1zM1259.5 310.4h1v22.1h-1zM1260.5 320.1h1v12.4h-1zM1262 312h1v20.5h-1zM1263 309.7h1.5v22.8h-1.5zM1264.5 322.4h1.5v10.1h-1.5zM1266 317.6h1v14.9h-1zM1267.5 320h1v12.5h-1zM1268.5 307.1h1v25.4h-1zM1269.5 321.8h1v10.7h-1zM1270.5 309.5h1v23h-1zM1271.5 310.9h1v21.6h-1zM1272.5 322.4h1v10.1h-1zM1273.5 313h1.5v19.5h-1.5zM1275 311.8h1v20.7h-1zM1276.5 309.3h1v23.2h-1zM1277.5 313.1h1v19.4h-1zM1278.5 313.5h1v19h-1zM1291 306h1v26.5h-1zM1292 306.5h1v26h-1zM1293 322.1h1.5v10.4h-1.5zM1294.5 307.6h1.5v24.9h-1.5zM1296 308h1v24.5h-1zM1297 310.3h1v22.2h-1zM1298 319h1v13.5h-1zM1299.5 313.7h1.5v18.8h-1.5zM1301 316h1v16.5h-1zM1302 314.6h1v17.9h-1zM1303 306.2h1v26.3h-1zM1304.5 307.7h1.5v24.8h-1.5zM1306 310.7h1.5v21.8h-1.5zM1308 316.7h1.5v15.8h-1.5zM1309.5 311.8h1v20.7h-1zM1311 317.1h1v15.4h-1zM1312.5 307.8h1v24.7h-1zM1313.5 309h1v23.5h-1zM1314.5 320.9h1.5v11.6h-1.5zM1316 309.2h1v23.3h-1zM1317.5 312.6h1v19.9h-1zM1318.5 320.9h1.5v11.6h-1.5zM1320.5 314.6h1v17.9h-1zM1321.5 310.4h1v22.1h-1zM1323 307.7h1.5v24.8h-1.5zM1324.5 309.1h1v23.4h-1zM1325.5 313.8h1v18.7h-1zM1326.5 307.9h1v24.6h-1zM1327.5 323.2h1v9.3h-1zM1328.5 308.7h1.5v23.8h-1.5zM1330.5 305.8h1.5v26.7h-1.5zM1332 309.7h1v22.8h-1zM1333 310.5h1v22h-1zM1334 321.4h1v11.1h-1zM1335 310h1.5v22.5h-1.5zM1337 309.7h1v22.8h-1zM1338 318h1v14.5h-1zM1339.5 306h1v26.5h-1zM1340.5 317.9h1v14.6h-1zM1341.5 320.2h1v12.3h-1zM1342.5 312.1h1.5v20.4h-1.5zM1344 308.6h1v23.9h-1zM1345 321.6h1v10.9h-1zM1346 314.1h1v18.4h-1zM1347 322h1v10.5h-1zM1348 310.3h1v22.2h-1zM1349 317.9h1v14.6h-1zM1350 320.8h1v11.7h-1zM1351 322.7h1v9.8h-1zM1352 322.5h1.5v10h-1.5zM1354 314.5h1v18h-1zM1355 320.1h1v12.4h-1zM1356 315.4h1v17.1h-1zM1357 308.8h1v23.7h-1zM1358 307.3h1v25.2h-1zM1359.5 308h1v24.5h-1zM1360.5 317.1h1.5v15.4h-1.5zM1362 323.2h1v9.3h-1zM1363 314.5h1v18h-1zM1364 305.9h1.5v26.6h-1.5zM1365.5 317.8h1v14.7h-1zM1367 316.1h1.5v16.4h-1.5zM1368.5 316.4h1.5v16.1h-1.5zM1370 308.9h1.5v23.6h-1.5zM1371.5 308.7h1v23.8h-1zM1372.5 312.8h1v19.7h-1zM1373.5 318.2h1v14.3h-1zM1374.5 309.1h1.5v23.4h-1.5zM1376 314.6h1v17.9h-1zM1377 307.1h1v25.4h-1zM1378 315.8h1v16.7h-1zM1389.9 307.7h1v24.8h-1zM1390.9 305.9h1.5v26.6h-1.5zM1392.4 308.4h1.5v24.1h-1.5zM1393.9 315.9h1v16.6h-1zM1394.9 322.8h1v9.7h-1zM1395.9 315.7h1v16.8h-1zM1396.9 318.1h1v14.4h-1zM1397.9 322.3h1.5v10.2h-1.5zM1399.9 314.6h1v17.9h-1zM1400.9 317.4h1.5v15.1h-1.5zM1402.9 316.7h1v15.8h-1zM1404.4 314h1.5v18.5h-1.5zM1405.9 313.2h1v19.3h-1zM1406.9 310.2h1v22.3h-1zM1407.9 310.9h1v21.6h-1zM1408.9 312.7h1v19.8h-1zM1410.4 315.6h1.5v16.9h-1.5zM1411.9 311.9h1.5v20.6h-1.5zM1413.9 311.9h1v20.6h-1zM1414.9 315.8h1.5v16.7h-1.5zM1416.4 310.7h1v21.8h-1zM1417.4 308.7h1.5v23.8h-1.5zM1418.9 323.1h1.5v9.4h-1.5zM1420.4 315.7h1v16.8h-1zM1421.4 321.9h1.5v10.6h-1.5zM1422.9 318h1.5v14.5h-1.5zM1424.4 312.8h1v19.7h-1zM1425.9 309.2h1.5v23.3h-1.5zM1427.4 317.5h1v15h-1zM1428.9 320.6h1v11.9h-1zM1429.9 315.1h1v17.4h-1zM1431.4 323h1v9.5h-1zM1432.9 315.9h1v16.6h-1zM1433.9 308.7h1v23.8h-1zM1434.9 307.2h1.5v25.3h-1.5zM1436.4 320.1h1v12.4h-1zM1437.4 308.1h1.5v24.4h-1.5zM1438.9 317.1h1v15.4h-1zM1439.9 313.6h1v18.9h-1zM1440.9 316.8h1v15.7h-1zM1441.9 313.2h1.5v19.3h-1.5zM1443.4 315.5h1v17h-1zM1444.4 309.3h1v23.2h-1zM1445.4 309.8h1v22.7h-1zM1446.4 321.9h1.5v10.6h-1.5zM1447.9 321.2h1v11.3h-1zM1448.9 315.8h1v16.7h-1zM1449.9 319.5h1.5v13h-1.5zM1451.9 316h1.5v16.5h-1.5zM1453.9 309.3h1v23.2h-1zM1454.9 310.6h1.5v21.9h-1.5zM1456.4 314.8h1v17.7h-1zM1457.4 310.4h1v22.1h-1zM1458.4 310.2h1v22.3h-1zM1459.4 311.8h1v20.7h-1zM1460.4 314.2h1v18.3h-1zM1461.9 317h1v15.5h-1zM1462.9 310.3h1v22.2h-1zM1464.4 307.9h1.5v24.6h-1.5zM1465.9 316.5h1v16h-1zM1466.9 308.2h1v24.3h-1zM1467.9 311h1v21.5h-1zM1468.9 323.1h1.5v9.4h-1.5zM1470.4 320.8h1v11.7h-1zM1471.4 318.9h1.5v13.6h-1.5zM1472.9 316.4h1v16.1h-1zM1474.4 309.3h1v23.2h-1zM1475.4 308.8h1v23.7h-1zM1476.4 308.9h1.5v23.6h-1.5zM1488.9 307.5h1.5v25h-1.5zM1490.4 309.4h1v23.1h-1zM1491.4 307.6h1v24.9h-1zM1492.4 313.9h1.5v18.6h-1.5zM1493.9 318.7h1v13.8h-1zM1494.9 323.4h1v9.1h-1zM1495.9 312h1.5v20.5h-1.5zM1497.4 311.9h1v20.6h-1zM1498.4 317.6h1.5v14.9h-1.5zM1499.9 320.3h1v12.2h-1zM1501.4 306.6h1.5v25.9h-1.5zM1502.9 321.9h1v10.6h-1zM1503.9 315.3h1.5v17.2h-1.5zM1505.9 317.2h1.5v15.3h-1.5zM1507.9 308.7h1v23.8h-1zM1508.9 322.1h1.5v10.4h-1.5zM1510.4 306.7h1.5v25.8h-1.5zM1511.9 317.9h1v14.6h-1zM1512.9 315.1h1v17.4h-1zM1513.9 313.1h1v19.4h-1zM1514.9 318.2h1v14.3h-1zM1515.9 319h1v13.5h-1zM1517.4 311.6h1v20.9h-1zM1518.9 310.2h1v22.3h-1zM1520.4 315.9h1v16.6h-1zM1521.4 318.3h1v14.2h-1zM1522.9 312.6h1.5v19.9h-1.5zM1524.4 311.2h1v21.3h-1zM1525.4 307.8h1v24.7h-1zM1526.4 311.2h1v21.3h-1zM1527.4 309.6h1v22.9h-1zM1528.9 310.2h1v22.3h-1zM1530.4 322h1.5v10.5h-1.5zM1531.9 308.5h1.5v24h-1.5zM1533.4 307.9h1.5v24.6h-1.5zM1534.9 313.8h1.5v18.7h-1.5zM1536.4 310.9h1v21.6h-1zM1537.9 314.1h1v18.4h-1zM1538.9 322.2h1v10.3h-1zM1540.4 322.4h1v10.1h-1zM1541.9 305.5h1v27h-1zM1542.9 317.4h1v15.1h-1zM1543.9 320h1v12.5h-1zM1544.9 309.5h1v23h-1zM1545.9 322.8h1v9.7h-1zM1547.4 323.2h1.5v9.3h-1.5zM1548.9 316h1v16.5h-1zM1549.9 312.2h1.5v20.3h-1.5zM1551.9 310h1v22.5h-1zM1552.9 321.2h1v11.3h-1zM1553.9 322.4h1v10.1h-1zM1554.9 314.8h1v17.7h-1zM1555.9 310h1v22.5h-1zM1556.9 307.6h1.5v24.9h-1.5zM1558.4 306.7h1v25.8h-1zM1559.9 314.4h1.5v18.1h-1.5zM1561.9 320h1.5v12.5h-1.5zM1563.4 313.7h1.5v18.8h-1.5zM1564.9 309.1h1v23.4h-1zM1565.9 319.5h1v13h-1zM1567.4 321.2h1v11.3h-1zM1568.4 311.4h1.5v21.1h-1.5zM1569.9 322h1v10.5h-1zM1570.9 317.4h1v15.1h-1zM1571.9 310.7h1v21.8h-1zM1572.9 314.2h1v18.3h-1zM1573.9 314.4h1v18.1h-1zM1574.9 313.3h1.5v19.2h-1.5z" fill="#62c6c2" fill-opacity="0.55"/><path d="M499.3 324.8h1v7.7h-1zM500.3 322h1v10.5h-1zM501.3 316.1h1.5v16.4h-1.5zM502.8 318.4h1.5v14.1h-1.5zM504.8 324h1v8.5h-1zM506.3 322.4h1v10.1h-1zM507.3 317.7h1v14.8h-1zM508.3 320.8h1.5v11.7h-1.5zM509.8 320.9h1.5v11.6h-1.5zM511.3 322h1.5v10.5h-1.5zM512.8 324.8h1v7.7h-1zM513.8 318h1.5v14.5h-1.5zM515.8 318.6h1v13.9h-1zM516.8 321h1v11.5h-1zM517.8 322.1h1v10.4h-1zM518.8 321.9h1v10.6h-1zM519.8 323.7h1.5v8.8h-1.5zM521.3 316.8h1v15.7h-1zM522.3 323.6h1.5v8.9h-1.5zM523.8 319.5h1v13h-1zM524.8 324.1h1v8.4h-1zM525.8 316.5h1v16h-1zM526.8 323.2h1v9.3h-1zM527.8 323.4h1.5v9.1h-1.5zM529.3 321.9h1v10.6h-1zM530.3 322.7h1v9.8h-1zM531.3 324.5h1v8h-1zM532.3 319.3h1v13.2h-1zM533.3 318.2h1v14.3h-1zM534.3 317.8h1.5v14.7h-1.5zM535.8 317.1h1v15.4h-1zM536.8 323.6h1v8.9h-1zM537.8 318.3h1v14.2h-1zM538.8 320h1v12.5h-1zM539.8 325.1h1.5v7.4h-1.5zM541.3 316.8h1v15.7h-1zM542.3 323.9h1.5v8.6h-1.5zM543.8 322.5h1.5v10h-1.5zM545.8 318.9h1.5v13.6h-1.5zM547.3 319.6h1v12.9h-1zM548.3 321.7h1v10.8h-1zM549.8 317.1h1v15.4h-1zM550.8 318.8h1v13.7h-1zM551.8 316.7h1v15.8h-1zM552.8 320.3h1.5v12.2h-1.5zM554.3 320.9h1v11.6h-1zM555.3 319.7h1v12.8h-1zM556.3 322.3h1.5v10.2h-1.5zM557.8 321.1h1v11.4h-1zM558.8 320.5h1v12h-1zM559.8 322.3h1.5v10.2h-1.5zM561.3 322.9h1v9.6h-1zM562.3 319.4h1v13.1h-1zM563.8 323.5h1.5v9h-1.5zM565.3 321.2h1.5v11.3h-1.5zM567.3 319.2h1.5v13.3h-1.5zM568.8 325.2h1v7.3h-1zM570.3 323.2h1.5v9.3h-1.5zM571.8 316.9h1v15.6h-1zM572.8 320.8h1.5v11.7h-1.5zM574.3 323.5h1v9h-1zM575.8 319.7h1v12.8h-1zM576.8 322.1h1v10.4h-1zM577.8 324.8h1v7.7h-1zM579.3 320.3h1v12.2h-1zM580.3 320.6h1.5v11.9h-1.5zM582.3 324.7h1v7.8h-1zM583.3 316.4h1.5v16.1h-1.5zM584.8 323.8h1.5v8.7h-1.5zM586.3 321.7h1.5v10.8h-1.5zM598.2 316.5h1v16h-1zM599.2 324.2h1.5v8.3h-1.5zM601.2 319.1h1v13.4h-1zM602.2 318.5h1v14h-1zM603.2 321.9h1v10.6h-1zM604.2 318.6h1v13.9h-1zM605.2 321h1.5v11.5h-1.5zM606.7 325.3h1v7.2h-1zM607.7 320.4h1v12.1h-1zM608.7 325.1h1v7.4h-1zM609.7 319.3h1.5v13.2h-1.5zM611.7 319.1h1v13.4h-1zM613.2 320.1h1v12.4h-1zM614.2 325.4h1v7.1h-1zM615.2 324.7h1.5v7.8h-1.5zM616.7 323.5h1v9h-1zM617.7 322.1h1v10.4h-1zM618.7 323h1v9.5h-1zM619.7 324.4h1v8.1h-1zM621.2 316.7h1.5v15.8h-1.5zM622.7 321.5h1v11h-1zM623.7 324.7h1v7.8h-1zM625.2 323.9h1v8.6h-1zM626.2 318.1h1v14.4h-1zM627.7 322.8h1v9.7h-1zM629.2 324.8h1v7.7h-1zM630.2 322.5h1v10h-1zM631.2 322.9h1v9.6h-1zM632.2 317.4h1.5v15.1h-1.5zM633.7 325h1v7.5h-1zM634.7 324.6h1v7.9h-1zM635.7 324.9h1v7.6h-1zM636.7 320.7h1v11.8h-1zM637.7 317.8h1.5v14.7h-1.5zM639.2 323h1.5v9.5h-1.5zM640.7 322.2h1v10.3h-1zM641.7 317.2h1.5v15.3h-1.5zM643.7 324.1h1v8.4h-1zM644.7 323.9h1v8.6h-1zM646.2 320h1v12.5h-1zM647.7 322.3h1v10.2h-1zM648.7 322.9h1v9.6h-1zM649.7 324h1v8.5h-1zM650.7 324.5h1v8h-1zM651.7 325h1v7.5h-1zM652.7 316.6h1.5v15.9h-1.5zM654.7 319.1h1v13.4h-1zM655.7 317.1h1v15.4h-1zM656.7 319.7h1v12.8h-1zM657.7 320.2h1v12.3h-1zM658.7 321.4h1.5v11.1h-1.5zM660.2 322h1.5v10.5h-1.5zM661.7 323.7h1v8.8h-1zM662.7 319.7h1.5v12.8h-1.5zM664.2 325h1v7.5h-1zM665.2 318.6h1v13.9h-1zM666.2 323.8h1v8.7h-1zM667.2 322.3h1v10.2h-1zM668.7 324h1v8.5h-1zM669.7 317.3h1v15.2h-1zM671.2 323.1h1.5v9.4h-1.5zM672.7 322.5h1v10h-1zM674.2 320.5h1v12h-1zM675.7 325.1h1v7.4h-1zM676.7 322.5h1.5v10h-1.5zM678.2 322.3h1v10.2h-1zM679.2 325.1h1.5v7.4h-1.5zM681.2 322h1v10.5h-1zM682.2 317.2h1.5v15.3h-1.5zM683.7 323.9h1.5v8.6h-1.5zM697.2 322.9h1v9.6h-1zM698.2 324h1v8.5h-1zM699.2 324.4h1v8.1h-1zM700.2 321.7h1v10.8h-1zM701.7 316.3h1v16.2h-1zM703.2 319h1.5v13.5h-1.5zM704.7 324.2h1.5v8.3h-1.5zM706.7 321.6h1.5v10.9h-1.5zM708.2 324.9h1.5v7.6h-1.5zM709.7 315.7h1v16.8h-1zM710.7 319.9h1.5v12.6h-1.5zM712.2 325.5h1.5v7h-1.5zM713.7 323.2h1v9.3h-1zM715.2 320h1v12.5h-1zM716.2 324.7h1v7.8h-1zM717.2 320.3h1v12.2h-1zM718.2 320.4h1.5v12.1h-1.5zM719.7 316.2h1v16.3h-1zM720.7 325.2h1v7.3h-1zM721.7 324.1h1v8.4h-1zM722.7 321.5h1v11h-1zM723.7 320.4h1v12.1h-1zM724.7 318.7h1v13.8h-1zM726.2 324.1h1.5v8.4h-1.5zM727.7 325.5h1.5v7h-1.5zM729.2 320.1h1v12.4h-1zM730.2 322.3h1v10.2h-1zM731.2 320.6h1v11.9h-1zM732.2 320.4h1v12.1h-1zM733.2 323h1v9.5h-1zM734.2 316.3h1.5v16.2h-1.5zM735.7 325.4h1.5v7.1h-1.5zM737.2 321h1v11.5h-1zM738.2 320.4h1.5v12.1h-1.5zM739.7 323.3h1.5v9.2h-1.5zM741.2 324.4h1.5v8.1h-1.5zM743.2 324h1v8.5h-1zM744.7 325.1h1.5v7.4h-1.5zM746.2 320.2h1.5v12.3h-1.5zM747.7 316.2h1v16.3h-1zM748.7 316.9h1v15.6h-1zM749.7 321h1v11.5h-1zM750.7 323.8h1.5v8.7h-1.5zM752.2 321.1h1v11.4h-1zM753.2 323.8h1v8.7h-1zM754.2 317.2h1v15.3h-1zM755.2 319.8h1.5v12.7h-1.5zM756.7 322.9h1.5v9.6h-1.5zM758.2 324.9h1v7.6h-1zM759.2 323.6h1v8.9h-1zM760.2 317.9h1v14.6h-1zM761.2 324.7h1v7.8h-1zM762.2 321.9h1v10.6h-1zM763.2 324.9h1v7.6h-1zM764.2 320.3h1.5v12.2h-1.5zM765.7 324.4h1v8.1h-1zM766.7 324.4h1v8.1h-1zM768.2 324.2h1.5v8.3h-1.5zM769.7 322.3h1.5v10.2h-1.5zM771.7 316.3h1v16.2h-1zM772.7 318.6h1v13.9h-1zM773.7 318.7h1v13.8h-1zM774.7 324.5h1v8h-1zM775.7 318.2h1.5v14.3h-1.5zM777.2 318.6h1v13.9h-1zM778.2 324.8h1v7.7h-1zM779.7 322.5h1v10h-1zM780.7 325.1h1v7.4h-1zM781.7 318h1.5v14.5h-1.5zM783.2 317.6h1v14.9h-1zM784.2 320.2h1v12.3h-1zM796.2 323.9h1v8.6h-1zM797.7 319.3h1v13.2h-1zM799.2 322.4h1.5v10.1h-1.5zM800.7 323.7h1v8.8h-1zM801.7 324.9h1.5v7.6h-1.5zM803.7 321.9h1v10.6h-1zM804.7 320h1.5v12.5h-1.5zM806.2 324h1v8.5h-1zM807.7 316.4h1.5v16.1h-1.5zM809.2 325.5h1.5v7h-1.5zM811.2 321.6h1.5v10.9h-1.5zM812.7 323.1h1v9.4h-1zM814.2 321.7h1v10.8h-1zM815.2 321.8h1v10.7h-1zM816.2 321.4h1.5v11.1h-1.5zM817.7 320.1h1v12.4h-1zM818.7 323.2h1v9.3h-1zM819.7 323.4h1v9.1h-1zM821.2 321.3h1v11.2h-1zM822.2 324h1v8.5h-1zM823.2 322.6h1v9.9h-1zM824.2 324.8h1v7.7h-1zM825.2 323.1h1.5v9.4h-1.5zM826.7 319.2h1.5v13.3h-1.5zM828.7 324.3h1v8.2h-1zM830.2 325.2h1v7.3h-1zM831.2 324.7h1v7.8h-1zM832.2 325h1v7.5h-1zM833.7 315.7h1v16.8h-1zM834.7 323h1.5v9.5h-1.5zM836.2 320.8h1v11.7h-1zM837.2 316.8h1v15.7h-1zM838.7 317.8h1v14.7h-1zM839.7 317.3h1.5v15.2h-1.5zM841.2 315.7h1v16.8h-1zM842.2 324.1h1.5v8.4h-1.5zM843.7 323.8h1v8.7h-1zM844.7 325.1h1v7.4h-1zM845.7 320.7h1v11.8h-1zM847.2 323.2h1v9.3h-1zM848.2 324.3h1.5v8.2h-1.5zM850.2 325.5h1.5v7h-1.5zM851.7 323.5h1v9h-1zM852.7 323.5h1.5v9h-1.5zM854.7 321.4h1v11.1h-1zM855.7 322.8h1v9.7h-1zM856.7 324.9h1v7.6h-1zM857.7 323.8h1v8.7h-1zM858.7 318.9h1v13.6h-1zM859.7 323.3h1v9.2h-1zM860.7 324.7h1v7.8h-1zM861.7 325h1v7.5h-1zM863.2 321.4h1v11.1h-1zM864.2 316.9h1v15.6h-1zM865.7 323.9h1.5v8.6h-1.5zM867.2 323.9h1v8.6h-1zM868.2 325.1h1v7.4h-1zM869.7 318.4h1v14.1h-1zM870.7 321.4h1v11.1h-1zM871.7 322.8h1.5v9.7h-1.5zM873.2 321.9h1v10.6h-1zM874.2 318.8h1v13.7h-1zM875.2 325.2h1v7.3h-1zM876.2 323.2h1v9.3h-1zM877.7 319.6h1v12.9h-1zM879.2 323.8h1.5v8.7h-1.5zM880.7 315.8h1v16.7h-1zM881.7 321.9h1v10.6h-1zM883.2 321.6h1.5v10.9h-1.5zM895.1 318.8h1.5v13.7h-1.5zM896.6 318.7h1v13.8h-1zM897.6 319.7h1.5v12.8h-1.5zM899.1 324.4h1.5v8.1h-1.5zM900.6 324.3h1.5v8.2h-1.5zM902.1 323.2h1v9.3h-1zM903.1 324.4h1v8.1h-1zM904.1 323.9h1.5v8.6h-1.5zM905.6 324.9h1.5v7.6h-1.5zM907.6 318.2h1v14.3h-1zM909.1 318.7h1v13.8h-1zM910.1 320.6h1v11.9h-1zM911.1 316.6h1v15.9h-1zM912.1 321.7h1v10.8h-1zM913.1 324h1.5v8.5h-1.5zM914.6 322.1h1v10.4h-1zM915.6 318.7h1.5v13.8h-1.5zM917.1 317.7h1v14.8h-1zM918.6 320h1.5v12.5h-1.5zM920.1 319.7h1.5v12.8h-1.5zM921.6 324h1v8.5h-1zM922.6 324.1h1v8.4h-1zM923.6 320.7h1v11.8h-1zM925.1 324.6h1.5v7.9h-1.5zM926.6 319.1h1v13.4h-1zM927.6 319.2h1v13.3h-1zM929.1 316.1h1.5v16.4h-1.5zM930.6 322.8h1v9.7h-1zM931.6 316.8h1v15.7h-1zM932.6 322.8h1v9.7h-1zM934.1 318.7h1v13.8h-1zM935.1 322.3h1.5v10.2h-1.5zM936.6 321.3h1v11.2h-1zM938.1 317.9h1.5v14.6h-1.5zM939.6 318.7h1.5v13.8h-1.5zM941.1 316.3h1v16.2h-1zM942.1 320.4h1v12.1h-1zM943.1 324.9h1.5v7.6h-1.5zM944.6 317.2h1v15.3h-1zM945.6 318.9h1.5v13.6h-1.5zM947.1 324h1v8.5h-1zM948.1 322.5h1.5v10h-1.5zM950.1 321.2h1v11.3h-1zM951.6 316.4h1v16.1h-1zM952.6 325h1.5v7.5h-1.5zM954.1 325.2h1.5v7.3h-1.5zM955.6 320.6h1v11.9h-1zM956.6 319.8h1v12.7h-1zM957.6 324.4h1v8.1h-1zM958.6 325.1h1.5v7.4h-1.5zM960.1 317.4h1v15.1h-1zM961.1 320.7h1v11.8h-1zM962.1 324.4h1.5v8.1h-1.5zM964.1 324.3h1v8.2h-1zM965.1 322h1v10.5h-1zM966.1 321.5h1v11h-1zM967.6 318h1.5v14.5h-1.5zM969.1 317.5h1.5v15h-1.5zM970.6 323.6h1.5v8.9h-1.5zM972.6 324.8h1v7.7h-1zM974.1 325.3h1v7.2h-1zM975.1 324.9h1v7.6h-1zM976.1 324.6h1v7.9h-1zM977.1 315.7h1.5v16.8h-1.5zM978.6 324.2h1.5v8.3h-1.5zM980.1 321.4h1.5v11.1h-1.5zM982.1 320.9h1v11.6h-1zM994.1 321.2h1.5v11.3h-1.5zM995.6 316.8h1.5v15.7h-1.5zM997.1 325.2h1.5v7.3h-1.5zM998.6 323.5h1v9h-1zM999.6 318.4h1.5v14.1h-1.5zM1001.1 323.6h1v8.9h-1zM1002.1 319.6h1.5v12.9h-1.5zM1003.6 319.4h1v13.1h-1zM1005.1 316.8h1.5v15.7h-1.5zM1006.6 324h1v8.5h-1zM1007.6 324h1v8.5h-1zM1008.6 325.5h1v7h-1zM1009.6 321.4h1.5v11.1h-1.5zM1011.1 322.6h1v9.9h-1zM1012.1 317.8h1.5v14.7h-1.5zM1013.6 316.4h1v16.1h-1zM1014.6 322.7h1.5v9.8h-1.5zM1016.1 323h1v9.5h-1zM1017.1 321h1v11.5h-1zM1018.1 324.3h1.5v8.2h-1.5zM1019.6 320.5h1.5v12h-1.5zM1021.1 323.9h1v8.6h-1zM1022.1 315.5h1.5v17h-1.5zM1023.6 325h1v7.5h-1zM1025.1 324h1.5v8.5h-1.5zM1026.6 322.3h1v10.2h-1zM1027.6 319.7h1v12.8h-1zM1028.6 318.5h1v14h-1zM1029.6 325.2h1v7.3h-1zM1030.6 321.5h1v11h-1zM1031.6 325h1v7.5h-1zM1032.6 315.5h1v17h-1zM1033.6 323.1h1.5v9.4h-1.5zM1035.1 316.1h1v16.4h-1zM1036.1 321.6h1v10.9h-1zM1037.6 324.7h1.5v7.8h-1.5zM1039.1 320.5h1v12h-1zM1040.6 323.9h1.5v8.6h-1.5zM1042.6 323.8h1.5v8.7h-1.5zM1044.1 321.7h1v10.8h-1zM1045.1 318.5h1.5v14h-1.5zM1046.6 321.8h1.5v10.7h-1.5zM1048.1 321.2h1v11.3h-1zM1049.6 321h1.5v11.5h-1.5zM1051.1 320h1v12.5h-1zM1052.6 325.5h1.5v7h-1.5zM1054.1 324.3h1v8.2h-1zM1055.6 320.9h1v11.6h-1zM1056.6 323.1h1v9.4h-1zM1057.6 323.8h1.5v8.7h-1.5zM1059.6 316.6h1v15.9h-1zM1060.6 324.4h1v8.1h-1zM1062.1 322.1h1v10.4h-1zM1063.1 323.2h1v9.3h-1zM1064.1 319.4h1v13.1h-1zM1065.1 322.9h1v9.6h-1zM1066.1 317.7h1v14.8h-1zM1067.6 320.4h1v12.1h-1zM1068.6 323.1h1.5v9.4h-1.5zM1070.1 319h1v13.5h-1zM1071.6 317.5h1v15h-1zM1072.6 324.8h1v7.7h-1zM1073.6 323.1h1.5v9.4h-1.5zM1075.1 325.3h1.5v7.2h-1.5zM1077.1 318h1v14.5h-1zM1078.1 316.4h1v16.1h-1zM1079.1 321.5h1v11h-1zM1080.6 319.5h1v13h-1zM1093 325h1v7.5h-1zM1094 317.9h1v14.6h-1zM1095 320.6h1v11.9h-1zM1096.5 324.6h1v7.9h-1zM1097.5 320.1h1.5v12.4h-1.5zM1099 320.1h1v12.4h-1zM1100 324.7h1.5v7.8h-1.5zM1101.5 323.5h1.5v9h-1.5zM1103 323.3h1.5v9.2h-1.5zM1104.5 324.8h1.5v7.7h-1.5zM1106.5 322.6h1v9.9h-1zM1107.5 321.3h1v11.2h-1zM1108.5 317.1h1v15.4h-1zM1109.5 319.3h1v13.2h-1zM1110.5 325.3h1.5v7.2h-1.5zM1112.5 319.7h1.5v12.8h-1.5zM1114 323.1h1.5v9.4h-1.5zM1115.5 323.8h1v8.7h-1zM1116.5 325.2h1v7.3h-1zM1117.5 322.3h1v10.2h-1zM1118.5 319.7h1v12.8h-1zM1119.5 316.6h1.5v15.9h-1.5zM1121 323.4h1.5v9.1h-1.5zM1122.5 316.2h1.5v16.3h-1.5zM1124.5 319.3h1v13.2h-1zM1126 325.3h1.5v7.2h-1.5zM1127.5 321.1h1.5v11.4h-1.5zM1129 322.1h1.5v10.4h-1.5zM1130.5 320.4h1.5v12.1h-1.5zM1132 319.6h1.5v12.9h-1.5zM1133.5 317.4h1.5v15.1h-1.5zM1135 322.9h1v9.6h-1zM1136 321.8h1v10.7h-1zM1137 324.7h1.5v7.8h-1.5zM1138.5 323.9h1v8.6h-1zM1139.5 324.2h1.5v8.3h-1.5zM1141 323.9h1.5v8.6h-1.5zM1142.5 320.4h1.5v12.1h-1.5zM1144 325.4h1v7.1h-1zM1145 320.9h1v11.6h-1zM1146.5 323h1v9.5h-1zM1148 317.2h1.5v15.3h-1.5zM1149.5 325h1v7.5h-1zM1150.5 315.7h1v16.8h-1zM1151.5 324.6h1v7.9h-1zM1152.5 322.9h1v9.6h-1zM1153.5 323.4h1.5v9.1h-1.5zM1155 318.1h1.5v14.4h-1.5zM1157 316.7h1.5v15.8h-1.5zM1158.5 315.9h1v16.6h-1zM1159.5 323.8h1v8.7h-1zM1161 325.4h1v7.1h-1zM1162 318.6h1.5v13.9h-1.5zM1163.5 318.9h1v13.6h-1zM1164.5 325.4h1.5v7.1h-1.5zM1166.5 317.1h1v15.4h-1zM1167.5 324.8h1v7.7h-1zM1169 325.3h1v7.2h-1zM1170 320.5h1.5v12h-1.5zM1171.5 324.7h1v7.8h-1zM1172.5 323.5h1v9h-1zM1173.5 321.8h1v10.7h-1zM1175 323h1v9.5h-1zM1176.5 324.6h1v7.9h-1zM1177.5 318.8h1v13.7h-1zM1178.5 317.5h1.5v15h-1.5zM1180 319.5h1v13h-1zM1192 320.8h1v11.7h-1zM1193 324.8h1v7.7h-1zM1194.5 322.9h1v9.6h-1zM1195.5 321.9h1v10.6h-1zM1196.5 324.4h1.5v8.1h-1.5zM1198 324.1h1v8.4h-1zM1199 318.8h1v13.7h-1zM1200.5 319.9h1.5v12.6h-1.5zM1202 322.8h1v9.7h-1zM1203 319.4h1.5v13.1h-1.5zM1205 322.7h1v9.8h-1zM1206 321.3h1.5v11.2h-1.5zM1207.5 322h1.5v10.5h-1.5zM1209 321h1v11.5h-1zM1210 317.7h1.5v14.8h-1.5zM1211.5 317.2h1v15.3h-1zM1212.5 322.4h1v10.1h-1zM1213.5 319.9h1v12.6h-1zM1215 320.4h1v12.1h-1zM1216 323.1h1v9.4h-1zM1217 320.9h1.5v11.6h-1.5zM1218.5 320.2h1.5v12.3h-1.5zM1220 324.9h1v7.6h-1zM1221 319.2h1.5v13.3h-1.5zM1222.5 315.9h1v16.6h-1zM1223.5 324.1h1.5v8.4h-1.5zM1225 317.6h1v14.9h-1zM1226 319.2h1v13.3h-1zM1227.5 317.4h1v15.1h-1zM1229 321.7h1v10.8h-1zM1230 325h1v7.5h-1zM1231 324.3h1.5v8.2h-1.5zM1233 321h1v11.5h-1zM1234.5 323.4h1v9.1h-1zM1235.5 322.8h1v9.7h-1zM1236.5 323.3h1v9.2h-1zM1238 319.1h1.5v13.4h-1.5zM1239.5 318.3h1v14.2h-1zM1240.5 323h1v9.5h-1zM1241.5 324.8h1v7.7h-1zM1242.5 317.6h1v14.9h-1zM1243.5 319.5h1.5v13h-1.5zM1245 325.1h1.5v7.4h-1.5zM1246.5 318.5h1v14h-1zM1248 324.4h1.5v8.1h-1.5zM1250 323h1v9.5h-1zM1251 324.8h1v7.7h-1zM1252 318.8h1v13.7h-1zM1253 316.7h1v15.8h-1zM1254 318.9h1.5v13.6h-1.5zM1256 321.4h1.5v11.1h-1.5zM1257.5 324.4h1v8.1h-1zM1258.5 324.8h1v7.7h-1zM1259.5 323.5h1v9h-1zM1260.5 320.3h1v12.2h-1zM1262 318.8h1v13.7h-1zM1263 318.6h1.5v13.9h-1.5zM1264.5 325.2h1.5v7.3h-1.5zM1266 323.7h1v8.8h-1zM1267.5 321.5h1v11h-1zM1268.5 324.3h1v8.2h-1zM1269.5 324.5h1v8h-1zM1270.5 316.2h1v16.3h-1zM1271.5 320.1h1v12.4h-1zM1272.5 324.5h1v8h-1zM1273.5 325h1.5v7.5h-1.5zM1275 319h1v13.5h-1zM1276.5 325.5h1v7h-1zM1277.5 318.7h1v13.8h-1zM1278.5 320.2h1v12.3h-1zM1291 322.3h1v10.2h-1zM1292 325.1h1v7.4h-1zM1293 325.5h1.5v7h-1.5zM1294.5 319.7h1.5v12.8h-1.5zM1296 324.6h1v7.9h-1zM1297 322.3h1v10.2h-1zM1298 323.2h1v9.3h-1zM1299.5 318.6h1.5v13.9h-1.5zM1301 322.6h1v9.9h-1zM1302 321.1h1v11.4h-1zM1303 322h1v10.5h-1zM1304.5 323h1.5v9.5h-1.5zM1306 321.6h1.5v10.9h-1.5zM1308 321.6h1.5v10.9h-1.5zM1309.5 320.5h1v12h-1zM1311 317.1h1v15.4h-1zM1312.5 317.7h1v14.8h-1zM1313.5 325h1v7.5h-1zM1314.5 325.1h1.5v7.4h-1.5zM1316 317.3h1v15.2h-1zM1317.5 321.1h1v11.4h-1zM1318.5 325.3h1.5v7.2h-1.5zM1320.5 323.4h1v9.1h-1zM1321.5 325.2h1v7.3h-1zM1323 320.1h1.5v12.4h-1.5zM1324.5 316.9h1v15.6h-1zM1325.5 321.7h1v10.8h-1zM1326.5 323.4h1v9.1h-1zM1327.5 324.2h1v8.3h-1zM1328.5 323.3h1.5v9.2h-1.5zM1330.5 322.5h1.5v10h-1.5zM1332 315.8h1v16.7h-1zM1333 318.9h1v13.6h-1zM1334 324.9h1v7.6h-1zM1335 318.3h1.5v14.2h-1.5zM1337 321.2h1v11.3h-1zM1338 322.9h1v9.6h-1zM1339.5 324.6h1v7.9h-1zM1340.5 319.7h1v12.8h-1zM1341.5 323.4h1v9.1h-1zM1342.5 323.1h1.5v9.4h-1.5zM1344 316.9h1v15.6h-1zM1345 322.6h1v9.9h-1zM1346 318.2h1v14.3h-1zM1347 323h1v9.5h-1zM1348 325.5h1v7h-1zM1349 324.9h1v7.6h-1zM1350 322.6h1v9.9h-1zM1351 324.9h1v7.6h-1zM1352 324.6h1.5v7.9h-1.5zM1354 317.5h1v15h-1zM1355 324.1h1v8.4h-1zM1356 322.6h1v9.9h-1zM1357 319.5h1v13h-1zM1358 319.4h1v13.1h-1zM1359.5 318h1v14.5h-1zM1360.5 320.6h1.5v11.9h-1.5zM1362 323.4h1v9.1h-1zM1363 317.5h1v15h-1zM1364 315.8h1.5v16.7h-1.5zM1365.5 321h1v11.5h-1zM1367 316.8h1.5v15.7h-1.5zM1368.5 323.6h1.5v8.9h-1.5zM1370 318.1h1.5v14.4h-1.5zM1371.5 317.8h1v14.7h-1zM1372.5 320.5h1v12h-1zM1373.5 318.3h1v14.2h-1zM1374.5 325.5h1.5v7h-1.5zM1376 318.9h1v13.6h-1zM1377 324.5h1v8h-1zM1378 318h1v14.5h-1zM1389.9 321.4h1v11.1h-1zM1390.9 325h1.5v7.5h-1.5zM1392.4 322h1.5v10.5h-1.5zM1393.9 324.1h1v8.4h-1zM1394.9 323.1h1v9.4h-1zM1395.9 321.5h1v11h-1zM1396.9 324.9h1v7.6h-1zM1397.9 323.9h1.5v8.6h-1.5zM1399.9 318.5h1v14h-1zM1400.9 321.9h1.5v10.6h-1.5zM1402.9 322.2h1v10.3h-1zM1404.4 318.3h1.5v14.2h-1.5zM1405.9 316.1h1v16.4h-1zM1406.9 317.1h1v15.4h-1zM1407.9 320.9h1v11.6h-1zM1408.9 319.6h1v12.9h-1zM1410.4 320.2h1.5v12.3h-1.5zM1411.9 322.3h1.5v10.2h-1.5zM1413.9 320.9h1v11.6h-1zM1414.9 316.2h1.5v16.3h-1.5zM1416.4 319.8h1v12.7h-1zM1417.4 325.3h1.5v7.2h-1.5zM1418.9 324.5h1.5v8h-1.5zM1420.4 319.2h1v13.3h-1zM1421.4 322.1h1.5v10.4h-1.5zM1422.9 323.7h1.5v8.8h-1.5zM1424.4 323.9h1v8.6h-1zM1425.9 325.1h1.5v7.4h-1.5zM1427.4 320.4h1v12.1h-1zM1428.9 324.5h1v8h-1zM1429.9 316.6h1v15.9h-1zM1431.4 324.8h1v7.7h-1zM1432.9 319.2h1v13.3h-1zM1433.9 317.2h1v15.3h-1zM1434.9 319.4h1.5v13.1h-1.5zM1436.4 322.7h1v9.8h-1zM1437.4 316.9h1.5v15.6h-1.5zM1438.9 325.2h1v7.3h-1zM1439.9 317.5h1v15h-1zM1440.9 317.3h1v15.2h-1zM1441.9 323.8h1.5v8.7h-1.5zM1443.4 317.6h1v14.9h-1zM1444.4 323.1h1v9.4h-1zM1445.4 324.2h1v8.3h-1zM1446.4 324.5h1.5v8h-1.5zM1447.9 325.2h1v7.3h-1zM1448.9 319.6h1v12.9h-1zM1449.9 320.1h1.5v12.4h-1.5zM1451.9 325.1h1.5v7.4h-1.5zM1453.9 319.5h1v13h-1zM1454.9 319.6h1.5v12.9h-1.5zM1456.4 318.3h1v14.2h-1zM1457.4 323.5h1v9h-1zM1458.4 324.3h1v8.2h-1zM1459.4 322.5h1v10h-1zM1460.4 320.4h1v12.1h-1zM1461.9 324.4h1v8.1h-1zM1462.9 322h1v10.5h-1zM1464.4 321h1.5v11.5h-1.5zM1465.9 320.5h1v12h-1zM1466.9 317.4h1v15.1h-1zM1467.9 325.1h1v7.4h-1zM1468.9 323.1h1.5v9.4h-1.5zM1470.4 323.3h1v9.2h-1zM1471.4 322.4h1.5v10.1h-1.5zM1472.9 324.5h1v8h-1zM1474.4 321.1h1v11.4h-1zM1475.4 315.7h1v16.8h-1zM1476.4 323.3h1.5v9.2h-1.5zM1488.9 319.7h1.5v12.8h-1.5zM1490.4 324.4h1v8.1h-1zM1491.4 318h1v14.5h-1zM1492.4 319.4h1.5v13.1h-1.5zM1493.9 324.3h1v8.2h-1zM1494.9 324.4h1v8.1h-1zM1495.9 324.1h1.5v8.4h-1.5zM1497.4 319.2h1v13.3h-1zM1498.4 325.5h1.5v7h-1.5zM1499.9 323.3h1v9.2h-1zM1501.4 320.6h1.5v11.9h-1.5zM1502.9 323.9h1v8.6h-1zM1503.9 324.9h1.5v7.6h-1.5zM1505.9 319.2h1.5v13.3h-1.5zM1507.9 322.3h1v10.2h-1zM1508.9 323.7h1.5v8.8h-1.5zM1510.4 321.6h1.5v10.9h-1.5zM1511.9 323.8h1v8.7h-1zM1512.9 318.9h1v13.6h-1zM1513.9 325.4h1v7.1h-1zM1514.9 320.6h1v11.9h-1zM1515.9 324.7h1v7.8h-1zM1517.4 320.2h1v12.3h-1zM1518.9 319.5h1v13h-1zM1520.4 321h1v11.5h-1zM1521.4 323.3h1v9.2h-1zM1522.9 324.6h1.5v7.9h-1.5zM1524.4 322.2h1v10.3h-1zM1525.4 318.9h1v13.6h-1zM1526.4 324.1h1v8.4h-1zM1527.4 319.8h1v12.7h-1zM1528.9 324.8h1v7.7h-1zM1530.4 323.4h1.5v9.1h-1.5zM1531.9 323h1.5v9.5h-1.5zM1533.4 319.7h1.5v12.8h-1.5zM1534.9 317.7h1.5v14.8h-1.5zM1536.4 316.4h1v16.1h-1zM1537.9 317h1v15.5h-1zM1538.9 322.4h1v10.1h-1zM1540.4 324.7h1v7.8h-1zM1541.9 323.2h1v9.3h-1zM1542.9 318.8h1v13.7h-1zM1543.9 322.3h1v10.2h-1zM1544.9 316.6h1v15.9h-1zM1545.9 324.9h1v7.6h-1zM1547.4 323.8h1.5v8.7h-1.5zM1548.9 316.6h1v15.9h-1zM1549.9 317.8h1.5v14.7h-1.5zM1551.9 324h1v8.5h-1zM1552.9 321.7h1v10.8h-1zM1553.9 323.8h1v8.7h-1zM1554.9 323.5h1v9h-1zM1555.9 316.8h1v15.7h-1zM1556.9 324.3h1.5v8.2h-1.5zM1558.4 319.4h1v13.1h-1zM1559.9 323.3h1.5v9.2h-1.5zM1561.9 320.6h1.5v11.9h-1.5zM1563.4 319.5h1.5v13h-1.5zM1564.9 324.7h1v7.8h-1zM1565.9 321.4h1v11.1h-1zM1567.4 323h1v9.5h-1zM1568.4 316.4h1.5v16.1h-1.5zM1569.9 325h1v7.5h-1zM1570.9 317.5h1v15h-1zM1571.9 321.2h1v11.3h-1zM1572.9 323.8h1v8.7h-1zM1573.9 321h1v11.5h-1zM1574.9 317.4h1.5v15.1h-1.5z" fill="#45b3af" fill-opacity="0.72"/><rect x="591" y="371.5" width="896" height="1" fill="#cf8888" /><path d="M499.3 345.8h1v26.7h-1zM500.3 346h1v26.5h-1zM501.3 353.8h1v18.7h-1zM502.3 353h1v19.5h-1zM503.3 363.9h1v8.6h-1zM580.8 338.4h1v34.1h-1zM581.8 339h1v33.5h-1zM582.8 337.4h1v35.1h-1zM583.8 341.1h1v31.4h-1zM584.8 354.8h1v17.7h-1zM585.8 357.3h1v15.2h-1zM598.2 346.3h1v26.2h-1zM599.2 347.1h1v25.4h-1zM600.2 351.1h1v21.4h-1zM601.2 353.7h1v18.8h-1zM602.2 362.7h1v9.8h-1zM679.7 339h1v33.5h-1zM680.7 336.9h1v35.6h-1zM681.7 336.3h1v36.2h-1zM682.7 343.6h1v28.9h-1zM683.7 354.4h1v18.1h-1zM684.7 356.1h1v16.4h-1zM697.2 346.4h1v26.1h-1zM698.2 346.1h1v26.4h-1zM699.2 351.3h1v21.2h-1zM700.2 351.3h1v21.2h-1zM701.2 362.9h1v9.6h-1zM778.7 338.5h1v34h-1zM779.7 338.3h1v34.2h-1zM780.7 338.2h1v34.3h-1zM781.7 343.1h1v29.4h-1zM782.7 353.8h1v18.7h-1zM783.7 358h1v14.5h-1zM796.2 346.6h1v25.9h-1zM797.2 345.9h1v26.6h-1zM798.2 351.5h1v21h-1zM799.2 353.1h1v19.4h-1zM800.2 362h1v10.5h-1zM877.7 340.6h1v31.9h-1zM878.7 336.2h1v36.3h-1zM879.7 336.9h1v35.6h-1zM880.7 342.8h1v29.7h-1zM881.7 354.6h1v17.9h-1zM882.7 356.1h1v16.4h-1zM895.1 344.6h1v27.9h-1zM896.1 345.6h1v26.9h-1zM897.1 352.4h1v20.1h-1zM898.1 353.1h1v19.4h-1zM899.1 361.9h1v10.6h-1zM976.6 340.6h1v31.9h-1zM977.6 336.3h1v36.2h-1zM978.6 338.9h1v33.6h-1zM979.6 342.9h1v29.6h-1zM980.6 354.7h1v17.8h-1zM981.6 356.8h1v15.7h-1zM994.1 346.9h1v25.6h-1zM995.1 345.3h1v27.2h-1zM996.1 352h1v20.5h-1zM997.1 353.1h1v19.4h-1zM998.1 363.7h1v8.8h-1zM1075.6 338.4h1v34.1h-1zM1076.6 337.9h1v34.6h-1zM1077.6 337.3h1v35.2h-1zM1078.6 342.4h1v30.1h-1zM1079.6 353.8h1v18.7h-1zM1080.6 355.6h1v16.9h-1zM1093 345.3h1v27.2h-1zM1094 347.9h1v24.6h-1zM1095 353.3h1v19.2h-1zM1096 351.3h1v21.2h-1zM1097 361.8h1v10.7h-1zM1174.5 339.1h1v33.4h-1zM1175.5 338.6h1v33.9h-1zM1176.5 338.4h1v34.1h-1zM1177.5 341.8h1v30.7h-1zM1178.5 354.1h1v18.4h-1zM1179.5 357.1h1v15.4h-1zM1192 345.3h1v27.2h-1zM1193 347.9h1v24.6h-1zM1194 354h1v18.5h-1zM1195 353.5h1v19h-1zM1196 362.5h1v10h-1zM1273.5 339.9h1v32.6h-1zM1274.5 336.6h1v35.9h-1zM1275.5 337.8h1v34.7h-1zM1276.5 341.7h1v30.8h-1zM1277.5 355.9h1v16.6h-1zM1278.5 355.3h1v17.2h-1zM1291 347.1h1v25.4h-1zM1292 345.4h1v27.1h-1zM1293 351.5h1v21h-1zM1294 352.6h1v19.9h-1zM1295 362h1v10.5h-1zM1372.5 340.2h1v32.3h-1zM1373.5 336h1v36.5h-1zM1374.5 338.9h1v33.6h-1zM1375.5 341h1v31.5h-1zM1376.5 355.2h1v17.3h-1zM1377.5 357.3h1v15.2h-1zM1389.9 346.2h1v26.3h-1zM1390.9 346.1h1v26.4h-1zM1391.9 352h1v20.5h-1zM1392.9 352.3h1v20.2h-1zM1393.9 361.9h1v10.6h-1zM1471.4 338.1h1v34.4h-1zM1472.4 336.3h1v36.2h-1zM1473.4 336.7h1v35.8h-1zM1474.4 344h1v28.5h-1zM1475.4 355.6h1v16.9h-1zM1476.4 355.4h1v17.1h-1zM1488.9 347.2h1v25.3h-1zM1489.9 345.2h1v27.3h-1zM1490.9 352.8h1v19.7h-1zM1491.9 351.3h1v21.2h-1zM1492.9 362.6h1v9.9h-1zM1570.4 338.1h1v34.4h-1zM1571.4 338.3h1v34.2h-1zM1572.4 336.8h1v35.7h-1zM1573.4 341.3h1v31.2h-1zM1574.4 355.5h1v17h-1zM1575.4 357.7h1v14.8h-1z" fill="#d27272" fill-opacity="0.6"/><path d="M499.3 345.8h0.6v26.7h-0.6zM500.3 346h0.6v26.5h-0.6zM501.3 353.8h0.6v18.7h-0.6zM502.3 353h0.6v19.5h-0.6zM503.3 363.9h0.6v8.6h-0.6zM504.3 368.7h1v3.8h-1zM505.8 368.6h1v3.9h-1zM506.8 366.1h1v6.4h-1zM508.3 365.8h1v6.7h-1zM509.3 368.2h1.5v4.3h-1.5zM510.8 366.4h1.5v6.1h-1.5zM512.3 366.1h1v6.4h-1zM513.3 366.8h1.5v5.7h-1.5zM515.3 368.5h1v4h-1zM516.3 365.6h1v6.9h-1zM517.3 366.2h1v6.3h-1zM518.3 368.7h1v3.8h-1zM519.3 368.3h1.5v4.2h-1.5zM520.8 368.1h1v4.4h-1zM521.8 366.1h1v6.4h-1zM522.8 368h1v4.5h-1zM523.8 365.5h1v7h-1zM524.8 366.8h1v5.7h-1zM525.8 367.1h1v5.4h-1zM526.8 366.8h1v5.7h-1zM528.3 368.1h1.5v4.4h-1.5zM530.3 368.1h1v4.4h-1zM531.3 368.3h1v4.2h-1zM532.3 367.1h1.5v5.4h-1.5zM534.3 366.7h1v5.8h-1zM535.3 368.9h1.5v3.6h-1.5zM537.3 367.8h1v4.7h-1zM538.3 367.5h1.5v5h-1.5zM539.8 366.4h1.5v6.1h-1.5zM541.8 366h1v6.5h-1zM543.3 366h1v6.5h-1zM544.3 368.4h1v4.1h-1zM545.3 365.6h1v6.9h-1zM546.8 368.4h1v4.1h-1zM547.8 368.7h1v3.8h-1zM548.8 366.2h1v6.3h-1zM550.3 367.9h1v4.6h-1zM551.3 365.1h1v7.4h-1zM552.8 366.8h1v5.7h-1zM554.3 368.4h1v4.1h-1zM555.3 365h1v7.5h-1zM556.3 365.5h1.5v7h-1.5zM557.8 368.6h1v3.9h-1zM558.8 367.4h1v5.1h-1zM559.8 367.1h1.5v5.4h-1.5zM561.8 367.6h1v4.9h-1zM562.8 368.8h1v3.7h-1zM563.8 365.2h1v7.3h-1zM565.3 365.4h1v7.1h-1zM566.3 366.3h1v6.2h-1zM567.3 368.6h1.5v3.9h-1.5zM569.3 367.5h1.5v5h-1.5zM571.3 367.6h1.5v4.9h-1.5zM572.8 365.4h1v7.1h-1zM573.8 368.3h1v4.2h-1zM574.8 365.2h1v7.3h-1zM575.8 366.6h1v5.9h-1zM577.3 367.7h1v4.8h-1zM578.8 367.7h1.5v4.8h-1.5zM580.3 368.2h1v4.3h-1zM580.8 338.4h0.6v34.1h-0.6zM581.8 339h0.6v33.5h-0.6zM582.8 337.4h0.6v35.1h-0.6zM583.8 341.1h0.6v31.4h-0.6zM584.8 354.8h0.6v17.7h-0.6zM585.8 357.3h0.6v15.2h-0.6zM598.2 346.3h0.6v26.2h-0.6zM599.2 347.1h0.6v25.4h-0.6zM600.2 351.1h0.6v21.4h-0.6zM601.2 353.7h0.6v18.8h-0.6zM602.2 362.7h0.6v9.8h-0.6zM603.2 366.8h1.5v5.7h-1.5zM605.2 366.9h1.5v5.6h-1.5zM606.7 366h1v6.5h-1zM608.2 367.3h1v5.2h-1zM609.2 367.8h1.5v4.7h-1.5zM610.7 368.1h1.5v4.4h-1.5zM612.7 368.2h1v4.3h-1zM613.7 367.5h1v5h-1zM614.7 368.4h1.5v4.1h-1.5zM616.2 366.3h1v6.2h-1zM617.2 368.9h1v3.6h-1zM618.2 365.2h1v7.3h-1zM619.2 368.5h1v4h-1zM620.7 368.8h1v3.7h-1zM622.2 365.4h1.5v7.1h-1.5zM623.7 368.9h1.5v3.6h-1.5zM625.7 366h1v6.5h-1zM626.7 367.5h1v5h-1zM628.2 366.8h1.5v5.7h-1.5zM629.7 367.9h1v4.6h-1zM630.7 366h1v6.5h-1zM631.7 365.7h1.5v6.8h-1.5zM633.7 367.6h1v4.9h-1zM634.7 366.5h1v6h-1zM636.2 369h1v3.5h-1zM637.2 366.8h1v5.7h-1zM638.2 366.5h1.5v6h-1.5zM639.7 368.6h1v3.9h-1zM640.7 365.6h1v6.9h-1zM641.7 368.6h1v3.9h-1zM643.2 365.3h1.5v7.2h-1.5zM644.7 365.8h1v6.7h-1zM645.7 365.5h1v7h-1zM646.7 367.1h1.5v5.4h-1.5zM648.7 367.8h1.5v4.7h-1.5zM650.2 367h1v5.5h-1zM651.2 367.2h1v5.3h-1zM652.7 365.6h1.5v6.9h-1.5zM654.2 366.1h1v6.4h-1zM655.2 365.2h1.5v7.3h-1.5zM657.2 366h1v6.5h-1zM658.2 368.1h1.5v4.4h-1.5zM660.2 368.6h1v3.9h-1zM661.2 367.7h1v4.8h-1zM662.2 366.3h1.5v6.2h-1.5zM663.7 367h1v5.5h-1zM665.2 366.6h1v5.9h-1zM666.2 368.4h1v4.1h-1zM667.7 367.7h1v4.8h-1zM669.2 366.4h1v6.1h-1zM670.2 368.2h1v4.3h-1zM671.7 367.6h1.5v4.9h-1.5zM673.2 368.9h1.5v3.6h-1.5zM674.7 366.5h1.5v6h-1.5zM676.2 366.3h1.5v6.2h-1.5zM677.7 367.9h1.5v4.6h-1.5zM679.2 366.7h1v5.8h-1zM679.7 339h0.6v33.5h-0.6zM680.7 336.9h0.6v35.6h-0.6zM681.7 336.3h0.6v36.2h-0.6zM682.7 343.6h0.6v28.9h-0.6zM683.7 354.4h0.6v18.1h-0.6zM684.7 356.1h0.6v16.4h-0.6zM697.2 346.4h0.6v26.1h-0.6zM698.2 346.1h0.6v26.4h-0.6zM699.2 351.3h0.6v21.2h-0.6zM700.2 351.3h0.6v21.2h-0.6zM701.2 362.9h0.6v9.6h-0.6zM702.2 366.2h1v6.3h-1zM703.2 368.7h1v3.8h-1zM704.7 367.7h1v4.8h-1zM706.2 367.3h1.5v5.2h-1.5zM708.2 365.2h1v7.3h-1zM709.7 365.2h1.5v7.3h-1.5zM711.7 366.4h1v6.1h-1zM712.7 368.8h1v3.7h-1zM714.2 366.4h1.5v6.1h-1.5zM715.7 368h1v4.5h-1zM716.7 367.2h1.5v5.3h-1.5zM718.2 366.4h1.5v6.1h-1.5zM720.2 365.8h1.5v6.7h-1.5zM721.7 366.3h1.5v6.2h-1.5zM723.2 365.4h1.5v7.1h-1.5zM725.2 366.1h1v6.4h-1zM726.7 366.1h1v6.4h-1zM727.7 368.5h1v4h-1zM729.2 367.5h1.5v5h-1.5zM730.7 365.5h1v7h-1zM732.2 365.9h1.5v6.6h-1.5zM733.7 367.8h1v4.7h-1zM734.7 366.9h1v5.6h-1zM736.2 366.4h1v6.1h-1zM737.2 367.3h1v5.2h-1zM738.2 365.5h1v7h-1zM739.2 366.8h1v5.7h-1zM740.7 368.2h1v4.3h-1zM741.7 367.9h1v4.6h-1zM742.7 367.5h1v5h-1zM744.2 368.7h1v3.8h-1zM745.7 367.9h1v4.6h-1zM747.2 365.8h1.5v6.7h-1.5zM749.2 368.9h1.5v3.6h-1.5zM750.7 365.2h1v7.3h-1zM751.7 367.3h1.5v5.2h-1.5zM753.2 365.8h1v6.7h-1zM754.7 366.7h1.5v5.8h-1.5zM756.7 366.7h1.5v5.8h-1.5zM758.2 365h1v7.5h-1zM759.2 368.2h1v4.3h-1zM760.2 367.3h1v5.2h-1zM761.2 365.7h1v6.8h-1zM762.2 367.3h1v5.2h-1zM763.2 365.4h1v7.1h-1zM764.7 365.4h1.5v7.1h-1.5zM766.7 366.1h1v6.4h-1zM767.7 367.5h1v5h-1zM768.7 367.7h1v4.8h-1zM770.2 367h1v5.5h-1zM771.2 365.4h1v7.1h-1zM772.7 367h1v5.5h-1zM773.7 367.2h1v5.3h-1zM774.7 368.4h1v4.1h-1zM775.7 366.6h1v5.9h-1zM776.7 366.2h1.5v6.3h-1.5zM778.2 367.7h1v4.8h-1zM778.7 338.5h0.6v34h-0.6zM779.7 338.3h0.6v34.2h-0.6zM780.7 338.2h0.6v34.3h-0.6zM781.7 343.1h0.6v29.4h-0.6zM782.7 353.8h0.6v18.7h-0.6zM783.7 358h0.6v14.5h-0.6zM796.2 346.6h0.6v25.9h-0.6zM797.2 345.9h0.6v26.6h-0.6zM798.2 351.5h0.6v21h-0.6zM799.2 353.1h0.6v19.4h-0.6zM800.2 362h0.6v10.5h-0.6zM801.2 368.8h1v3.7h-1zM802.2 365.2h1v7.3h-1zM803.7 368h1v4.5h-1zM805.2 365.5h1.5v7h-1.5zM807.2 367.8h1v4.7h-1zM808.2 365.7h1v6.8h-1zM809.2 367.7h1v4.8h-1zM810.2 368.1h1v4.4h-1zM811.2 368.7h1.5v3.8h-1.5zM813.2 367h1.5v5.5h-1.5zM814.7 367.1h1v5.4h-1zM816.2 366.1h1.5v6.4h-1.5zM817.7 366.9h1v5.6h-1zM818.7 368.8h1v3.7h-1zM819.7 368.5h1.5v4h-1.5zM821.7 367.1h1.5v5.4h-1.5zM823.2 366.3h1.5v6.2h-1.5zM824.7 365.7h1.5v6.8h-1.5zM826.7 368.1h1v4.4h-1zM828.2 365.7h1v6.8h-1zM829.2 368.2h1.5v4.3h-1.5zM831.2 366.5h1v6h-1zM832.2 366.4h1.5v6.1h-1.5zM833.7 369h1.5v3.5h-1.5zM835.2 367h1.5v5.5h-1.5zM837.2 368.9h1.5v3.6h-1.5zM838.7 365.5h1.5v7h-1.5zM840.2 368.6h1v3.9h-1zM841.2 368.1h1v4.4h-1zM842.7 368.6h1v3.9h-1zM844.2 366h1.5v6.5h-1.5zM845.7 367.3h1v5.2h-1zM846.7 369h1v3.5h-1zM848.2 368.8h1.5v3.7h-1.5zM850.2 368.9h1v3.6h-1zM851.2 368.4h1v4.1h-1zM852.2 368.2h1v4.3h-1zM853.7 367.9h1v4.6h-1zM854.7 365h1.5v7.5h-1.5zM856.7 367.3h1v5.2h-1zM857.7 367.7h1v4.8h-1zM858.7 365.7h1v6.8h-1zM860.2 365.2h1.5v7.3h-1.5zM861.7 367.1h1v5.4h-1zM862.7 366.1h1v6.4h-1zM863.7 365.5h1v7h-1zM864.7 368.9h1.5v3.6h-1.5zM866.2 368.9h1.5v3.6h-1.5zM867.7 366.1h1v6.4h-1zM869.2 366.5h1.5v6h-1.5zM871.2 367.1h1v5.4h-1zM872.2 367.6h1v4.9h-1zM873.2 365.2h1v7.3h-1zM874.2 368.4h1v4.1h-1zM875.2 367.7h1v4.8h-1zM876.2 366.1h1v6.4h-1zM877.2 367.8h1v4.7h-1zM877.7 340.6h0.6v31.9h-0.6zM878.7 336.2h0.6v36.3h-0.6zM879.7 336.9h0.6v35.6h-0.6zM880.7 342.8h0.6v29.7h-0.6zM881.7 354.6h0.6v17.9h-0.6zM882.7 356.1h0.6v16.4h-0.6zM895.1 344.6h0.6v27.9h-0.6zM896.1 345.6h0.6v26.9h-0.6zM897.1 352.4h0.6v20.1h-0.6zM898.1 353.1h0.6v19.4h-0.6zM899.1 361.9h0.6v10.6h-0.6zM900.1 366.4h1v6.1h-1zM901.6 366.6h1v5.9h-1zM903.1 365.4h1v7.1h-1zM904.6 368.4h1v4.1h-1zM905.6 368.9h1v3.6h-1zM907.1 368.6h1v3.9h-1zM908.1 366.8h1v5.7h-1zM909.1 367.5h1.5v5h-1.5zM910.6 367.3h1v5.2h-1zM911.6 366.2h1v6.3h-1zM913.1 368h1v4.5h-1zM914.6 366.5h1v6h-1zM915.6 365.2h1v7.3h-1zM916.6 365h1v7.5h-1zM917.6 365.2h1.5v7.3h-1.5zM919.1 366.6h1v5.9h-1zM920.1 365.2h1v7.3h-1zM921.1 367.8h1.5v4.7h-1.5zM922.6 368.4h1v4.1h-1zM923.6 368.3h1v4.2h-1zM925.1 365.1h1v7.4h-1zM926.6 367.1h1v5.4h-1zM927.6 367.3h1.5v5.2h-1.5zM929.1 368.2h1v4.3h-1zM930.1 368.8h1v3.7h-1zM931.6 367h1v5.5h-1zM932.6 366.3h1v6.2h-1zM933.6 367.7h1.5v4.8h-1.5zM935.6 365.1h1.5v7.4h-1.5zM937.1 365.5h1.5v7h-1.5zM939.1 366.7h1v5.8h-1zM940.1 366.7h1v5.8h-1zM941.1 368.4h1.5v4.1h-1.5zM942.6 368.2h1v4.3h-1zM943.6 367.9h1v4.6h-1zM944.6 365.2h1.5v7.3h-1.5zM946.1 368h1v4.5h-1zM947.1 368.6h1v3.9h-1zM948.1 366.5h1v6h-1zM949.6 365.9h1.5v6.6h-1.5zM951.6 367.6h1v4.9h-1zM952.6 365.5h1v7h-1zM953.6 367.6h1v4.9h-1zM955.1 368.5h1v4h-1zM956.6 368.2h1v4.3h-1zM957.6 366.1h1.5v6.4h-1.5zM959.6 367.5h1v5h-1zM960.6 368.1h1v4.4h-1zM962.1 365.3h1v7.2h-1zM963.1 368.3h1v4.2h-1zM964.1 366.6h1v5.9h-1zM965.1 366.7h1v5.8h-1zM966.1 366.5h1.5v6h-1.5zM968.1 368.3h1v4.2h-1zM969.6 365.5h1.5v7h-1.5zM971.6 366.3h1v6.2h-1zM973.1 368.4h1v4.1h-1zM974.1 367.7h1v4.8h-1zM975.1 365.4h1v7.1h-1zM976.6 340.6h0.6v31.9h-0.6zM977.6 336.3h0.6v36.2h-0.6zM978.6 338.9h0.6v33.6h-0.6zM979.6 342.9h0.6v29.6h-0.6zM980.6 354.7h0.6v17.8h-0.6zM981.6 356.8h0.6v15.7h-0.6zM994.1 346.9h0.6v25.6h-0.6zM995.1 345.3h0.6v27.2h-0.6zM996.1 352h0.6v20.5h-0.6zM997.1 353.1h0.6v19.4h-0.6zM998.1 363.7h0.6v8.8h-0.6zM999.1 366.1h1v6.4h-1zM1000.1 366.7h1.5v5.8h-1.5zM1001.6 366.6h1.5v5.9h-1.5zM1003.6 366h1.5v6.5h-1.5zM1005.1 366.5h1v6h-1zM1006.1 368.7h1.5v3.8h-1.5zM1007.6 368.9h1.5v3.6h-1.5zM1009.1 365.8h1v6.7h-1zM1010.1 366.3h1.5v6.2h-1.5zM1011.6 365.1h1v7.4h-1zM1013.1 367.5h1v5h-1zM1014.1 368.8h1v3.7h-1zM1015.1 366.8h1v5.7h-1zM1016.1 367h1v5.5h-1zM1017.1 366.4h1v6.1h-1zM1018.1 368.1h1v4.4h-1zM1019.1 367.9h1v4.6h-1zM1020.6 366.7h1v5.8h-1zM1021.6 365.4h1v7.1h-1zM1022.6 367.9h1v4.6h-1zM1023.6 366.7h1v5.8h-1zM1025.1 365.7h1v6.8h-1zM1026.6 368.8h1v3.7h-1zM1027.6 368.7h1.5v3.8h-1.5zM1029.1 366.5h1.5v6h-1.5zM1031.1 368.2h1v4.3h-1zM1032.6 365.2h1.5v7.3h-1.5zM1034.1 368h1v4.5h-1zM1035.6 366.5h1v6h-1zM1036.6 365.8h1.5v6.7h-1.5zM1038.1 365.7h1.5v6.8h-1.5zM1040.1 365.4h1v7.1h-1zM1041.1 366.3h1.5v6.2h-1.5zM1042.6 367.9h1.5v4.6h-1.5zM1044.6 365.5h1v7h-1zM1045.6 367.1h1v5.4h-1zM1047.1 367.5h1v5h-1zM1048.1 365.9h1v6.6h-1zM1049.6 367.9h1v4.6h-1zM1050.6 365.8h1v6.7h-1zM1051.6 368h1.5v4.5h-1.5zM1053.6 365.6h1.5v6.9h-1.5zM1055.1 368.9h1v3.6h-1zM1056.6 366.5h1v6h-1zM1057.6 365h1.5v7.5h-1.5zM1059.1 366.6h1v5.9h-1zM1060.6 369h1v3.5h-1zM1061.6 368.2h1v4.3h-1zM1063.1 366.1h1.5v6.4h-1.5zM1064.6 366.7h1.5v5.8h-1.5zM1066.1 368.5h1.5v4h-1.5zM1067.6 366.3h1v6.2h-1zM1068.6 365.2h1v7.3h-1zM1069.6 366.8h1v5.7h-1zM1071.1 367.5h1v5h-1zM1072.6 366h1v6.5h-1zM1073.6 366.8h1.5v5.7h-1.5zM1075.1 365.1h1v7.4h-1zM1075.6 338.4h0.6v34.1h-0.6zM1076.6 337.9h0.6v34.6h-0.6zM1077.6 337.3h0.6v35.2h-0.6zM1078.6 342.4h0.6v30.1h-0.6zM1079.6 353.8h0.6v18.7h-0.6zM1080.6 355.6h0.6v16.9h-0.6zM1093 345.3h0.6v27.2h-0.6zM1094 347.9h0.6v24.6h-0.6zM1095 353.3h0.6v19.2h-0.6zM1096 351.3h0.6v21.2h-0.6zM1097 361.8h0.6v10.7h-0.6zM1098 365h1v7.5h-1zM1099 366.5h1v6h-1zM1100.5 367.3h1v5.2h-1zM1102 367.7h1v4.8h-1zM1103 365.1h1v7.4h-1zM1104 368.9h1v3.6h-1zM1105 368.8h1v3.7h-1zM1106.5 367.1h1v5.4h-1zM1107.5 367.4h1v5.1h-1zM1108.5 368.9h1v3.6h-1zM1110 368.8h1.5v3.7h-1.5zM1111.5 367.4h1v5.1h-1zM1112.5 367.8h1v4.7h-1zM1113.5 365.6h1.5v6.9h-1.5zM1115.5 366.7h1v5.8h-1zM1117 368.8h1v3.7h-1zM1118 366.6h1.5v5.9h-1.5zM1119.5 367.8h1v4.7h-1zM1120.5 366.2h1v6.3h-1zM1122 367.9h1v4.6h-1zM1123.5 367.8h1v4.7h-1zM1124.5 368.5h1v4h-1zM1126 366.1h1v6.4h-1zM1127 368h1.5v4.5h-1.5zM1128.5 366h1v6.5h-1zM1129.5 365.5h1v7h-1zM1130.5 367.1h1.5v5.4h-1.5zM1132 367.3h1.5v5.2h-1.5zM1133.5 365.3h1v7.2h-1zM1134.5 368.3h1.5v4.2h-1.5zM1136 366.1h1v6.4h-1zM1137 367.8h1v4.7h-1zM1138 367.7h1v4.8h-1zM1139 367.8h1v4.7h-1zM1140 368h1.5v4.5h-1.5zM1141.5 365.1h1v7.4h-1zM1142.5 368.6h1v3.9h-1zM1143.5 366.3h1v6.2h-1zM1144.5 368.8h1v3.7h-1zM1145.5 366.2h1.5v6.3h-1.5zM1147.5 367.3h1v5.2h-1zM1148.5 367.3h1v5.2h-1zM1149.5 367.9h1v4.6h-1zM1151 366.6h1v5.9h-1zM1152.5 368.8h1v3.7h-1zM1153.5 368.7h1.5v3.8h-1.5zM1155 368.1h1v4.4h-1zM1156.5 366.6h1.5v5.9h-1.5zM1158 366.5h1v6h-1zM1159 366.5h1v6h-1zM1160 366.8h1.5v5.7h-1.5zM1161.5 366.7h1v5.8h-1zM1162.5 366h1v6.5h-1zM1163.5 366.8h1v5.7h-1zM1165 365.5h1v7h-1zM1166 368.2h1v4.3h-1zM1167 367.3h1.5v5.2h-1.5zM1169 367h1v5.5h-1zM1170 365.2h1v7.3h-1zM1171 369h1v3.5h-1zM1172.5 365.6h1v6.9h-1zM1173.5 368.3h1.5v4.2h-1.5zM1174.5 339.1h0.6v33.4h-0.6zM1175.5 338.6h0.6v33.9h-0.6zM1176.5 338.4h0.6v34.1h-0.6zM1177.5 341.8h0.6v30.7h-0.6zM1178.5 354.1h0.6v18.4h-0.6zM1179.5 357.1h0.6v15.4h-0.6zM1192 345.3h0.6v27.2h-0.6zM1193 347.9h0.6v24.6h-0.6zM1194 354h0.6v18.5h-0.6zM1195 353.5h0.6v19h-0.6zM1196 362.5h0.6v10h-0.6zM1197 368.7h1v3.8h-1zM1198 365.2h1v7.3h-1zM1199 367.7h1.5v4.8h-1.5zM1200.5 366.8h1v5.7h-1zM1201.5 368.6h1.5v3.9h-1.5zM1203 368.3h1.5v4.2h-1.5zM1204.5 367.4h1v5.1h-1zM1205.5 368.8h1v3.7h-1zM1206.5 369h1.5v3.5h-1.5zM1208.5 365.5h1.5v7h-1.5zM1210 366.6h1v5.9h-1zM1211 365h1v7.5h-1zM1212.5 368.8h1v3.7h-1zM1214 368.2h1v4.3h-1zM1215 368.5h1.5v4h-1.5zM1217 368.6h1v3.9h-1zM1218 368.2h1v4.3h-1zM1219 367.1h1v5.4h-1zM1220 367h1.5v5.5h-1.5zM1222 366.5h1v6h-1zM1223 367.8h1.5v4.7h-1.5zM1224.5 365.9h1v6.6h-1zM1226 366.2h1v6.3h-1zM1227 367.7h1v4.8h-1zM1228.5 369h1v3.5h-1zM1230 368.1h1v4.4h-1zM1231.5 367.1h1.5v5.4h-1.5zM1233.5 367.7h1v4.8h-1zM1235 365.9h1v6.6h-1zM1236 368.3h1v4.2h-1zM1237 366.5h1.5v6h-1.5zM1238.5 367.4h1v5.1h-1zM1239.5 367.7h1v4.8h-1zM1240.5 367.3h1.5v5.2h-1.5zM1242.5 368.6h1.5v3.9h-1.5zM1244.5 365.5h1v7h-1zM1245.5 366h1v6.5h-1zM1246.5 366.5h1.5v6h-1.5zM1248.5 365.3h1v7.2h-1zM1250 367.8h1.5v4.7h-1.5zM1251.5 367h1v5.5h-1zM1253 365.5h1.5v7h-1.5zM1254.5 368.6h1.5v3.9h-1.5zM1256 365.1h1v7.4h-1zM1257.5 365.4h1.5v7.1h-1.5zM1259 368.7h1v3.8h-1zM1260 367.4h1.5v5.1h-1.5zM1261.5 367.5h1.5v5h-1.5zM1263 368.7h1v3.8h-1zM1264 365.7h1v6.8h-1zM1265.5 368.7h1.5v3.8h-1.5zM1267 367.4h1.5v5.1h-1.5zM1268.5 367.9h1v4.6h-1zM1270 368.4h1.5v4.1h-1.5zM1271.5 368.7h1.5v3.8h-1.5zM1273 366h1.5v6.5h-1.5zM1273.5 339.9h0.6v32.6h-0.6zM1274.5 336.6h0.6v35.9h-0.6zM1275.5 337.8h0.6v34.7h-0.6zM1276.5 341.7h0.6v30.8h-0.6zM1277.5 355.9h0.6v16.6h-0.6zM1278.5 355.3h0.6v17.2h-0.6zM1291 347.1h0.6v25.4h-0.6zM1292 345.4h0.6v27.1h-0.6zM1293 351.5h0.6v21h-0.6zM1294 352.6h0.6v19.9h-0.6zM1295 362h0.6v10.5h-0.6zM1296 367.2h1v5.3h-1zM1297 366.9h1v5.6h-1zM1298 365.1h1v7.4h-1zM1299 368.5h1.5v4h-1.5zM1300.5 367.6h1v4.9h-1zM1302 366.1h1v6.4h-1zM1303 367.1h1.5v5.4h-1.5zM1304.5 366.2h1v6.3h-1zM1305.5 365.5h1v7h-1zM1307 368.6h1v3.9h-1zM1308 365h1v7.5h-1zM1309 365.3h1v7.2h-1zM1310 367.7h1.5v4.8h-1.5zM1312 368.1h1.5v4.4h-1.5zM1313.5 366.6h1v5.9h-1zM1315 367.6h1v4.9h-1zM1316 369h1v3.5h-1zM1317.5 366.9h1v5.6h-1zM1318.5 368.5h1v4h-1zM1319.5 365h1v7.5h-1zM1320.5 366.2h1v6.3h-1zM1321.5 366h1v6.5h-1zM1323 366.1h1.5v6.4h-1.5zM1325 367.1h1.5v5.4h-1.5zM1326.5 367.7h1.5v4.8h-1.5zM1328 365.4h1.5v7.1h-1.5zM1329.5 366h1v6.5h-1zM1331 365.3h1.5v7.2h-1.5zM1332.5 365.2h1v7.3h-1zM1334 365.1h1.5v7.4h-1.5zM1335.5 368.1h1v4.4h-1zM1337 368h1v4.5h-1zM1338.5 366.1h1v6.4h-1zM1339.5 367h1.5v5.5h-1.5zM1341 367.2h1v5.3h-1zM1342 366h1v6.5h-1zM1343 366.4h1v6.1h-1zM1344 368.9h1v3.6h-1zM1345.5 367.9h1v4.6h-1zM1346.5 366.9h1v5.6h-1zM1347.5 365.9h1.5v6.6h-1.5zM1349.5 365.6h1v6.9h-1zM1350.5 365.9h1.5v6.6h-1.5zM1352 365.9h1.5v6.6h-1.5zM1353.5 368h1v4.5h-1zM1354.5 367.4h1.5v5.1h-1.5zM1356 366.6h1.5v5.9h-1.5zM1358 368.9h1.5v3.6h-1.5zM1359.5 367h1.5v5.5h-1.5zM1361 367.8h1.5v4.7h-1.5zM1362.5 367.6h1v4.9h-1zM1363.5 368.8h1v3.7h-1zM1365 366.8h1v5.7h-1zM1366.5 366.9h1v5.6h-1zM1368 368.8h1v3.7h-1zM1369 367.6h1v4.9h-1zM1370 366.3h1v6.2h-1zM1371 367.2h1v5.3h-1zM1372.5 340.2h0.6v32.3h-0.6zM1373.5 336h0.6v36.5h-0.6zM1374.5 338.9h0.6v33.6h-0.6zM1375.5 341h0.6v31.5h-0.6zM1376.5 355.2h0.6v17.3h-0.6zM1377.5 357.3h0.6v15.2h-0.6zM1389.9 346.2h0.6v26.3h-0.6zM1390.9 346.1h0.6v26.4h-0.6zM1391.9 352h0.6v20.5h-0.6zM1392.9 352.3h0.6v20.2h-0.6zM1393.9 361.9h0.6v10.6h-0.6zM1394.9 368.9h1v3.6h-1zM1396.4 365.4h1v7.1h-1zM1397.9 367h1v5.5h-1zM1399.4 367.3h1v5.2h-1zM1400.9 366.1h1v6.4h-1zM1401.9 365.3h1v7.2h-1zM1403.4 368.8h1.5v3.7h-1.5zM1404.9 367.6h1.5v4.9h-1.5zM1406.9 366.7h1.5v5.8h-1.5zM1408.4 368.5h1v4h-1zM1409.9 366.3h1.5v6.2h-1.5zM1411.4 365.5h1v7h-1zM1412.9 366.3h1.5v6.2h-1.5zM1414.4 368.9h1.5v3.6h-1.5zM1416.4 365.5h1v7h-1zM1417.9 365.7h1.5v6.8h-1.5zM1419.9 365.8h1v6.7h-1zM1420.9 366.7h1.5v5.8h-1.5zM1422.4 368.9h1.5v3.6h-1.5zM1423.9 369h1v3.5h-1zM1424.9 367.4h1.5v5.1h-1.5zM1426.4 366.6h1v5.9h-1zM1427.9 365.5h1v7h-1zM1428.9 367h1v5.5h-1zM1429.9 368h1v4.5h-1zM1431.4 367.7h1v4.8h-1zM1432.9 367h1v5.5h-1zM1433.9 366.8h1v5.7h-1zM1435.4 367.2h1.5v5.3h-1.5zM1437.4 368.9h1v3.6h-1zM1438.4 365.1h1.5v7.4h-1.5zM1439.9 365.1h1.5v7.4h-1.5zM1441.9 365.1h1v7.4h-1zM1442.9 369h1v3.5h-1zM1443.9 366.9h1v5.6h-1zM1444.9 365.9h1v6.6h-1zM1445.9 365.2h1v7.3h-1zM1446.9 368.2h1v4.3h-1zM1447.9 367.6h1v4.9h-1zM1448.9 367.9h1v4.6h-1zM1449.9 366.4h1.5v6.1h-1.5zM1451.4 365.5h1.5v7h-1.5zM1452.9 366.6h1v5.9h-1zM1453.9 366.7h1v5.8h-1zM1454.9 366.2h1.5v6.3h-1.5zM1456.4 365h1v7.5h-1zM1457.4 365.1h1v7.4h-1zM1458.9 365.1h1v7.4h-1zM1460.4 366.8h1v5.7h-1zM1461.4 367.6h1.5v4.9h-1.5zM1462.9 368.4h1v4.1h-1zM1463.9 368.7h1v3.8h-1zM1465.4 366h1v6.5h-1zM1466.9 367h1.5v5.5h-1.5zM1468.4 365.5h1v7h-1zM1469.9 367.5h1v5h-1zM1471.4 338.1h0.6v34.4h-0.6zM1472.4 336.3h0.6v36.2h-0.6zM1473.4 336.7h0.6v35.8h-0.6zM1474.4 344h0.6v28.5h-0.6zM1475.4 355.6h0.6v16.9h-0.6zM1476.4 355.4h0.6v17.1h-0.6zM1488.9 347.2h0.6v25.3h-0.6zM1489.9 345.2h0.6v27.3h-0.6zM1490.9 352.8h0.6v19.7h-0.6zM1491.9 351.3h0.6v21.2h-0.6zM1492.9 362.6h0.6v9.9h-0.6zM1493.9 365.8h1.5v6.7h-1.5zM1495.4 367.9h1v4.6h-1zM1496.9 366.3h1v6.2h-1zM1498.4 365.3h1v7.2h-1zM1499.9 367.1h1v5.4h-1zM1501.4 365.3h1v7.2h-1zM1502.4 365.3h1v7.2h-1zM1503.9 365.9h1.5v6.6h-1.5zM1505.4 367.2h1v5.3h-1zM1506.9 368h1v4.5h-1zM1507.9 368.9h1v3.6h-1zM1508.9 365h1v7.5h-1zM1510.4 365.9h1v6.6h-1zM1511.4 367.1h1.5v5.4h-1.5zM1512.9 365.9h1.5v6.6h-1.5zM1514.9 366h1.5v6.5h-1.5zM1516.4 365.3h1v7.2h-1zM1517.4 368.7h1v3.8h-1zM1518.4 368.6h1v3.9h-1zM1519.9 366.6h1.5v5.9h-1.5zM1521.9 365.1h1.5v7.4h-1.5zM1523.4 368h1.5v4.5h-1.5zM1525.4 367.5h1.5v5h-1.5zM1526.9 365.3h1v7.2h-1zM1527.9 367.4h1v5.1h-1zM1529.4 366.9h1v5.6h-1zM1530.4 368.8h1v3.7h-1zM1531.4 368.6h1v3.9h-1zM1532.4 366h1.5v6.5h-1.5zM1533.9 366.3h1v6.2h-1zM1535.4 367.6h1.5v4.9h-1.5zM1536.9 365.2h1.5v7.3h-1.5zM1538.4 367.6h1v4.9h-1zM1539.9 367.2h1v5.3h-1zM1540.9 368.4h1v4.1h-1zM1541.9 365.7h1v6.8h-1zM1542.9 366.9h1v5.6h-1zM1543.9 365.7h1.5v6.8h-1.5zM1545.4 365.3h1v7.2h-1zM1546.4 365.2h1v7.3h-1zM1547.4 366.8h1.5v5.7h-1.5zM1548.9 366.5h1v6h-1zM1550.4 367.8h1v4.7h-1zM1551.4 367.6h1v4.9h-1zM1552.9 367.3h1v5.2h-1zM1553.9 366.2h1.5v6.3h-1.5zM1555.4 366.6h1.5v5.9h-1.5zM1556.9 368.9h1.5v3.6h-1.5zM1558.4 365.7h1.5v6.8h-1.5zM1559.9 366.4h1v6.1h-1zM1561.4 367.5h1.5v5h-1.5zM1562.9 368h1v4.5h-1zM1563.9 368.1h1.5v4.4h-1.5zM1565.4 367.3h1v5.2h-1zM1566.4 365.9h1v6.6h-1zM1567.4 367.6h1.5v4.9h-1.5zM1569.4 367.7h1v4.8h-1zM1570.4 338.1h0.6v34.4h-0.6zM1571.4 338.3h0.6v34.2h-0.6zM1572.4 336.8h0.6v35.7h-0.6zM1573.4 341.3h0.6v31.2h-0.6zM1574.4 355.5h0.6v17h-0.6zM1575.4 357.7h0.6v14.8h-0.6z" fill="#c04444" fill-opacity="0.72"/><rect x="591" y="411.5" width="896" height="1" fill="#cf8888" /><path d="M499.3 384.1h1v28.4h-1zM500.3 386.1h1v26.4h-1zM501.3 403.3h1v9.2h-1zM502.3 403.3h1v9.2h-1zM581.8 383.6h1v28.9h-1zM582.8 382h1v30.5h-1zM583.8 403.1h1v9.4h-1zM584.8 404.7h1v7.8h-1zM585.8 404.1h1v8.4h-1zM598.2 385.6h1v26.9h-1zM599.2 387.9h1v24.6h-1zM600.2 403.9h1v8.6h-1zM601.2 404.6h1v7.9h-1zM680.7 382.8h1v29.7h-1zM681.7 383.2h1v29.3h-1zM682.7 405.6h1v6.9h-1zM683.7 403.6h1v8.9h-1zM684.7 405.9h1v6.6h-1zM697.2 384h1v28.5h-1zM698.2 388.3h1v24.2h-1zM699.2 404.9h1v7.6h-1zM700.2 403.3h1v9.2h-1zM779.7 382.5h1v30h-1zM780.7 384.7h1v27.8h-1zM781.7 405.2h1v7.3h-1zM782.7 402.2h1v10.3h-1zM783.7 405.5h1v7h-1zM796.2 384.5h1v28h-1zM797.2 387.9h1v24.6h-1zM798.2 403.6h1v8.9h-1zM799.2 404.6h1v7.9h-1zM878.7 383.9h1v28.6h-1zM879.7 382.5h1v30h-1zM880.7 404.8h1v7.7h-1zM881.7 403h1v9.5h-1zM882.7 405.7h1v6.8h-1zM895.1 385.9h1v26.6h-1zM896.1 389h1v23.5h-1zM897.1 404.2h1v8.3h-1zM898.1 405.6h1v6.9h-1zM977.6 381.5h1v31h-1zM978.6 383.8h1v28.7h-1zM979.6 404h1v8.5h-1zM980.6 403.6h1v8.9h-1zM981.6 406.9h1v5.6h-1zM994.1 384.5h1v28h-1zM995.1 388.7h1v23.8h-1zM996.1 404.7h1v7.8h-1zM997.1 403.6h1v8.9h-1zM1076.6 381.2h1v31.3h-1zM1077.6 383.6h1v28.9h-1zM1078.6 405.5h1v7h-1zM1079.6 403.6h1v8.9h-1zM1080.6 406.7h1v5.8h-1zM1093 384.9h1v27.6h-1zM1094 386.6h1v25.9h-1zM1095 403h1v9.5h-1zM1096 404.4h1v8.1h-1zM1175.5 382.1h1v30.4h-1zM1176.5 384.3h1v28.2h-1zM1177.5 405.8h1v6.7h-1zM1178.5 402.8h1v9.7h-1zM1179.5 404.1h1v8.4h-1zM1192 386h1v26.5h-1zM1193 387.7h1v24.8h-1zM1194 404.8h1v7.7h-1zM1195 404.3h1v8.2h-1zM1274.5 382.4h1v30.1h-1zM1275.5 384.5h1v28h-1zM1276.5 405h1v7.5h-1zM1277.5 405h1v7.5h-1zM1278.5 404.6h1v7.9h-1zM1291 385.3h1v27.2h-1zM1292 387.6h1v24.9h-1zM1293 402.4h1v10.1h-1zM1294 405.7h1v6.8h-1zM1373.5 381.1h1v31.4h-1zM1374.5 383.4h1v29.1h-1zM1375.5 403h1v9.5h-1zM1376.5 403.2h1v9.3h-1zM1377.5 404.5h1v8h-1zM1389.9 384.4h1v28.1h-1zM1390.9 386.9h1v25.6h-1zM1391.9 402.7h1v9.8h-1zM1392.9 404.7h1v7.8h-1zM1472.4 383.7h1v28.8h-1zM1473.4 384.9h1v27.6h-1zM1474.4 405.1h1v7.4h-1zM1475.4 402.1h1v10.4h-1zM1476.4 406.9h1v5.6h-1zM1488.9 386.1h1v26.4h-1zM1489.9 387.7h1v24.8h-1zM1490.9 402.1h1v10.4h-1zM1491.9 403.6h1v8.9h-1zM1571.4 382.1h1v30.4h-1zM1572.4 382.7h1v29.8h-1zM1573.4 405.8h1v6.7h-1zM1574.4 404.3h1v8.2h-1zM1575.4 404.5h1v8h-1z" fill="#d27272" fill-opacity="0.6"/><path d="M499.3 384.1h0.6v28.4h-0.6zM500.3 386.1h0.6v26.4h-0.6zM501.3 403.3h0.6v9.2h-0.6zM502.3 403.3h0.6v9.2h-0.6zM503.3 406.8h1v5.7h-1zM504.3 408.3h1v4.2h-1zM505.8 405.9h1.5v6.6h-1.5zM507.3 406.8h1v5.7h-1zM508.3 405.8h1v6.7h-1zM509.8 405.2h1.5v7.3h-1.5zM511.3 408.6h1v3.9h-1zM512.3 405.7h1v6.8h-1zM513.3 407.3h1v5.2h-1zM514.3 405.7h1.5v6.8h-1.5zM515.8 408.1h1v4.4h-1zM516.8 408.3h1v4.2h-1zM518.3 407h1.5v5.5h-1.5zM519.8 405h1.5v7.5h-1.5zM521.3 406.5h1v6h-1zM522.8 407.8h1v4.7h-1zM524.3 406.1h1.5v6.4h-1.5zM526.3 407.2h1v5.3h-1zM527.3 406.7h1.5v5.8h-1.5zM528.8 407.2h1v5.3h-1zM529.8 405.1h1v7.4h-1zM531.3 406.5h1v6h-1zM532.3 407.2h1v5.3h-1zM533.3 408.2h1v4.3h-1zM534.3 408.8h1v3.7h-1zM535.8 408.2h1.5v4.3h-1.5zM537.3 405.9h1v6.6h-1zM538.8 408.9h1.5v3.6h-1.5zM540.3 406.7h1.5v5.8h-1.5zM541.8 408.9h1.5v3.6h-1.5zM543.8 407.7h1.5v4.8h-1.5zM545.3 406.2h1.5v6.3h-1.5zM546.8 405.9h1v6.6h-1zM547.8 408.7h1.5v3.8h-1.5zM549.3 405.9h1v6.6h-1zM550.8 407.8h1v4.7h-1zM551.8 407.1h1v5.4h-1zM552.8 407.7h1.5v4.8h-1.5zM554.8 407.4h1.5v5.1h-1.5zM556.3 405.6h1v6.9h-1zM557.8 405.6h1v6.9h-1zM558.8 407.4h1v5.1h-1zM559.8 406h1.5v6.5h-1.5zM561.8 406.3h1v6.2h-1zM562.8 405h1.5v7.5h-1.5zM564.3 405.4h1.5v7.1h-1.5zM566.3 406.7h1v5.8h-1zM567.3 408.4h1.5v4.1h-1.5zM569.3 406.5h1.5v6h-1.5zM570.8 407.7h1v4.8h-1zM571.8 405.2h1v7.3h-1zM572.8 408.4h1.5v4.1h-1.5zM574.3 406.5h1.5v6h-1.5zM576.3 408.9h1.5v3.6h-1.5zM577.8 405.5h1v7h-1zM579.3 407.4h1.5v5.1h-1.5zM580.8 408.6h1v3.9h-1zM581.8 383.6h0.6v28.9h-0.6zM582.8 382h0.6v30.5h-0.6zM583.8 403.1h0.6v9.4h-0.6zM584.8 404.7h0.6v7.8h-0.6zM585.8 404.1h0.6v8.4h-0.6zM598.2 385.6h0.6v26.9h-0.6zM599.2 387.9h0.6v24.6h-0.6zM600.2 403.9h0.6v8.6h-0.6zM601.2 404.6h0.6v7.9h-0.6zM602.2 405.8h1v6.7h-1zM603.7 408.9h1.5v3.6h-1.5zM605.2 408.7h1v3.8h-1zM606.7 408.5h1.5v4h-1.5zM608.7 407.6h1v4.9h-1zM609.7 407.5h1v5h-1zM611.2 406.7h1v5.8h-1zM612.2 406.9h1v5.6h-1zM613.7 406.4h1.5v6.1h-1.5zM615.2 407.5h1v5h-1zM616.7 405.5h1v7h-1zM617.7 405.4h1v7.1h-1zM618.7 407.1h1v5.4h-1zM619.7 408.2h1v4.3h-1zM620.7 406.9h1v5.6h-1zM621.7 408.6h1v3.9h-1zM623.2 407.2h1v5.3h-1zM624.7 405.7h1v6.8h-1zM626.2 407.6h1.5v4.9h-1.5zM627.7 408h1v4.5h-1zM629.2 407.1h1v5.4h-1zM630.2 405.3h1v7.2h-1zM631.2 407.5h1v5h-1zM632.2 406.8h1v5.7h-1zM633.2 405.3h1.5v7.2h-1.5zM635.2 405.8h1.5v6.7h-1.5zM637.2 405.3h1v7.2h-1zM638.2 407.9h1v4.6h-1zM639.2 407.4h1v5.1h-1zM640.2 406.8h1v5.7h-1zM641.7 408.2h1v4.3h-1zM642.7 408.3h1.5v4.2h-1.5zM644.2 406.4h1v6.1h-1zM645.7 406.5h1v6h-1zM646.7 408.3h1v4.2h-1zM647.7 406.7h1.5v5.8h-1.5zM649.2 407.8h1.5v4.7h-1.5zM650.7 408.6h1v3.9h-1zM651.7 407.9h1v4.6h-1zM652.7 408.5h1v4h-1zM653.7 408.4h1.5v4.1h-1.5zM655.2 407.6h1v4.9h-1zM656.7 407.6h1v4.9h-1zM658.2 408.3h1v4.2h-1zM659.2 405.1h1v7.4h-1zM660.7 407.4h1v5.1h-1zM662.2 407.9h1v4.6h-1zM663.2 407.5h1v5h-1zM664.2 406.2h1v6.3h-1zM665.2 405.7h1v6.8h-1zM666.2 407.9h1.5v4.6h-1.5zM668.2 406.2h1v6.3h-1zM669.2 406.5h1.5v6h-1.5zM670.7 408.6h1.5v3.9h-1.5zM672.7 405.5h1v7h-1zM673.7 407.5h1.5v5h-1.5zM675.2 407.6h1v4.9h-1zM676.7 407.9h1v4.6h-1zM677.7 407.2h1.5v5.3h-1.5zM679.2 408.8h1.5v3.7h-1.5zM680.7 382.8h0.6v29.7h-0.6zM681.7 383.2h0.6v29.3h-0.6zM682.7 405.6h0.6v6.9h-0.6zM683.7 403.6h0.6v8.9h-0.6zM684.7 405.9h0.6v6.6h-0.6zM697.2 384h0.6v28.5h-0.6zM698.2 388.3h0.6v24.2h-0.6zM699.2 404.9h0.6v7.6h-0.6zM700.2 403.3h0.6v9.2h-0.6zM701.2 408.9h1.5v3.6h-1.5zM702.7 407.1h1.5v5.4h-1.5zM704.2 408.7h1v3.8h-1zM705.7 407.5h1.5v5h-1.5zM707.2 406.3h1v6.2h-1zM708.7 405.5h1.5v7h-1.5zM710.2 407.4h1v5.1h-1zM711.2 407.1h1v5.4h-1zM712.2 405.3h1v7.2h-1zM713.2 405.8h1v6.7h-1zM714.7 407.3h1v5.2h-1zM716.2 405.5h1v7h-1zM717.2 405.7h1v6.8h-1zM718.2 407.3h1v5.2h-1zM719.2 406.4h1.5v6.1h-1.5zM720.7 408.4h1v4.1h-1zM721.7 407.6h1v4.9h-1zM722.7 407.6h1v4.9h-1zM724.2 408.6h1.5v3.9h-1.5zM726.2 407.1h1v5.4h-1zM727.2 406.7h1v5.8h-1zM728.7 405.9h1v6.6h-1zM729.7 405.1h1.5v7.4h-1.5zM731.2 407.8h1v4.7h-1zM732.7 405.8h1v6.7h-1zM733.7 406.2h1v6.3h-1zM735.2 405.8h1v6.7h-1zM736.2 407.3h1v5.2h-1zM737.2 408.9h1.5v3.6h-1.5zM738.7 407.8h1v4.7h-1zM739.7 406.9h1.5v5.6h-1.5zM741.2 405.5h1v7h-1zM742.2 407.4h1.5v5.1h-1.5zM744.2 408.1h1.5v4.4h-1.5zM745.7 407h1v5.5h-1zM746.7 406h1v6.5h-1zM748.2 407.8h1.5v4.7h-1.5zM749.7 407.7h1.5v4.8h-1.5zM751.2 406.1h1.5v6.4h-1.5zM753.2 407.9h1v4.6h-1zM754.2 406.7h1v5.8h-1zM755.2 408.9h1.5v3.6h-1.5zM756.7 408.9h1.5v3.6h-1.5zM758.7 408.1h1v4.4h-1zM760.2 408.4h1v4.1h-1zM761.2 407.3h1v5.2h-1zM762.7 408.5h1.5v4h-1.5zM764.2 407.3h1v5.2h-1zM765.7 406.6h1v5.9h-1zM766.7 406.5h1.5v6h-1.5zM768.2 405.9h1v6.6h-1zM769.2 405.2h1v7.3h-1zM770.2 406.1h1v6.4h-1zM771.2 405.5h1v7h-1zM772.2 407.2h1v5.3h-1zM773.7 407.5h1v5h-1zM775.2 408.9h1v3.6h-1zM776.7 405.2h1.5v7.3h-1.5zM778.7 405.5h1v7h-1zM779.7 382.5h0.6v30h-0.6zM780.7 384.7h0.6v27.8h-0.6zM781.7 405.2h0.6v7.3h-0.6zM782.7 402.2h0.6v10.3h-0.6zM783.7 405.5h0.6v7h-0.6zM796.2 384.5h0.6v28h-0.6zM797.2 387.9h0.6v24.6h-0.6zM798.2 403.6h0.6v8.9h-0.6zM799.2 404.6h0.6v7.9h-0.6zM800.2 406.5h1v6h-1zM801.2 408.7h1v3.8h-1zM802.2 408.9h1v3.6h-1zM803.2 408.2h1v4.3h-1zM804.2 406.1h1v6.4h-1zM805.7 407.9h1v4.6h-1zM806.7 407.7h1.5v4.8h-1.5zM808.2 406h1v6.5h-1zM809.2 406.5h1.5v6h-1.5zM810.7 407.9h1v4.6h-1zM812.2 407.7h1v4.8h-1zM813.7 405.1h1.5v7.4h-1.5zM815.2 405.6h1v6.9h-1zM816.7 408h1v4.5h-1zM818.2 405.2h1v7.3h-1zM819.7 406.7h1.5v5.8h-1.5zM821.7 408.2h1v4.3h-1zM823.2 407.7h1.5v4.8h-1.5zM824.7 405.4h1.5v7.1h-1.5zM826.2 407.4h1.5v5.1h-1.5zM827.7 408.2h1.5v4.3h-1.5zM829.2 406.1h1v6.4h-1zM830.2 405.7h1v6.8h-1zM831.2 406.4h1v6.1h-1zM832.2 407.3h1v5.2h-1zM833.7 406.4h1.5v6.1h-1.5zM835.7 406.9h1.5v5.6h-1.5zM837.7 405.1h1v7.4h-1zM838.7 407.3h1v5.2h-1zM840.2 407.6h1v4.9h-1zM841.7 407.7h1v4.8h-1zM842.7 405.8h1.5v6.7h-1.5zM844.2 406.7h1v5.8h-1zM845.2 407.2h1v5.3h-1zM846.7 405.7h1v6.8h-1zM848.2 407.5h1v5h-1zM849.2 407.9h1.5v4.6h-1.5zM851.2 407.7h1v4.8h-1zM852.2 406.7h1v5.8h-1zM853.7 406.9h1v5.6h-1zM854.7 408.6h1.5v3.9h-1.5zM856.2 407.3h1v5.2h-1zM857.2 406.6h1v5.9h-1zM858.7 408.6h1.5v3.9h-1.5zM860.7 408.8h1v3.7h-1zM861.7 406.9h1v5.6h-1zM862.7 407.7h1v4.8h-1zM863.7 405.6h1v6.9h-1zM864.7 408h1v4.5h-1zM865.7 406.9h1v5.6h-1zM866.7 405.5h1v7h-1zM868.2 405.7h1.5v6.8h-1.5zM870.2 406.2h1v6.3h-1zM871.2 406.1h1v6.4h-1zM872.2 406.1h1v6.4h-1zM873.7 406.2h1v6.3h-1zM875.2 405.5h1.5v7h-1.5zM876.7 408.1h1v4.4h-1zM877.7 405.9h1v6.6h-1zM878.7 383.9h0.6v28.6h-0.6zM879.7 382.5h0.6v30h-0.6zM880.7 404.8h0.6v7.7h-0.6zM881.7 403h0.6v9.5h-0.6zM882.7 405.7h0.6v6.8h-0.6zM895.1 385.9h0.6v26.6h-0.6zM896.1 389h0.6v23.5h-0.6zM897.1 404.2h0.6v8.3h-0.6zM898.1 405.6h0.6v6.9h-0.6zM899.1 406.2h1v6.3h-1zM900.1 406.6h1v5.9h-1zM901.6 406.7h1.5v5.8h-1.5zM903.1 405.7h1v6.8h-1zM904.1 407h1v5.5h-1zM905.1 408.1h1v4.4h-1zM906.1 408.8h1.5v3.7h-1.5zM907.6 406.9h1v5.6h-1zM908.6 406.7h1.5v5.8h-1.5zM910.1 405.1h1v7.4h-1zM911.6 407.4h1v5.1h-1zM913.1 406.7h1.5v5.8h-1.5zM914.6 405.8h1v6.7h-1zM915.6 408.4h1v4.1h-1zM917.1 406.9h1v5.6h-1zM918.1 408.2h1v4.3h-1zM919.1 406.3h1v6.2h-1zM920.6 405.1h1.5v7.4h-1.5zM922.1 408.5h1.5v4h-1.5zM924.1 405.1h1v7.4h-1zM925.1 408.6h1v3.9h-1zM926.1 407h1.5v5.5h-1.5zM928.1 406.3h1v6.2h-1zM929.1 405.4h1v7.1h-1zM930.1 407.8h1v4.7h-1zM931.1 406.9h1v5.6h-1zM932.1 405.6h1v6.9h-1zM933.1 406.8h1.5v5.7h-1.5zM935.1 407.1h1v5.4h-1zM936.1 406.4h1v6.1h-1zM937.1 407.8h1.5v4.7h-1.5zM938.6 408.1h1.5v4.4h-1.5zM940.6 407.5h1v5h-1zM942.1 407.4h1v5.1h-1zM943.1 407.5h1v5h-1zM944.6 405.9h1.5v6.6h-1.5zM946.1 407.7h1v4.8h-1zM947.1 405.7h1v6.8h-1zM948.1 407.1h1.5v5.4h-1.5zM949.6 407.8h1v4.7h-1zM950.6 407.7h1v4.8h-1zM952.1 405.8h1v6.7h-1zM953.1 407.8h1v4.7h-1zM954.1 408h1.5v4.5h-1.5zM956.1 408.5h1v4h-1zM957.6 406.1h1v6.4h-1zM958.6 407.1h1.5v5.4h-1.5zM960.1 408.2h1v4.3h-1zM961.6 408.8h1v3.7h-1zM963.1 408.7h1v3.8h-1zM964.6 408h1v4.5h-1zM966.1 406.6h1.5v5.9h-1.5zM967.6 407.3h1v5.2h-1zM968.6 405.8h1v6.7h-1zM970.1 407.1h1v5.4h-1zM971.1 405.7h1.5v6.8h-1.5zM973.1 405.7h1v6.8h-1zM974.1 407.4h1.5v5.1h-1.5zM975.6 406.9h1v5.6h-1zM976.6 407.8h1v4.7h-1zM977.6 381.5h0.6v31h-0.6zM978.6 383.8h0.6v28.7h-0.6zM979.6 404h0.6v8.5h-0.6zM980.6 403.6h0.6v8.9h-0.6zM981.6 406.9h0.6v5.6h-0.6zM994.1 384.5h0.6v28h-0.6zM995.1 388.7h0.6v23.8h-0.6zM996.1 404.7h0.6v7.8h-0.6zM997.1 403.6h0.6v8.9h-0.6zM998.1 407.5h1.5v5h-1.5zM1000.1 405.4h1.5v7.1h-1.5zM1001.6 407.1h1v5.4h-1zM1003.1 408.5h1v4h-1zM1004.6 407.4h1v5.1h-1zM1005.6 406.8h1v5.7h-1zM1006.6 408.7h1v3.8h-1zM1008.1 405.9h1.5v6.6h-1.5zM1010.1 406.6h1v5.9h-1zM1011.6 406.5h1v6h-1zM1013.1 405.4h1v7.1h-1zM1014.1 405.8h1v6.7h-1zM1015.1 406.2h1v6.3h-1zM1016.1 406.3h1v6.2h-1zM1017.1 407.2h1v5.3h-1zM1018.1 408.3h1v4.2h-1zM1019.1 405.4h1v7.1h-1zM1020.1 405.2h1v7.3h-1zM1021.1 408.1h1v4.4h-1zM1022.1 405.8h1v6.7h-1zM1023.1 408h1v4.5h-1zM1024.1 406.1h1v6.4h-1zM1025.1 405.7h1v6.8h-1zM1026.1 407.4h1v5.1h-1zM1027.6 405h1.5v7.5h-1.5zM1029.1 407.7h1.5v4.8h-1.5zM1031.1 407.1h1v5.4h-1zM1032.1 406.8h1.5v5.7h-1.5zM1034.1 407.2h1v5.3h-1zM1035.1 407.4h1.5v5.1h-1.5zM1036.6 407.3h1.5v5.2h-1.5zM1038.1 406.1h1.5v6.4h-1.5zM1039.6 405.4h1v7.1h-1zM1040.6 405.3h1v7.2h-1zM1041.6 405.8h1v6.7h-1zM1042.6 407.1h1v5.4h-1zM1043.6 407.8h1.5v4.7h-1.5zM1045.6 407.6h1v4.9h-1zM1047.1 406.4h1v6.1h-1zM1048.1 405.3h1v7.2h-1zM1049.6 408.7h1.5v3.8h-1.5zM1051.1 407.4h1v5.1h-1zM1052.1 406.5h1.5v6h-1.5zM1053.6 407.6h1.5v4.9h-1.5zM1055.6 407.7h1v4.8h-1zM1056.6 406.7h1.5v5.8h-1.5zM1058.1 405.9h1v6.6h-1zM1059.1 409h1.5v3.5h-1.5zM1061.1 407.1h1.5v5.4h-1.5zM1062.6 406h1v6.5h-1zM1064.1 407h1.5v5.5h-1.5zM1065.6 406.4h1v6.1h-1zM1066.6 405.2h1v7.3h-1zM1068.1 408.4h1.5v4.1h-1.5zM1070.1 406.7h1.5v5.8h-1.5zM1072.1 405.6h1v6.9h-1zM1073.1 406.1h1v6.4h-1zM1074.1 408h1.5v4.5h-1.5zM1076.1 407.1h1.5v5.4h-1.5zM1076.6 381.2h0.6v31.3h-0.6zM1077.6 383.6h0.6v28.9h-0.6zM1078.6 405.5h0.6v7h-0.6zM1079.6 403.6h0.6v8.9h-0.6zM1080.6 406.7h0.6v5.8h-0.6zM1093 384.9h0.6v27.6h-0.6zM1094 386.6h0.6v25.9h-0.6zM1095 403h0.6v9.5h-0.6zM1096 404.4h0.6v8.1h-0.6zM1097 405.3h1v7.2h-1zM1098 405.5h1v7h-1zM1099 408.2h1v4.3h-1zM1100 408.7h1v3.8h-1zM1101 407.8h1.5v4.7h-1.5zM1102.5 408.7h1.5v3.8h-1.5zM1104 406h1v6.5h-1zM1105 405.5h1v7h-1zM1106.5 405.3h1.5v7.2h-1.5zM1108 405.1h1v7.4h-1zM1109 407.5h1v5h-1zM1110 405.2h1v7.3h-1zM1111.5 407.1h1v5.4h-1zM1112.5 409h1v3.5h-1zM1113.5 408.4h1v4.1h-1zM1115 405.3h1v7.2h-1zM1116.5 408.8h1.5v3.7h-1.5zM1118 405.8h1.5v6.7h-1.5zM1120 405.2h1.5v7.3h-1.5zM1121.5 406.6h1v5.9h-1zM1123 408.3h1v4.2h-1zM1124 408.7h1v3.8h-1zM1125 408.2h1v4.3h-1zM1126 408.8h1v3.7h-1zM1127.5 407.6h1v4.9h-1zM1129 408.2h1v4.3h-1zM1130 408h1v4.5h-1zM1131.5 406.4h1v6.1h-1zM1132.5 406h1v6.5h-1zM1133.5 405.4h1v7.1h-1zM1134.5 408.9h1v3.6h-1zM1135.5 406.9h1v5.6h-1zM1136.5 405.7h1v6.8h-1zM1137.5 408.7h1v3.8h-1zM1138.5 405.9h1.5v6.6h-1.5zM1140 405.5h1v7h-1zM1141 405.7h1v6.8h-1zM1142 406.2h1v6.3h-1zM1143 405.5h1.5v7h-1.5zM1144.5 408.2h1v4.3h-1zM1145.5 406.4h1.5v6.1h-1.5zM1147.5 407.7h1v4.8h-1zM1148.5 405.9h1.5v6.6h-1.5zM1150 407.4h1v5.1h-1zM1151.5 408.1h1v4.4h-1zM1152.5 405.2h1.5v7.3h-1.5zM1154 408.2h1v4.3h-1zM1155.5 406.1h1.5v6.4h-1.5zM1157 407.7h1v4.8h-1zM1158 407.6h1v4.9h-1zM1159 408.5h1v4h-1zM1160 408.8h1v3.7h-1zM1161 406.1h1.5v6.4h-1.5zM1163 405.7h1v6.8h-1zM1164 405.3h1v7.2h-1zM1165 406.4h1v6.1h-1zM1166.5 406.3h1v6.2h-1zM1168 408.3h1v4.2h-1zM1169.5 407.9h1.5v4.6h-1.5zM1171 406.1h1v6.4h-1zM1172 407.2h1.5v5.3h-1.5zM1173.5 407.4h1v5.1h-1zM1175 405.8h1v6.7h-1zM1175.5 382.1h0.6v30.4h-0.6zM1176.5 384.3h0.6v28.2h-0.6zM1177.5 405.8h0.6v6.7h-0.6zM1178.5 402.8h0.6v9.7h-0.6zM1179.5 404.1h0.6v8.4h-0.6zM1192 386h0.6v26.5h-0.6zM1193 387.7h0.6v24.8h-0.6zM1194 404.8h0.6v7.7h-0.6zM1195 404.3h0.6v8.2h-0.6zM1196 407.4h1v5.1h-1zM1197 408.4h1v4.1h-1zM1198.5 406.3h1v6.2h-1zM1199.5 408.5h1.5v4h-1.5zM1201 408.1h1.5v4.4h-1.5zM1203 408.8h1.5v3.7h-1.5zM1204.5 408.7h1v3.8h-1zM1205.5 408.1h1v4.4h-1zM1206.5 405.2h1.5v7.3h-1.5zM1208 406.4h1v6.1h-1zM1209.5 408.8h1v3.7h-1zM1210.5 405h1v7.5h-1zM1212 408.2h1v4.3h-1zM1213 407.3h1v5.2h-1zM1214 407.9h1v4.6h-1zM1215.5 405.5h1v7h-1zM1216.5 408.6h1v3.9h-1zM1217.5 406.6h1v5.9h-1zM1218.5 407.3h1v5.2h-1zM1220 407.3h1v5.2h-1zM1221.5 405.3h1v7.2h-1zM1222.5 407.3h1v5.2h-1zM1223.5 406.4h1.5v6.1h-1.5zM1225 406.4h1v6.1h-1zM1226 407.1h1v5.4h-1zM1227 406.9h1.5v5.6h-1.5zM1229 406.9h1v5.6h-1zM1230.5 407.7h1v4.8h-1zM1231.5 406h1v6.5h-1zM1232.5 405.8h1v6.7h-1zM1233.5 408.4h1.5v4.1h-1.5zM1235 406.6h1.5v5.9h-1.5zM1237 406h1.5v6.5h-1.5zM1239 406.7h1v5.8h-1zM1240 405.6h1.5v6.9h-1.5zM1241.5 406.1h1v6.4h-1zM1243 405.2h1v7.3h-1zM1244 405.7h1.5v6.8h-1.5zM1246 408.1h1v4.4h-1zM1247 408.5h1v4h-1zM1248 407.6h1.5v4.9h-1.5zM1249.5 407.5h1.5v5h-1.5zM1251 407.3h1v5.2h-1zM1252 407.3h1v5.2h-1zM1253 406.7h1.5v5.8h-1.5zM1255 405.3h1.5v7.2h-1.5zM1257 408.9h1v3.6h-1zM1258 405.7h1v6.8h-1zM1259 406h1.5v6.5h-1.5zM1261 405.3h1v7.2h-1zM1262 405.5h1.5v7h-1.5zM1263.5 405.4h1v7.1h-1zM1265 405.7h1v6.8h-1zM1266.5 408.5h1v4h-1zM1268 406.2h1v6.3h-1zM1269 408h1v4.5h-1zM1270.5 408.3h1.5v4.2h-1.5zM1272 406.3h1.5v6.2h-1.5zM1273.5 407.4h1v5.1h-1zM1274.5 382.4h0.6v30.1h-0.6zM1275.5 384.5h0.6v28h-0.6zM1276.5 405h0.6v7.5h-0.6zM1277.5 405h0.6v7.5h-0.6zM1278.5 404.6h0.6v7.9h-0.6zM1291 385.3h0.6v27.2h-0.6zM1292 387.6h0.6v24.9h-0.6zM1293 402.4h0.6v10.1h-0.6zM1294 405.7h0.6v6.8h-0.6zM1295 407.5h1v5h-1zM1296.5 407.8h1v4.7h-1zM1297.5 408.4h1v4.1h-1zM1299 407.1h1.5v5.4h-1.5zM1301 407.2h1v5.3h-1zM1302 405.1h1.5v7.4h-1.5zM1304 407.2h1.5v5.3h-1.5zM1306 408.2h1.5v4.3h-1.5zM1308 406.6h1v5.9h-1zM1309.5 406.1h1v6.4h-1zM1310.5 405.4h1.5v7.1h-1.5zM1312.5 407.8h1.5v4.7h-1.5zM1314.5 405.2h1.5v7.3h-1.5zM1316 409h1v3.5h-1zM1317.5 405.7h1v6.8h-1zM1319 405.5h1v7h-1zM1320 406.2h1.5v6.3h-1.5zM1321.5 407.6h1.5v4.9h-1.5zM1323 407.4h1.5v5.1h-1.5zM1324.5 406.4h1.5v6.1h-1.5zM1326.5 406h1v6.5h-1zM1328 405.4h1.5v7.1h-1.5zM1329.5 407.8h1.5v4.7h-1.5zM1331 408.1h1v4.4h-1zM1332 405.1h1v7.4h-1zM1333 406.4h1v6.1h-1zM1334 407.5h1.5v5h-1.5zM1336 408.4h1v4.1h-1zM1337 406.5h1v6h-1zM1338.5 406.1h1v6.4h-1zM1339.5 406.7h1v5.8h-1zM1340.5 407.7h1v4.8h-1zM1342 408.8h1v3.7h-1zM1343.5 407.5h1v5h-1zM1344.5 407.5h1v5h-1zM1345.5 408h1v4.5h-1zM1346.5 405.6h1.5v6.9h-1.5zM1348 406.4h1.5v6.1h-1.5zM1349.5 408.6h1v3.9h-1zM1350.5 408.5h1v4h-1zM1351.5 407.9h1.5v4.6h-1.5zM1353 407.6h1v4.9h-1zM1354 406.2h1v6.3h-1zM1355 406.1h1.5v6.4h-1.5zM1356.5 406h1v6.5h-1zM1357.5 405.3h1v7.2h-1zM1359 406h1v6.5h-1zM1360.5 405.8h1v6.7h-1zM1361.5 407.5h1.5v5h-1.5zM1363 406.4h1v6.1h-1zM1364 408.4h1.5v4.1h-1.5zM1365.5 407.1h1v5.4h-1zM1366.5 406.4h1.5v6.1h-1.5zM1368 407.4h1.5v5.1h-1.5zM1369.5 406.9h1v5.6h-1zM1370.5 407.2h1.5v5.3h-1.5zM1372 406.2h1v6.3h-1zM1373 406h1v6.5h-1zM1373.5 381.1h0.6v31.4h-0.6zM1374.5 383.4h0.6v29.1h-0.6zM1375.5 403h0.6v9.5h-0.6zM1376.5 403.2h0.6v9.3h-0.6zM1377.5 404.5h0.6v8h-0.6zM1389.9 384.4h0.6v28.1h-0.6zM1390.9 386.9h0.6v25.6h-0.6zM1391.9 402.7h0.6v9.8h-0.6zM1392.9 404.7h0.6v7.8h-0.6zM1393.9 405.5h1v7h-1zM1394.9 407.8h1.5v4.7h-1.5zM1396.4 408.4h1v4.1h-1zM1397.4 408.9h1v3.6h-1zM1398.4 406h1v6.5h-1zM1399.9 408.1h1v4.4h-1zM1400.9 407.1h1v5.4h-1zM1401.9 407.6h1v4.9h-1zM1402.9 405.6h1v6.9h-1zM1403.9 406.7h1.5v5.8h-1.5zM1405.9 407.5h1v5h-1zM1407.4 405.6h1v6.9h-1zM1408.4 408h1v4.5h-1zM1409.4 407.1h1v5.4h-1zM1410.4 408.7h1v3.8h-1zM1411.4 407.5h1v5h-1zM1412.4 408.4h1v4.1h-1zM1413.4 406h1v6.5h-1zM1414.4 408.7h1v3.8h-1zM1415.4 406.3h1v6.2h-1zM1416.9 407.7h1v4.8h-1zM1417.9 406.1h1v6.4h-1zM1418.9 405.3h1.5v7.2h-1.5zM1420.4 405.9h1.5v6.6h-1.5zM1421.9 407h1v5.5h-1zM1422.9 406.2h1.5v6.3h-1.5zM1424.9 409h1.5v3.5h-1.5zM1426.4 407.9h1.5v4.6h-1.5zM1427.9 406.5h1v6h-1zM1428.9 407.5h1v5h-1zM1430.4 408.9h1.5v3.6h-1.5zM1431.9 405h1v7.5h-1zM1432.9 408.1h1v4.4h-1zM1433.9 408.5h1v4h-1zM1434.9 408.4h1v4.1h-1zM1436.4 407.9h1v4.6h-1zM1437.4 408.3h1v4.2h-1zM1438.9 405.5h1v7h-1zM1439.9 406.4h1.5v6.1h-1.5zM1441.4 406.8h1.5v5.7h-1.5zM1442.9 408.7h1v3.8h-1zM1443.9 408.1h1v4.4h-1zM1444.9 408.9h1v3.6h-1zM1446.4 406h1.5v6.5h-1.5zM1447.9 406.6h1v5.9h-1zM1448.9 405.9h1.5v6.6h-1.5zM1450.4 405.3h1v7.2h-1zM1451.4 407.7h1v4.8h-1zM1452.4 405.5h1v7h-1zM1453.4 405.2h1v7.3h-1zM1454.9 406.5h1.5v6h-1.5zM1456.4 408h1v4.5h-1zM1457.4 408.5h1v4h-1zM1458.9 405.4h1v7.1h-1zM1460.4 405.5h1v7h-1zM1461.4 408.2h1v4.3h-1zM1462.9 406.2h1.5v6.3h-1.5zM1464.4 406.4h1.5v6.1h-1.5zM1465.9 406.5h1v6h-1zM1466.9 405.4h1v7.1h-1zM1468.4 408.4h1v4.1h-1zM1469.4 407.1h1.5v5.4h-1.5zM1470.9 407h1v5.5h-1zM1472.4 383.7h0.6v28.8h-0.6zM1473.4 384.9h0.6v27.6h-0.6zM1474.4 405.1h0.6v7.4h-0.6zM1475.4 402.1h0.6v10.4h-0.6zM1476.4 406.9h0.6v5.6h-0.6zM1488.9 386.1h0.6v26.4h-0.6zM1489.9 387.7h0.6v24.8h-0.6zM1490.9 402.1h0.6v10.4h-0.6zM1491.9 403.6h0.6v8.9h-0.6zM1492.9 407.6h1v4.9h-1zM1493.9 407.9h1v4.6h-1zM1495.4 406.5h1v6h-1zM1496.4 407.9h1v4.6h-1zM1497.4 408.2h1v4.3h-1zM1498.4 406.6h1v5.9h-1zM1499.4 405.1h1v7.4h-1zM1500.4 405.8h1v6.7h-1zM1501.4 406.5h1v6h-1zM1502.4 405.1h1.5v7.4h-1.5zM1504.4 408.3h1v4.2h-1zM1505.9 407h1.5v5.5h-1.5zM1507.4 408.3h1.5v4.2h-1.5zM1508.9 407.9h1v4.6h-1zM1510.4 408.8h1.5v3.7h-1.5zM1511.9 407.4h1v5.1h-1zM1512.9 405.9h1v6.6h-1zM1513.9 406.4h1v6.1h-1zM1514.9 406.5h1v6h-1zM1516.4 409h1v3.5h-1zM1517.4 408.5h1v4h-1zM1518.4 407.1h1.5v5.4h-1.5zM1519.9 405.8h1.5v6.7h-1.5zM1521.9 408.2h1v4.3h-1zM1522.9 405.5h1v7h-1zM1523.9 405.1h1v7.4h-1zM1525.4 405.3h1v7.2h-1zM1526.4 406.6h1v5.9h-1zM1527.4 406.6h1v5.9h-1zM1528.9 405.3h1v7.2h-1zM1529.9 407.5h1v5h-1zM1531.4 406.8h1v5.7h-1zM1532.9 408h1.5v4.5h-1.5zM1534.4 407.9h1v4.6h-1zM1535.4 406.4h1v6.1h-1zM1536.4 407.9h1v4.6h-1zM1537.4 408.6h1v3.9h-1zM1538.9 406h1v6.5h-1zM1540.4 406.3h1.5v6.2h-1.5zM1542.4 406.5h1v6h-1zM1543.4 406.4h1.5v6.1h-1.5zM1545.4 408.9h1v3.6h-1zM1546.4 408.7h1v3.8h-1zM1547.4 408h1.5v4.5h-1.5zM1548.9 405.5h1v7h-1zM1550.4 405.7h1.5v6.8h-1.5zM1551.9 407.6h1v4.9h-1zM1553.4 406h1.5v6.5h-1.5zM1554.9 408.8h1.5v3.7h-1.5zM1556.9 405.6h1v6.9h-1zM1557.9 407.5h1v5h-1zM1559.4 405.4h1v7.1h-1zM1560.9 406.6h1v5.9h-1zM1561.9 409h1.5v3.5h-1.5zM1563.4 407.7h1.5v4.8h-1.5zM1564.9 407.6h1v4.9h-1zM1566.4 405.9h1v6.6h-1zM1567.4 406.5h1.5v6h-1.5zM1568.9 405.8h1v6.7h-1zM1569.9 407.7h1.5v4.8h-1.5zM1571.4 382.1h0.6v30.4h-0.6zM1572.4 382.7h0.6v29.8h-0.6zM1573.4 405.8h0.6v6.7h-0.6zM1574.4 404.3h0.6v8.2h-0.6zM1575.4 404.5h0.6v8h-0.6z" fill="#c04444" fill-opacity="0.72"/><rect x="688.2" y="452" width="99" height="18" fill="#a83cc8" /><rect x="787.2" y="452" width="99" height="18" fill="#a83cc8" /><rect x="886.1" y="452" width="99" height="18" fill="#a83cc8" /><rect x="985.1" y="452" width="99" height="18" fill="#a83cc8" /><rect x="1084" y="452" width="99" height="18" fill="#a83cc8" /><rect x="1183" y="452" width="99" height="18" fill="#a83cc8" /><rect x="1282" y="452" width="99" height="18" fill="#a83cc8" /><rect x="1380.9" y="452" width="99" height="18" fill="#a83cc8" /><rect x="787.2" y="452" width="1" height="18" fill="#c27ad9" /><rect x="886.1" y="452" width="1" height="18" fill="#c27ad9" /><rect x="985.1" y="452" width="1" height="18" fill="#c27ad9" /><rect x="1084" y="452" width="1" height="18" fill="#c27ad9" /><rect x="1183" y="452" width="1" height="18" fill="#c27ad9" /><rect x="1282" y="452" width="1" height="18" fill="#c27ad9" /><rect x="1380.9" y="452" width="1" height="18" fill="#c27ad9" /><rect x="591" y="476" width="896" height="18" fill="#95a042" /><rect x="688.2" y="476" width="1" height="18" fill="#b3bc78" /><rect x="787.2" y="476" width="1" height="18" fill="#b3bc78" /><rect x="886.1" y="476" width="1" height="18" fill="#b3bc78" /><rect x="985.1" y="476" width="1" height="18" fill="#b3bc78" /><rect x="1084" y="476" width="1" height="18" fill="#b3bc78" /><rect x="1183" y="476" width="1" height="18" fill="#b3bc78" /><rect x="1282" y="476" width="1" height="18" fill="#b3bc78" /><rect x="1380.9" y="476" width="1" height="18" fill="#b3bc78" /><rect x="1479.9" y="476" width="1" height="18" fill="#b3bc78" /><rect x="498.1" y="500" width="2.0" height="18" fill="#5bc0eb" /><rect x="499.9" y="500" width="80.6" height="18" fill="#6a3bd6" /><rect x="580.5" y="500" width="1.5" height="18" fill="#d0a8b8" /><rect x="582" y="500" width="3.4" height="18" fill="#2a7a3a" /><rect x="585.4" y="500" width="1.4" height="18" fill="#9aa060" /><rect x="586.8" y="500" width="2.4" height="18" fill="#45a54e" /><rect x="499.9" y="518" width="80.6" height="18" fill="#3d7b4a" /><rect x="499.9" y="518" width="1.2" height="18" fill="#a090d0" /><rect x="502.3" y="518" width="0.8" height="18" fill="#9a9a9a" /><rect x="504.3" y="518" width="1" height="18" fill="#8a8a50" /><rect x="506.5" y="518" width="1.2" height="18" fill="#8a8a50" /><rect x="508.7" y="518" width="0.8" height="18" fill="#9a9a9a" /><rect x="510.3" y="518" width="1" height="18" fill="#9a9a9a" /><rect x="512.8" y="518" width="0.8" height="18" fill="#8a8a50" /><rect x="514.8" y="518" width="1" height="18" fill="#5ba8e0" /><rect x="516.6" y="518" width="1" height="18" fill="#6f8a6f" /><rect x="518.4" y="518" width="1" height="18" fill="#5ba8e0" /><rect x="520.2" y="518" width="1" height="18" fill="#5ba8e0" /><rect x="522.4" y="518" width="1.2" height="18" fill="#9a9a9a" /><rect x="524.6" y="518" width="1" height="18" fill="#6f8a6f" /><rect x="527.1" y="518" width="1" height="18" fill="#a090d0" /><rect x="529.1" y="518" width="1" height="18" fill="#8a8a50" /><rect x="531.6" y="518" width="1.2" height="18" fill="#c8a0b0" /><rect x="533.6" y="518" width="1" height="18" fill="#5ba8e0" /><rect x="535.8" y="518" width="1" height="18" fill="#8a8a50" /><rect x="537.8" y="518" width="1.2" height="18" fill="#c8a0b0" /><rect x="540" y="518" width="1" height="18" fill="#9a9a9a" /><rect x="542.5" y="518" width="0.8" height="18" fill="#9a9a9a" /><rect x="544.5" y="518" width="1.2" height="18" fill="#9a9a9a" /><rect x="546.9" y="518" width="1.2" height="18" fill="#8a9a8a" /><rect x="549.3" y="518" width="1.2" height="18" fill="#8a9a8a" /><rect x="551.7" y="518" width="1" height="18" fill="#5ba8e0" /><rect x="553.9" y="518" width="0.8" height="18" fill="#6f8a6f" /><rect x="555.5" y="518" width="0.8" height="18" fill="#9a9a9a" /><rect x="557.3" y="518" width="1.2" height="18" fill="#a090d0" /><rect x="559.3" y="518" width="1" height="18" fill="#8a9a8a" /><rect x="561.3" y="518" width="1.2" height="18" fill="#6f8a6f" /><rect x="563.5" y="518" width="1" height="18" fill="#6f8a6f" /><rect x="565.5" y="518" width="0.8" height="18" fill="#2a6e38" /><rect x="567.5" y="518" width="0.8" height="18" fill="#c8a0b0" /><rect x="569.5" y="518" width="0.8" height="18" fill="#5ba8e0" /><rect x="571.8" y="518" width="1.2" height="18" fill="#a090d0" /><rect x="574" y="518" width="1" height="18" fill="#8a9a8a" /><rect x="576.5" y="518" width="0.8" height="18" fill="#c8a0b0" /><rect x="578.8" y="518" width="1" height="18" fill="#5ba8e0" /><path d="M577.8 536 L580.8 519 L582.3 522 L583.8 519 L586.8 519 L590.1 536 Z" fill="#5ccbc6"/><path d="M495.9 554 L499.9 536.5 L580.5 536.5 L584.5 554 Z" fill="#5ccbc6"/><rect x="597.1" y="500" width="2.0" height="18" fill="#5bc0eb" /><rect x="598.8" y="500" width="80.6" height="18" fill="#6a3bd6" /><rect x="679.4" y="500" width="1.5" height="18" fill="#d0a8b8" /><rect x="680.9" y="500" width="3.4" height="18" fill="#2a7a3a" /><rect x="684.3" y="500" width="1.4" height="18" fill="#9aa060" /><rect x="685.7" y="500" width="2.4" height="18" fill="#45a54e" /><rect x="598.8" y="518" width="80.6" height="18" fill="#3d7b4a" /><rect x="598.8" y="518" width="0.8" height="18" fill="#6f8a6f" /><rect x="600.4" y="518" width="1" height="18" fill="#8a8a50" /><rect x="602.6" y="518" width="1" height="18" fill="#9a9a9a" /><rect x="604.6" y="518" width="1" height="18" fill="#2a6e38" /><rect x="606.8" y="518" width="0.8" height="18" fill="#9a9a9a" /><rect x="608.8" y="518" width="1.2" height="18" fill="#6f8a6f" /><rect x="611.5" y="518" width="1" height="18" fill="#a090d0" /><rect x="613.5" y="518" width="1.2" height="18" fill="#9a9a9a" /><rect x="615.7" y="518" width="1" height="18" fill="#9a9a9a" /><rect x="617.7" y="518" width="1" height="18" fill="#8a8a50" /><rect x="619.5" y="518" width="1.2" height="18" fill="#c8a0b0" /><rect x="621.7" y="518" width="1" height="18" fill="#8a8a50" /><rect x="623.7" y="518" width="1" height="18" fill="#9a9a9a" /><rect x="625.9" y="518" width="1" height="18" fill="#c8a0b0" /><rect x="627.9" y="518" width="1" height="18" fill="#2a6e38" /><rect x="629.9" y="518" width="1" height="18" fill="#8a8a50" /><rect x="631.7" y="518" width="1.2" height="18" fill="#5ba8e0" /><rect x="633.9" y="518" width="1" height="18" fill="#c8a0b0" /><rect x="635.7" y="518" width="1.2" height="18" fill="#2a6e38" /><rect x="637.7" y="518" width="1" height="18" fill="#6f8a6f" /><rect x="639.7" y="518" width="1" height="18" fill="#8a9a8a" /><rect x="641.7" y="518" width="1.2" height="18" fill="#8a8a50" /><rect x="643.7" y="518" width="1" height="18" fill="#6f8a6f" /><rect x="645.7" y="518" width="1" height="18" fill="#5ba8e0" /><rect x="647.9" y="518" width="1" height="18" fill="#2a6e38" /><rect x="649.9" y="518" width="1" height="18" fill="#8a8a50" /><rect x="652.4" y="518" width="0.8" height="18" fill="#9a9a9a" /><rect x="654" y="518" width="1.2" height="18" fill="#a090d0" /><rect x="656.4" y="518" width="1.2" height="18" fill="#9a9a9a" /><rect x="658.4" y="518" width="1" height="18" fill="#8a8a50" /><rect x="660.2" y="518" width="1" height="18" fill="#6f8a6f" /><rect x="662.7" y="518" width="0.8" height="18" fill="#8a9a8a" /><rect x="664.3" y="518" width="1" height="18" fill="#a090d0" /><rect x="666.1" y="518" width="1.2" height="18" fill="#8a8a50" /><rect x="668.3" y="518" width="1" height="18" fill="#9a9a9a" /><rect x="670.8" y="518" width="1" height="18" fill="#9a9a9a" /><rect x="672.6" y="518" width="1.2" height="18" fill="#8a8a50" /><rect x="674.6" y="518" width="1" height="18" fill="#c8a0b0" /><rect x="677.1" y="518" width="1.2" height="18" fill="#9a9a9a" /><path d="M676.7 536 L679.7 519 L681.2 522 L682.7 519 L685.7 519 L689 536 Z" fill="#5ccbc6"/><path d="M594.8 554 L598.8 536.5 L679.4 536.5 L683.4 554 Z" fill="#5ccbc6"/><rect x="689.1" y="500" width="6.6" height="18" fill="#6a3bd6" /><rect x="689.3" y="518" width="6.7" height="18" fill="#c94fcb" /><rect x="696.1" y="500" width="2.0" height="18" fill="#5bc0eb" /><rect x="697.8" y="500" width="80.6" height="18" fill="#6a3bd6" /><rect x="778.4" y="500" width="1.5" height="18" fill="#d0a8b8" /><rect x="779.9" y="500" width="3.4" height="18" fill="#2a7a3a" /><rect x="783.3" y="500" width="1.4" height="18" fill="#9aa060" /><rect x="784.7" y="500" width="2.4" height="18" fill="#45a54e" /><rect x="697.8" y="518" width="80.6" height="18" fill="#3d7b4a" /><rect x="697.8" y="518" width="0.8" height="18" fill="#9a9a9a" /><rect x="699.6" y="518" width="1.2" height="18" fill="#8a8a50" /><rect x="701.6" y="518" width="0.8" height="18" fill="#8a8a50" /><rect x="703.9" y="518" width="1" height="18" fill="#5ba8e0" /><rect x="706.4" y="518" width="0.8" height="18" fill="#6f8a6f" /><rect x="708.4" y="518" width="0.8" height="18" fill="#a090d0" /><rect x="710.2" y="518" width="0.8" height="18" fill="#9a9a9a" /><rect x="712.5" y="518" width="0.8" height="18" fill="#9a9a9a" /><rect x="714.3" y="518" width="0.8" height="18" fill="#c8a0b0" /><rect x="716.3" y="518" width="1" height="18" fill="#c8a0b0" /><rect x="718.1" y="518" width="0.8" height="18" fill="#c8a0b0" /><rect x="720.1" y="518" width="1.2" height="18" fill="#c8a0b0" /><rect x="722.3" y="518" width="1" height="18" fill="#c8a0b0" /><rect x="724.5" y="518" width="1" height="18" fill="#c8a0b0" /><rect x="726.5" y="518" width="1" height="18" fill="#9a9a9a" /><rect x="728.7" y="518" width="1.2" height="18" fill="#8a8a50" /><rect x="730.7" y="518" width="1.2" height="18" fill="#6f8a6f" /><rect x="732.7" y="518" width="1" height="18" fill="#5ba8e0" /><rect x="735.2" y="518" width="0.8" height="18" fill="#9a9a9a" /><rect x="736.8" y="518" width="1" height="18" fill="#8a8a50" /><rect x="738.6" y="518" width="1" height="18" fill="#9a9a9a" /><rect x="740.4" y="518" width="1" height="18" fill="#5ba8e0" /><rect x="742.6" y="518" width="1.2" height="18" fill="#a090d0" /><rect x="745" y="518" width="1" height="18" fill="#2a6e38" /><rect x="747" y="518" width="0.8" height="18" fill="#c8a0b0" /><rect x="749" y="518" width="1" height="18" fill="#8a9a8a" /><rect x="751" y="518" width="1" height="18" fill="#c8a0b0" /><rect x="753.2" y="518" width="1.2" height="18" fill="#c8a0b0" /><rect x="755.6" y="518" width="1" height="18" fill="#a090d0" /><rect x="757.6" y="518" width="0.8" height="18" fill="#a090d0" /><rect x="759.2" y="518" width="0.8" height="18" fill="#6f8a6f" /><rect x="760.8" y="518" width="0.8" height="18" fill="#8a9a8a" /><rect x="763.1" y="518" width="1.2" height="18" fill="#2a6e38" /><rect x="765.3" y="518" width="1" height="18" fill="#6f8a6f" /><rect x="767.8" y="518" width="1.2" height="18" fill="#6f8a6f" /><rect x="770.2" y="518" width="1" height="18" fill="#8a9a8a" /><rect x="772.2" y="518" width="0.8" height="18" fill="#8a8a50" /><rect x="773.8" y="518" width="1.2" height="18" fill="#c8a0b0" /><rect x="776" y="518" width="0.8" height="18" fill="#5ba8e0" /><path d="M775.7 536 L778.7 519 L780.2 522 L781.7 519 L784.7 519 L788 536 Z" fill="#5ccbc6"/><path d="M693.8 554 L697.8 536.5 L778.4 536.5 L782.4 554 Z" fill="#5ccbc6"/><rect x="788" y="500" width="6.6" height="18" fill="#6a3bd6" /><rect x="788.3" y="518" width="6.7" height="18" fill="#c94fcb" /><rect x="795" y="500" width="2.0" height="18" fill="#5bc0eb" /><rect x="796.8" y="500" width="80.6" height="18" fill="#6a3bd6" /><rect x="877.4" y="500" width="1.5" height="18" fill="#d0a8b8" /><rect x="878.9" y="500" width="3.4" height="18" fill="#2a7a3a" /><rect x="882.3" y="500" width="1.4" height="18" fill="#9aa060" /><rect x="883.7" y="500" width="2.4" height="18" fill="#45a54e" /><rect x="796.8" y="518" width="80.6" height="18" fill="#3d7b4a" /><rect x="796.8" y="518" width="1" height="18" fill="#2a6e38" /><rect x="799" y="518" width="0.8" height="18" fill="#9a9a9a" /><rect x="801" y="518" width="0.8" height="18" fill="#8a8a50" /><rect x="802.6" y="518" width="1" height="18" fill="#c8a0b0" /><rect x="804.4" y="518" width="1" height="18" fill="#9a9a9a" /><rect x="806.2" y="518" width="1" height="18" fill="#2a6e38" /><rect x="808.7" y="518" width="1" height="18" fill="#a090d0" /><rect x="810.9" y="518" width="0.8" height="18" fill="#9a9a9a" /><rect x="812.7" y="518" width="0.8" height="18" fill="#8a9a8a" /><rect x="814.5" y="518" width="1" height="18" fill="#5ba8e0" /><rect x="816.3" y="518" width="1" height="18" fill="#2a6e38" /><rect x="818.3" y="518" width="1" height="18" fill="#9a9a9a" /><rect x="820.3" y="518" width="1" height="18" fill="#c8a0b0" /><rect x="822.5" y="518" width="1.2" height="18" fill="#8a8a50" /><rect x="824.7" y="518" width="1" height="18" fill="#c8a0b0" /><rect x="826.5" y="518" width="0.8" height="18" fill="#a090d0" /><rect x="828.3" y="518" width="1.2" height="18" fill="#6f8a6f" /><rect x="831" y="518" width="1.2" height="18" fill="#5ba8e0" /><rect x="833" y="518" width="1" height="18" fill="#c8a0b0" /><rect x="835" y="518" width="1" height="18" fill="#8a9a8a" /><rect x="837.2" y="518" width="1.2" height="18" fill="#a090d0" /><rect x="839.2" y="518" width="1.2" height="18" fill="#2a6e38" /><rect x="841.9" y="518" width="0.8" height="18" fill="#5ba8e0" /><rect x="843.5" y="518" width="0.8" height="18" fill="#c8a0b0" /><rect x="845.8" y="518" width="0.8" height="18" fill="#8a8a50" /><rect x="847.8" y="518" width="1.2" height="18" fill="#9a9a9a" /><rect x="849.8" y="518" width="1" height="18" fill="#8a9a8a" /><rect x="851.8" y="518" width="1" height="18" fill="#5ba8e0" /><rect x="854" y="518" width="1.2" height="18" fill="#9a9a9a" /><rect x="856.2" y="518" width="1.2" height="18" fill="#2a6e38" /><rect x="858.2" y="518" width="1" height="18" fill="#8a8a50" /><rect x="860.4" y="518" width="1" height="18" fill="#6f8a6f" /><rect x="862.4" y="518" width="1" height="18" fill="#8a8a50" /><rect x="864.9" y="518" width="1" height="18" fill="#9a9a9a" /><rect x="866.9" y="518" width="0.8" height="18" fill="#9a9a9a" /><rect x="868.9" y="518" width="1" height="18" fill="#c8a0b0" /><rect x="871.4" y="518" width="0.8" height="18" fill="#9a9a9a" /><rect x="873.2" y="518" width="0.8" height="18" fill="#9a9a9a" /><rect x="875.2" y="518" width="1" height="18" fill="#8a8a50" /><path d="M874.7 536 L877.7 519 L879.2 522 L880.7 519 L883.7 519 L887 536 Z" fill="#5ccbc6"/><path d="M792.8 554 L796.8 536.5 L877.4 536.5 L881.4 554 Z" fill="#5ccbc6"/><rect x="887" y="500" width="6.6" height="18" fill="#6a3bd6" /><rect x="887.2" y="518" width="6.7" height="18" fill="#c94fcb" /><rect x="894" y="500" width="2.0" height="18" fill="#5bc0eb" /><rect x="895.7" y="500" width="80.6" height="18" fill="#6a3bd6" /><rect x="976.3" y="500" width="1.5" height="18" fill="#d0a8b8" /><rect x="977.8" y="500" width="3.4" height="18" fill="#2a7a3a" /><rect x="981.2" y="500" width="1.4" height="18" fill="#9aa060" /><rect x="982.6" y="500" width="2.4" height="18" fill="#45a54e" /><rect x="895.7" y="518" width="80.6" height="18" fill="#3d7b4a" /><rect x="895.7" y="518" width="1" height="18" fill="#8a8a50" /><rect x="897.9" y="518" width="1.2" height="18" fill="#9a9a9a" /><rect x="900.1" y="518" width="0.8" height="18" fill="#8a9a8a" /><rect x="901.7" y="518" width="1.2" height="18" fill="#5ba8e0" /><rect x="903.7" y="518" width="1" height="18" fill="#2a6e38" /><rect x="906.2" y="518" width="1" height="18" fill="#8a8a50" /><rect x="908.4" y="518" width="1" height="18" fill="#c8a0b0" /><rect x="910.9" y="518" width="1" height="18" fill="#6f8a6f" /><rect x="912.9" y="518" width="1" height="18" fill="#c8a0b0" /><rect x="915.4" y="518" width="1" height="18" fill="#6f8a6f" /><rect x="917.9" y="518" width="1" height="18" fill="#a090d0" /><rect x="919.7" y="518" width="0.8" height="18" fill="#6f8a6f" /><rect x="921.7" y="518" width="0.8" height="18" fill="#8a9a8a" /><rect x="923.5" y="518" width="1" height="18" fill="#9a9a9a" /><rect x="925.7" y="518" width="1" height="18" fill="#5ba8e0" /><rect x="927.5" y="518" width="1" height="18" fill="#9a9a9a" /><rect x="929.3" y="518" width="1" height="18" fill="#a090d0" /><rect x="931.3" y="518" width="0.8" height="18" fill="#8a8a50" /><rect x="933.1" y="518" width="0.8" height="18" fill="#2a6e38" /><rect x="935.4" y="518" width="1" height="18" fill="#9a9a9a" /><rect x="937.4" y="518" width="1.2" height="18" fill="#2a6e38" /><rect x="939.4" y="518" width="1" height="18" fill="#8a9a8a" /><rect x="941.9" y="518" width="0.8" height="18" fill="#8a9a8a" /><rect x="943.7" y="518" width="1" height="18" fill="#c8a0b0" /><rect x="945.7" y="518" width="1.2" height="18" fill="#8a9a8a" /><rect x="947.7" y="518" width="1" height="18" fill="#9a9a9a" /><rect x="949.7" y="518" width="1.2" height="18" fill="#6f8a6f" /><rect x="952.1" y="518" width="0.8" height="18" fill="#9a9a9a" /><rect x="953.7" y="518" width="1" height="18" fill="#5ba8e0" /><rect x="956.2" y="518" width="0.8" height="18" fill="#9a9a9a" /><rect x="958.5" y="518" width="1" height="18" fill="#8a9a8a" /><rect x="961" y="518" width="1" height="18" fill="#9a9a9a" /><rect x="962.8" y="518" width="1" height="18" fill="#a090d0" /><rect x="965" y="518" width="1" height="18" fill="#8a9a8a" /><rect x="967.5" y="518" width="1.2" height="18" fill="#2a6e38" /><rect x="969.7" y="518" width="1" height="18" fill="#9a9a9a" /><rect x="971.9" y="518" width="0.8" height="18" fill="#9a9a9a" /><rect x="973.5" y="518" width="1" height="18" fill="#8a9a8a" /><path d="M973.6 536 L976.6 519 L978.1 522 L979.6 519 L982.6 519 L985.9 536 Z" fill="#5ccbc6"/><path d="M891.7 554 L895.7 536.5 L976.3 536.5 L980.3 554 Z" fill="#5ccbc6"/><rect x="985.9" y="500" width="6.6" height="18" fill="#6a3bd6" /><rect x="986.2" y="518" width="6.7" height="18" fill="#c94fcb" /><rect x="992.9" y="500" width="2.0" height="18" fill="#5bc0eb" /><rect x="994.7" y="500" width="80.6" height="18" fill="#6a3bd6" /><rect x="1075.3" y="500" width="1.5" height="18" fill="#d0a8b8" /><rect x="1076.8" y="500" width="3.4" height="18" fill="#2a7a3a" /><rect x="1080.2" y="500" width="1.4" height="18" fill="#9aa060" /><rect x="1081.6" y="500" width="2.4" height="18" fill="#45a54e" /><rect x="994.7" y="518" width="80.6" height="18" fill="#3d7b4a" /><rect x="994.7" y="518" width="1" height="18" fill="#8a8a50" /><rect x="996.9" y="518" width="0.8" height="18" fill="#2a6e38" /><rect x="999.2" y="518" width="1" height="18" fill="#5ba8e0" /><rect x="1001" y="518" width="1" height="18" fill="#5ba8e0" /><rect x="1003.5" y="518" width="0.8" height="18" fill="#5ba8e0" /><rect x="1005.3" y="518" width="1" height="18" fill="#c8a0b0" /><rect x="1007.1" y="518" width="1" height="18" fill="#a090d0" /><rect x="1008.9" y="518" width="1" height="18" fill="#c8a0b0" /><rect x="1011.1" y="518" width="1.2" height="18" fill="#8a9a8a" /><rect x="1013.1" y="518" width="0.8" height="18" fill="#9a9a9a" /><rect x="1015.4" y="518" width="0.8" height="18" fill="#5ba8e0" /><rect x="1017.7" y="518" width="1.2" height="18" fill="#9a9a9a" /><rect x="1020.4" y="518" width="1.2" height="18" fill="#8a8a50" /><rect x="1022.4" y="518" width="1.2" height="18" fill="#9a9a9a" /><rect x="1024.4" y="518" width="1.2" height="18" fill="#9a9a9a" /><rect x="1026.8" y="518" width="1" height="18" fill="#2a6e38" /><rect x="1028.8" y="518" width="1.2" height="18" fill="#9a9a9a" /><rect x="1030.8" y="518" width="0.8" height="18" fill="#a090d0" /><rect x="1032.4" y="518" width="1" height="18" fill="#5ba8e0" /><rect x="1034.6" y="518" width="1.2" height="18" fill="#5ba8e0" /><rect x="1036.8" y="518" width="1" height="18" fill="#9a9a9a" /><rect x="1039" y="518" width="1.2" height="18" fill="#9a9a9a" /><rect x="1041.7" y="518" width="1.2" height="18" fill="#8a8a50" /><rect x="1044.4" y="518" width="0.8" height="18" fill="#a090d0" /><rect x="1046.4" y="518" width="1.2" height="18" fill="#8a9a8a" /><rect x="1048.8" y="518" width="1" height="18" fill="#2a6e38" /><rect x="1051" y="518" width="0.8" height="18" fill="#a090d0" /><rect x="1053.3" y="518" width="0.8" height="18" fill="#9a9a9a" /><rect x="1055.6" y="518" width="0.8" height="18" fill="#6f8a6f" /><rect x="1057.6" y="518" width="1" height="18" fill="#9a9a9a" /><rect x="1059.8" y="518" width="0.8" height="18" fill="#c8a0b0" /><rect x="1061.8" y="518" width="0.8" height="18" fill="#9a9a9a" /><rect x="1063.4" y="518" width="0.8" height="18" fill="#9a9a9a" /><rect x="1065.4" y="518" width="1.2" height="18" fill="#a090d0" /><rect x="1067.4" y="518" width="1" height="18" fill="#a090d0" /><rect x="1069.4" y="518" width="1" height="18" fill="#c8a0b0" /><rect x="1071.4" y="518" width="1" height="18" fill="#5ba8e0" /><rect x="1073.4" y="518" width="1" height="18" fill="#a090d0" /><path d="M1072.6 536 L1075.6 519 L1077.1 522 L1078.6 519 L1081.6 519 L1084.9 536 Z" fill="#5ccbc6"/><path d="M990.7 554 L994.7 536.5 L1075.3 536.5 L1079.3 554 Z" fill="#5ccbc6"/><rect x="1084.9" y="500" width="6.6" height="18" fill="#6a3bd6" /><rect x="1085.1" y="518" width="6.7" height="18" fill="#c94fcb" /><rect x="1091.9" y="500" width="2.0" height="18" fill="#5bc0eb" /><rect x="1093.6" y="500" width="80.6" height="18" fill="#6a3bd6" /><rect x="1174.2" y="500" width="1.5" height="18" fill="#d0a8b8" /><rect x="1175.7" y="500" width="3.4" height="18" fill="#2a7a3a" /><rect x="1179.1" y="500" width="1.4" height="18" fill="#9aa060" /><rect x="1180.5" y="500" width="2.4" height="18" fill="#45a54e" /><rect x="1093.6" y="518" width="80.6" height="18" fill="#3d7b4a" /><rect x="1093.6" y="518" width="1" height="18" fill="#8a9a8a" /><rect x="1095.6" y="518" width="0.8" height="18" fill="#a090d0" /><rect x="1097.9" y="518" width="1.2" height="18" fill="#a090d0" /><rect x="1100.6" y="518" width="1" height="18" fill="#a090d0" /><rect x="1102.8" y="518" width="1" height="18" fill="#6f8a6f" /><rect x="1104.8" y="518" width="1" height="18" fill="#9a9a9a" /><rect x="1106.6" y="518" width="1" height="18" fill="#2a6e38" /><rect x="1108.8" y="518" width="0.8" height="18" fill="#9a9a9a" /><rect x="1110.4" y="518" width="1" height="18" fill="#2a6e38" /><rect x="1112.9" y="518" width="1" height="18" fill="#a090d0" /><rect x="1114.9" y="518" width="1" height="18" fill="#5ba8e0" /><rect x="1116.9" y="518" width="1" height="18" fill="#8a8a50" /><rect x="1118.7" y="518" width="1" height="18" fill="#5ba8e0" /><rect x="1120.9" y="518" width="0.8" height="18" fill="#c8a0b0" /><rect x="1123.2" y="518" width="1" height="18" fill="#a090d0" /><rect x="1125.7" y="518" width="0.8" height="18" fill="#c8a0b0" /><rect x="1128" y="518" width="1" height="18" fill="#9a9a9a" /><rect x="1129.8" y="518" width="0.8" height="18" fill="#5ba8e0" /><rect x="1131.4" y="518" width="0.8" height="18" fill="#5ba8e0" /><rect x="1133.2" y="518" width="1" height="18" fill="#9a9a9a" /><rect x="1135.2" y="518" width="1" height="18" fill="#5ba8e0" /><rect x="1137.4" y="518" width="0.8" height="18" fill="#5ba8e0" /><rect x="1139.4" y="518" width="0.8" height="18" fill="#5ba8e0" /><rect x="1141" y="518" width="1.2" height="18" fill="#2a6e38" /><rect x="1143.4" y="518" width="1" height="18" fill="#6f8a6f" /><rect x="1145.6" y="518" width="1" height="18" fill="#9a9a9a" /><rect x="1147.6" y="518" width="1" height="18" fill="#c8a0b0" /><rect x="1149.6" y="518" width="1" height="18" fill="#c8a0b0" /><rect x="1151.8" y="518" width="1" height="18" fill="#8a9a8a" /><rect x="1153.6" y="518" width="1.2" height="18" fill="#8a8a50" /><rect x="1156" y="518" width="1" height="18" fill="#8a9a8a" /><rect x="1158.2" y="518" width="1" height="18" fill="#9a9a9a" /><rect x="1160.4" y="518" width="1" height="18" fill="#2a6e38" /><rect x="1162.9" y="518" width="0.8" height="18" fill="#9a9a9a" /><rect x="1165.2" y="518" width="1" height="18" fill="#2a6e38" /><rect x="1167.7" y="518" width="1" height="18" fill="#a090d0" /><rect x="1169.7" y="518" width="1" height="18" fill="#9a9a9a" /><rect x="1172.2" y="518" width="1" height="18" fill="#a090d0" /><path d="M1171.5 536 L1174.5 519 L1176 522 L1177.5 519 L1180.5 519 L1183.8 536 Z" fill="#5ccbc6"/><path d="M1089.6 554 L1093.6 536.5 L1174.2 536.5 L1178.2 554 Z" fill="#5ccbc6"/><rect x="1183.8" y="500" width="6.6" height="18" fill="#6a3bd6" /><rect x="1184.1" y="518" width="6.7" height="18" fill="#c94fcb" /><rect x="1190.8" y="500" width="2.0" height="18" fill="#5bc0eb" /><rect x="1192.6" y="500" width="80.6" height="18" fill="#6a3bd6" /><rect x="1273.2" y="500" width="1.5" height="18" fill="#d0a8b8" /><rect x="1274.7" y="500" width="3.4" height="18" fill="#2a7a3a" /><rect x="1278.1" y="500" width="1.4" height="18" fill="#9aa060" /><rect x="1279.5" y="500" width="2.4" height="18" fill="#45a54e" /><rect x="1192.6" y="518" width="80.6" height="18" fill="#3d7b4a" /><rect x="1192.6" y="518" width="1.2" height="18" fill="#8a8a50" /><rect x="1194.8" y="518" width="1" height="18" fill="#6f8a6f" /><rect x="1197" y="518" width="1" height="18" fill="#5ba8e0" /><rect x="1199.2" y="518" width="1" height="18" fill="#8a8a50" /><rect x="1201.2" y="518" width="1" height="18" fill="#c8a0b0" /><rect x="1203.2" y="518" width="1" height="18" fill="#9a9a9a" /><rect x="1205" y="518" width="1" height="18" fill="#8a9a8a" /><rect x="1207" y="518" width="0.8" height="18" fill="#8a9a8a" /><rect x="1208.8" y="518" width="1" height="18" fill="#8a8a50" /><rect x="1210.8" y="518" width="1" height="18" fill="#5ba8e0" /><rect x="1212.8" y="518" width="1.2" height="18" fill="#8a8a50" /><rect x="1214.8" y="518" width="1" height="18" fill="#9a9a9a" /><rect x="1217.3" y="518" width="1" height="18" fill="#2a6e38" /><rect x="1219.8" y="518" width="0.8" height="18" fill="#9a9a9a" /><rect x="1221.8" y="518" width="0.8" height="18" fill="#5ba8e0" /><rect x="1223.4" y="518" width="0.8" height="18" fill="#9a9a9a" /><rect x="1225.4" y="518" width="1" height="18" fill="#9a9a9a" /><rect x="1227.9" y="518" width="0.8" height="18" fill="#8a8a50" /><rect x="1229.9" y="518" width="1.2" height="18" fill="#8a9a8a" /><rect x="1232.6" y="518" width="1.2" height="18" fill="#2a6e38" /><rect x="1234.6" y="518" width="1.2" height="18" fill="#9a9a9a" /><rect x="1236.6" y="518" width="1" height="18" fill="#5ba8e0" /><rect x="1239.1" y="518" width="0.8" height="18" fill="#9a9a9a" /><rect x="1240.9" y="518" width="1" height="18" fill="#6f8a6f" /><rect x="1243.4" y="518" width="1" height="18" fill="#5ba8e0" /><rect x="1245.2" y="518" width="1" height="18" fill="#6f8a6f" /><rect x="1247.7" y="518" width="1.2" height="18" fill="#6f8a6f" /><rect x="1249.9" y="518" width="1" height="18" fill="#8a8a50" /><rect x="1251.9" y="518" width="0.8" height="18" fill="#a090d0" /><rect x="1253.9" y="518" width="1" height="18" fill="#6f8a6f" /><rect x="1256.4" y="518" width="0.8" height="18" fill="#2a6e38" /><rect x="1258.7" y="518" width="1" height="18" fill="#a090d0" /><rect x="1260.7" y="518" width="1" height="18" fill="#6f8a6f" /><rect x="1262.5" y="518" width="1.2" height="18" fill="#9a9a9a" /><rect x="1264.5" y="518" width="1" height="18" fill="#a090d0" /><rect x="1266.3" y="518" width="1" height="18" fill="#8a8a50" /><rect x="1268.8" y="518" width="1.2" height="18" fill="#a090d0" /><rect x="1271.5" y="518" width="1" height="18" fill="#a090d0" /><path d="M1270.5 536 L1273.5 519 L1275 522 L1276.5 519 L1279.5 519 L1282.8 536 Z" fill="#5ccbc6"/><path d="M1188.6 554 L1192.6 536.5 L1273.2 536.5 L1277.2 554 Z" fill="#5ccbc6"/><rect x="1282.8" y="500" width="6.6" height="18" fill="#6a3bd6" /><rect x="1283.1" y="518" width="6.7" height="18" fill="#c94fcb" /><rect x="1289.8" y="500" width="2.0" height="18" fill="#5bc0eb" /><rect x="1291.6" y="500" width="80.6" height="18" fill="#6a3bd6" /><rect x="1372.2" y="500" width="1.5" height="18" fill="#d0a8b8" /><rect x="1373.7" y="500" width="3.4" height="18" fill="#2a7a3a" /><rect x="1377.1" y="500" width="1.4" height="18" fill="#9aa060" /><rect x="1378.5" y="500" width="2.4" height="18" fill="#45a54e" /><rect x="1291.6" y="518" width="80.6" height="18" fill="#3d7b4a" /><rect x="1291.6" y="518" width="0.8" height="18" fill="#9a9a9a" /><rect x="1293.9" y="518" width="1" height="18" fill="#8a8a50" /><rect x="1295.7" y="518" width="0.8" height="18" fill="#5ba8e0" /><rect x="1297.3" y="518" width="1" height="18" fill="#8a9a8a" /><rect x="1299.5" y="518" width="1" height="18" fill="#9a9a9a" /><rect x="1302" y="518" width="1" height="18" fill="#6f8a6f" /><rect x="1304.2" y="518" width="0.8" height="18" fill="#8a9a8a" /><rect x="1306.5" y="518" width="1.2" height="18" fill="#5ba8e0" /><rect x="1309.2" y="518" width="0.8" height="18" fill="#5ba8e0" /><rect x="1310.8" y="518" width="1" height="18" fill="#9a9a9a" /><rect x="1312.8" y="518" width="1" height="18" fill="#c8a0b0" /><rect x="1315" y="518" width="1" height="18" fill="#5ba8e0" /><rect x="1317.5" y="518" width="1" height="18" fill="#9a9a9a" /><rect x="1319.3" y="518" width="1" height="18" fill="#9a9a9a" /><rect x="1321.5" y="518" width="1" height="18" fill="#2a6e38" /><rect x="1323.3" y="518" width="1" height="18" fill="#c8a0b0" /><rect x="1325.5" y="518" width="1" height="18" fill="#9a9a9a" /><rect x="1327.3" y="518" width="1" height="18" fill="#8a8a50" /><rect x="1329.5" y="518" width="1" height="18" fill="#a090d0" /><rect x="1331.7" y="518" width="1" height="18" fill="#9a9a9a" /><rect x="1333.7" y="518" width="1.2" height="18" fill="#c8a0b0" /><rect x="1335.7" y="518" width="1" height="18" fill="#9a9a9a" /><rect x="1337.5" y="518" width="1.2" height="18" fill="#9a9a9a" /><rect x="1339.5" y="518" width="1" height="18" fill="#a090d0" /><rect x="1341.7" y="518" width="1.2" height="18" fill="#2a6e38" /><rect x="1343.7" y="518" width="1.2" height="18" fill="#c8a0b0" /><rect x="1346.1" y="518" width="0.8" height="18" fill="#9a9a9a" /><rect x="1348.4" y="518" width="1" height="18" fill="#9a9a9a" /><rect x="1350.4" y="518" width="1.2" height="18" fill="#a090d0" /><rect x="1352.6" y="518" width="1.2" height="18" fill="#8a9a8a" /><rect x="1355" y="518" width="0.8" height="18" fill="#9a9a9a" /><rect x="1356.8" y="518" width="1.2" height="18" fill="#9a9a9a" /><rect x="1359.5" y="518" width="1" height="18" fill="#c8a0b0" /><rect x="1361.3" y="518" width="1" height="18" fill="#6f8a6f" /><rect x="1363.3" y="518" width="0.8" height="18" fill="#2a6e38" /><rect x="1365.6" y="518" width="1" height="18" fill="#8a9a8a" /><rect x="1367.4" y="518" width="1" height="18" fill="#a090d0" /><rect x="1369.6" y="518" width="0.8" height="18" fill="#c8a0b0" /><rect x="1371.4" y="518" width="0.8" height="18" fill="#c8a0b0" /><path d="M1369.5 536 L1372.5 519 L1374 522 L1375.5 519 L1378.5 519 L1381.8 536 Z" fill="#5ccbc6"/><path d="M1287.6 554 L1291.6 536.5 L1372.2 536.5 L1376.2 554 Z" fill="#5ccbc6"/><rect x="1381.8" y="500" width="6.6" height="18" fill="#6a3bd6" /><rect x="1382" y="518" width="6.7" height="18" fill="#c94fcb" /><rect x="1388.8" y="500" width="2.0" height="18" fill="#5bc0eb" /><rect x="1390.5" y="500" width="80.6" height="18" fill="#6a3bd6" /><rect x="1471.1" y="500" width="1.5" height="18" fill="#d0a8b8" /><rect x="1472.6" y="500" width="3.4" height="18" fill="#2a7a3a" /><rect x="1476" y="500" width="1.4" height="18" fill="#9aa060" /><rect x="1477.4" y="500" width="2.4" height="18" fill="#45a54e" /><rect x="1390.5" y="518" width="80.6" height="18" fill="#3d7b4a" /><rect x="1390.5" y="518" width="1.2" height="18" fill="#8a9a8a" /><rect x="1392.5" y="518" width="1" height="18" fill="#8a9a8a" /><rect x="1394.3" y="518" width="1.2" height="18" fill="#8a9a8a" /><rect x="1396.5" y="518" width="1.2" height="18" fill="#2a6e38" /><rect x="1398.7" y="518" width="1" height="18" fill="#2a6e38" /><rect x="1400.7" y="518" width="1" height="18" fill="#5ba8e0" /><rect x="1402.9" y="518" width="1" height="18" fill="#5ba8e0" /><rect x="1404.7" y="518" width="1" height="18" fill="#8a9a8a" /><rect x="1406.5" y="518" width="1" height="18" fill="#8a8a50" /><rect x="1408.3" y="518" width="1" height="18" fill="#c8a0b0" /><rect x="1410.1" y="518" width="1.2" height="18" fill="#2a6e38" /><rect x="1412.5" y="518" width="1.2" height="18" fill="#5ba8e0" /><rect x="1414.9" y="518" width="1.2" height="18" fill="#a090d0" /><rect x="1416.9" y="518" width="0.8" height="18" fill="#8a8a50" /><rect x="1418.5" y="518" width="1.2" height="18" fill="#c8a0b0" /><rect x="1420.5" y="518" width="1.2" height="18" fill="#a090d0" /><rect x="1422.7" y="518" width="1" height="18" fill="#8a9a8a" /><rect x="1424.9" y="518" width="1" height="18" fill="#6f8a6f" /><rect x="1427.1" y="518" width="1" height="18" fill="#9a9a9a" /><rect x="1429.1" y="518" width="1" height="18" fill="#2a6e38" /><rect x="1430.9" y="518" width="0.8" height="18" fill="#8a9a8a" /><rect x="1432.7" y="518" width="1" height="18" fill="#5ba8e0" /><rect x="1434.5" y="518" width="1" height="18" fill="#5ba8e0" /><rect x="1436.7" y="518" width="1" height="18" fill="#9a9a9a" /><rect x="1439.2" y="518" width="1" height="18" fill="#8a8a50" /><rect x="1441.2" y="518" width="0.8" height="18" fill="#a090d0" /><rect x="1443" y="518" width="1" height="18" fill="#9a9a9a" /><rect x="1445.5" y="518" width="1.2" height="18" fill="#8a9a8a" /><rect x="1447.5" y="518" width="0.8" height="18" fill="#5ba8e0" /><rect x="1449.1" y="518" width="1" height="18" fill="#2a6e38" /><rect x="1451.1" y="518" width="1" height="18" fill="#2a6e38" /><rect x="1453.6" y="518" width="1" height="18" fill="#c8a0b0" /><rect x="1455.4" y="518" width="1" height="18" fill="#2a6e38" /><rect x="1457.9" y="518" width="1.2" height="18" fill="#5ba8e0" /><rect x="1459.9" y="518" width="1.2" height="18" fill="#5ba8e0" /><rect x="1462.3" y="518" width="1" height="18" fill="#6f8a6f" /><rect x="1464.5" y="518" width="1" height="18" fill="#9a9a9a" /><rect x="1466.5" y="518" width="0.8" height="18" fill="#5ba8e0" /><rect x="1468.1" y="518" width="0.8" height="18" fill="#6f8a6f" /><rect x="1469.7" y="518" width="0.8" height="18" fill="#6f8a6f" /><path d="M1468.4 536 L1471.4 519 L1472.9 522 L1474.4 519 L1477.4 519 L1480.7 536 Z" fill="#5ccbc6"/><path d="M1386.5 554 L1390.5 536.5 L1471.1 536.5 L1475.1 554 Z" fill="#5ccbc6"/><rect x="1480.7" y="500" width="6.6" height="18" fill="#6a3bd6" /><rect x="1481" y="518" width="6.7" height="18" fill="#c94fcb" /><rect x="1487.7" y="500" width="2.0" height="18" fill="#5bc0eb" /><rect x="1489.5" y="500" width="80.6" height="18" fill="#6a3bd6" /><rect x="1570.1" y="500" width="1.5" height="18" fill="#d0a8b8" /><rect x="1571.6" y="500" width="3.4" height="18" fill="#2a7a3a" /><rect x="1575" y="500" width="1.4" height="18" fill="#9aa060" /><rect x="1576.4" y="500" width="2.4" height="18" fill="#45a54e" /><rect x="1489.5" y="518" width="80.6" height="18" fill="#3d7b4a" /><rect x="1489.5" y="518" width="1.2" height="18" fill="#8a8a50" /><rect x="1491.5" y="518" width="1" height="18" fill="#c8a0b0" /><rect x="1493.5" y="518" width="1" height="18" fill="#9a9a9a" /><rect x="1495.7" y="518" width="1" height="18" fill="#8a9a8a" /><rect x="1498.2" y="518" width="1.2" height="18" fill="#a090d0" /><rect x="1500.6" y="518" width="0.8" height="18" fill="#2a6e38" /><rect x="1502.6" y="518" width="1.2" height="18" fill="#6f8a6f" /><rect x="1505.3" y="518" width="1.2" height="18" fill="#c8a0b0" /><rect x="1507.7" y="518" width="0.8" height="18" fill="#c8a0b0" /><rect x="1509.3" y="518" width="1" height="18" fill="#2a6e38" /><rect x="1511.5" y="518" width="1" height="18" fill="#5ba8e0" /><rect x="1513.3" y="518" width="1.2" height="18" fill="#8a8a50" /><rect x="1515.5" y="518" width="1" height="18" fill="#2a6e38" /><rect x="1517.7" y="518" width="1" height="18" fill="#6f8a6f" /><rect x="1519.9" y="518" width="1" height="18" fill="#2a6e38" /><rect x="1522.1" y="518" width="1" height="18" fill="#8a9a8a" /><rect x="1524.3" y="518" width="1" height="18" fill="#6f8a6f" /><rect x="1526.1" y="518" width="0.8" height="18" fill="#9a9a9a" /><rect x="1528.4" y="518" width="1" height="18" fill="#a090d0" /><rect x="1530.9" y="518" width="1" height="18" fill="#2a6e38" /><rect x="1532.7" y="518" width="1" height="18" fill="#6f8a6f" /><rect x="1534.5" y="518" width="1" height="18" fill="#c8a0b0" /><rect x="1537" y="518" width="1" height="18" fill="#8a8a50" /><rect x="1539.5" y="518" width="1" height="18" fill="#9a9a9a" /><rect x="1541.7" y="518" width="0.8" height="18" fill="#a090d0" /><rect x="1543.5" y="518" width="0.8" height="18" fill="#6f8a6f" /><rect x="1545.5" y="518" width="0.8" height="18" fill="#8a8a50" /><rect x="1547.5" y="518" width="0.8" height="18" fill="#8a8a50" /><rect x="1549.1" y="518" width="0.8" height="18" fill="#8a8a50" /><rect x="1550.9" y="518" width="1.2" height="18" fill="#2a6e38" /><rect x="1553.1" y="518" width="1" height="18" fill="#a090d0" /><rect x="1554.9" y="518" width="1.2" height="18" fill="#9a9a9a" /><rect x="1557.1" y="518" width="1.2" height="18" fill="#6f8a6f" /><rect x="1559.5" y="518" width="0.8" height="18" fill="#a090d0" /><rect x="1561.1" y="518" width="1" height="18" fill="#2a6e38" /><rect x="1563.1" y="518" width="1.2" height="18" fill="#8a9a8a" /><rect x="1565.1" y="518" width="0.8" height="18" fill="#9a9a9a" /><rect x="1566.7" y="518" width="1" height="18" fill="#8a8a50" /><rect x="1568.7" y="518" width="1" height="18" fill="#9a9a9a" /><path d="M1567.4 536 L1570.4 519 L1571.9 522 L1573.4 519 L1576.4 519 L1579.7 536 Z" fill="#5ccbc6"/><rect x="591" y="500" width="5.5" height="18" fill="#c94fcb" /></g><path d="M1032 553.5 L1037.2 537" stroke="#a0a0a0" stroke-width="0.8"/><path d="M1037.2 554.5 L1042.5 571.5 L1037.2 567.5 L1031.9 571.5 Z" fill="#ee6f80"/><path d="M1037.2 572.3 L1042.5 589.3 L1037.2 585.3 L1031.9 589.3 Z" fill="#ee6f80"/><path d="M1037.2 590.1 L1042.5 607.1 L1037.2 603.1 L1031.9 607.1 Z" fill="#ee6f80"/><path d="M1037.2 607.9 L1042.5 624.9 L1037.2 620.9 L1031.9 624.9 Z" fill="#ee6f80"/><path d="M1037.2 625.7 L1042.5 642.7 L1037.2 638.7 L1031.9 642.7 Z" fill="#ee6f80"/><path d="M1037.2 643.5 L1042.5 660.5 L1037.2 656.5 L1031.9 660.5 Z" fill="#ee6f80"/><rect x="687.9" y="668" width="1" height="19" fill="#b5a47e" /><rect x="786.9" y="668" width="1" height="19" fill="#b5a47e" /><rect x="885.8" y="668" width="1" height="19" fill="#b5a47e" /><rect x="984.8" y="668" width="1" height="19" fill="#b5a47e" /><rect x="1083.7" y="668" width="1" height="19" fill="#b5a47e" /><rect x="1182.7" y="668" width="1" height="19" fill="#b5a47e" /><rect x="1281.7" y="668" width="1" height="19" fill="#b5a47e" /><rect x="1380.6" y="668" width="1" height="19" fill="#b5a47e" /><rect x="1479.6" y="668" width="1" height="19" fill="#b5a47e" /><g clip-path="url(#trk)"><path d="M496 694h1v3h-1zM498 698h4v3h-4zM581 702h4v3h-4zM589 706h1v3h-1zM581 714h3v3h-3zM581 722h4v3h-4zM499 710h1v3h-1zM501 710h3v3h-3zM506 710h2v3h-2zM509 710h4v3h-4zM514 710h2v3h-2zM517 710h3v3h-3zM521 710h4v3h-4zM526 710h4v3h-4zM531 710h1v3h-1zM533 710h1v3h-1zM536 710h1v3h-1zM538 710h1v3h-1zM540 710h1v3h-1zM542 710h1v3h-1zM544 710h2v3h-2zM547 710h1v3h-1zM549 710h1v3h-1zM552 710h1v3h-1zM555 710h2v3h-2zM558 710h1v3h-1zM560 710h1v3h-1zM563 710h1v3h-1zM565 710h1v3h-1zM568 710h2v3h-2zM571 710h2v3h-2zM574 710h1v3h-1zM576 710h1v3h-1zM499 718h4v3h-4zM504 718h1v3h-1zM506 718h1v3h-1zM508 718h1v3h-1zM511 718h1v3h-1zM514 718h1v3h-1zM516 718h2v3h-2zM520 718h4v3h-4zM525 718h3v3h-3zM530 718h1v3h-1zM532 718h1v3h-1zM534 718h1v3h-1zM537 718h1v3h-1zM540 718h1v3h-1zM543 718h2v3h-2zM546 718h2v3h-2zM549 718h1v3h-1zM552 718h1v3h-1zM555 718h1v3h-1zM558 718h1v3h-1zM561 718h1v3h-1zM563 718h1v3h-1zM565 718h4v3h-4zM571 718h2v3h-2zM575 718h1v3h-1zM577 718h2v3h-2zM589 746h1v3h-1zM496 750h1v3h-1zM498 754h4v3h-4zM581 758h4v3h-4zM589 762h1v3h-1zM589 786h1v3h-1zM496 790h1v3h-1zM498 794h4v3h-4zM581 798h4v3h-4zM589 802h1v3h-1zM589 826h1v3h-1zM496 830h1v3h-1zM498 834h4v3h-4zM581 838h4v3h-4zM589 842h1v3h-1zM595 694h1v3h-1zM597 698h4v3h-4zM680 702h4v3h-4zM688 706h1v3h-1zM680 714h3v3h-3zM680 722h4v3h-4zM598 710h1v3h-1zM600 710h3v3h-3zM604 710h2v3h-2zM608 710h4v3h-4zM613 710h4v3h-4zM618 710h1v3h-1zM620 710h1v3h-1zM622 710h1v3h-1zM625 710h4v3h-4zM631 710h2v3h-2zM634 710h1v3h-1zM636 710h4v3h-4zM641 710h1v3h-1zM644 710h1v3h-1zM647 710h1v3h-1zM649 710h4v3h-4zM654 710h1v3h-1zM656 710h1v3h-1zM658 710h2v3h-2zM662 710h2v3h-2zM665 710h1v3h-1zM667 710h3v3h-3zM672 710h1v3h-1zM674 710h2v3h-2zM677 710h1v3h-1zM598 718h2v3h-2zM602 718h2v3h-2zM606 718h4v3h-4zM611 718h1v3h-1zM613 718h2v3h-2zM617 718h1v3h-1zM619 718h3v3h-3zM623 718h4v3h-4zM629 718h2v3h-2zM632 718h2v3h-2zM635 718h4v3h-4zM640 718h1v3h-1zM643 718h3v3h-3zM647 718h2v3h-2zM651 718h3v3h-3zM655 718h2v3h-2zM659 718h1v3h-1zM662 718h1v3h-1zM665 718h2v3h-2zM669 718h2v3h-2zM672 718h1v3h-1zM675 718h3v3h-3zM688 746h1v3h-1zM595 750h1v3h-1zM597 754h4v3h-4zM680 758h4v3h-4zM688 762h1v3h-1zM688 786h1v3h-1zM595 790h1v3h-1zM597 794h4v3h-4zM680 798h4v3h-4zM688 802h1v3h-1zM688 826h1v3h-1zM595 830h1v3h-1zM597 834h4v3h-4zM680 838h4v3h-4zM688 842h1v3h-1zM695 694h1v3h-1zM697 698h4v3h-4zM780 702h4v3h-4zM788 706h1v3h-1zM780 714h3v3h-3zM780 722h4v3h-4zM698 710h1v3h-1zM701 710h1v3h-1zM704 710h2v3h-2zM707 710h4v3h-4zM712 710h3v3h-3zM716 710h1v3h-1zM718 710h1v3h-1zM720 710h1v3h-1zM723 710h3v3h-3zM727 710h1v3h-1zM729 710h1v3h-1zM731 710h1v3h-1zM733 710h1v3h-1zM736 710h1v3h-1zM739 710h3v3h-3zM743 710h3v3h-3zM747 710h1v3h-1zM749 710h1v3h-1zM751 710h2v3h-2zM754 710h2v3h-2zM758 710h1v3h-1zM761 710h1v3h-1zM763 710h1v3h-1zM766 710h1v3h-1zM769 710h1v3h-1zM771 710h4v3h-4zM776 710h1v3h-1zM698 718h1v3h-1zM700 718h1v3h-1zM702 718h1v3h-1zM704 718h1v3h-1zM706 718h1v3h-1zM708 718h2v3h-2zM711 718h1v3h-1zM713 718h3v3h-3zM718 718h1v3h-1zM720 718h1v3h-1zM722 718h2v3h-2zM726 718h3v3h-3zM731 718h4v3h-4zM736 718h2v3h-2zM739 718h1v3h-1zM742 718h2v3h-2zM746 718h2v3h-2zM750 718h4v3h-4zM756 718h1v3h-1zM759 718h3v3h-3zM763 718h2v3h-2zM766 718h3v3h-3zM770 718h2v3h-2zM773 718h3v3h-3zM788 746h1v3h-1zM695 750h1v3h-1zM697 754h4v3h-4zM780 758h4v3h-4zM788 762h1v3h-1zM788 786h1v3h-1zM695 790h1v3h-1zM697 794h4v3h-4zM780 798h4v3h-4zM788 802h1v3h-1zM788 826h1v3h-1zM695 830h1v3h-1zM697 834h4v3h-4zM780 838h4v3h-4zM788 842h1v3h-1zM794 694h1v3h-1zM796 698h4v3h-4zM879 702h4v3h-4zM887 706h1v3h-1zM879 714h3v3h-3zM879 722h4v3h-4zM797 710h1v3h-1zM799 710h1v3h-1zM802 710h3v3h-3zM806 710h2v3h-2zM810 710h1v3h-1zM813 710h3v3h-3zM817 710h1v3h-1zM819 710h1v3h-1zM821 710h2v3h-2zM825 710h1v3h-1zM827 710h1v3h-1zM830 710h3v3h-3zM834 710h1v3h-1zM837 710h3v3h-3zM842 710h2v3h-2zM845 710h3v3h-3zM849 710h2v3h-2zM852 710h2v3h-2zM855 710h1v3h-1zM857 710h1v3h-1zM859 710h3v3h-3zM863 710h1v3h-1zM866 710h1v3h-1zM868 710h1v3h-1zM870 710h2v3h-2zM874 710h3v3h-3zM797 718h1v3h-1zM799 718h1v3h-1zM802 718h4v3h-4zM808 718h3v3h-3zM813 718h3v3h-3zM817 718h1v3h-1zM819 718h4v3h-4zM824 718h1v3h-1zM826 718h2v3h-2zM830 718h1v3h-1zM833 718h3v3h-3zM838 718h1v3h-1zM840 718h4v3h-4zM846 718h3v3h-3zM851 718h1v3h-1zM853 718h1v3h-1zM856 718h2v3h-2zM859 718h3v3h-3zM864 718h2v3h-2zM867 718h2v3h-2zM871 718h1v3h-1zM874 718h2v3h-2zM887 746h1v3h-1zM794 750h1v3h-1zM796 754h4v3h-4zM879 758h4v3h-4zM887 762h1v3h-1zM887 786h1v3h-1zM794 790h1v3h-1zM796 794h4v3h-4zM879 798h4v3h-4zM887 802h1v3h-1zM887 826h1v3h-1zM794 830h1v3h-1zM796 834h4v3h-4zM879 838h4v3h-4zM887 842h1v3h-1zM893 694h1v3h-1zM895 698h4v3h-4zM978 702h4v3h-4zM986 706h1v3h-1zM978 714h3v3h-3zM978 722h4v3h-4zM896 710h1v3h-1zM899 710h2v3h-2zM902 710h2v3h-2zM906 710h4v3h-4zM911 710h4v3h-4zM916 710h2v3h-2zM919 710h4v3h-4zM925 710h2v3h-2zM929 710h1v3h-1zM931 710h1v3h-1zM933 710h2v3h-2zM936 710h2v3h-2zM940 710h1v3h-1zM943 710h1v3h-1zM945 710h2v3h-2zM948 710h2v3h-2zM951 710h4v3h-4zM956 710h3v3h-3zM961 710h4v3h-4zM967 710h1v3h-1zM969 710h2v3h-2zM972 710h1v3h-1zM974 710h2v3h-2zM896 718h2v3h-2zM900 718h1v3h-1zM903 718h1v3h-1zM906 718h1v3h-1zM909 718h2v3h-2zM912 718h3v3h-3zM916 718h2v3h-2zM920 718h3v3h-3zM924 718h1v3h-1zM926 718h1v3h-1zM928 718h3v3h-3zM932 718h2v3h-2zM935 718h2v3h-2zM938 718h1v3h-1zM940 718h3v3h-3zM945 718h2v3h-2zM948 718h4v3h-4zM954 718h4v3h-4zM959 718h1v3h-1zM961 718h1v3h-1zM964 718h3v3h-3zM968 718h4v3h-4zM974 718h2v3h-2zM986 746h1v3h-1zM893 750h1v3h-1zM895 754h4v3h-4zM978 758h4v3h-4zM986 762h1v3h-1zM986 786h1v3h-1zM893 790h1v3h-1zM895 794h4v3h-4zM978 798h4v3h-4zM986 802h1v3h-1zM986 826h1v3h-1zM893 830h1v3h-1zM895 834h4v3h-4zM978 838h4v3h-4zM986 842h1v3h-1zM992 694h1v3h-1zM994 698h4v3h-4zM1077 702h4v3h-4zM1085 706h1v3h-1zM1077 714h3v3h-3zM1077 722h4v3h-4zM995 710h3v3h-3zM1000 710h1v3h-1zM1002 710h1v3h-1zM1005 710h4v3h-4zM1011 710h1v3h-1zM1013 710h4v3h-4zM1019 710h2v3h-2zM1023 710h1v3h-1zM1025 710h3v3h-3zM1029 710h1v3h-1zM1031 710h1v3h-1zM1033 710h1v3h-1zM1036 710h4v3h-4zM1041 710h2v3h-2zM1045 710h1v3h-1zM1047 710h1v3h-1zM1049 710h1v3h-1zM1051 710h3v3h-3zM1055 710h2v3h-2zM1059 710h2v3h-2zM1062 710h4v3h-4zM1067 710h4v3h-4zM1072 710h3v3h-3zM995 718h2v3h-2zM998 718h3v3h-3zM1002 718h1v3h-1zM1004 718h1v3h-1zM1006 718h2v3h-2zM1009 718h1v3h-1zM1011 718h3v3h-3zM1015 718h3v3h-3zM1019 718h4v3h-4zM1024 718h1v3h-1zM1027 718h1v3h-1zM1029 718h1v3h-1zM1031 718h1v3h-1zM1033 718h4v3h-4zM1039 718h1v3h-1zM1041 718h3v3h-3zM1046 718h1v3h-1zM1048 718h1v3h-1zM1051 718h1v3h-1zM1053 718h3v3h-3zM1057 718h4v3h-4zM1062 718h3v3h-3zM1067 718h1v3h-1zM1069 718h1v3h-1zM1071 718h1v3h-1zM1073 718h1v3h-1zM1085 746h1v3h-1zM992 750h1v3h-1zM994 754h4v3h-4zM1077 758h4v3h-4zM1085 762h1v3h-1zM1085 786h1v3h-1zM992 790h1v3h-1zM994 794h4v3h-4zM1077 798h4v3h-4zM1085 802h1v3h-1zM1085 826h1v3h-1zM992 830h1v3h-1zM994 834h4v3h-4zM1077 838h4v3h-4zM1085 842h1v3h-1zM1091 694h1v3h-1zM1093 698h4v3h-4zM1176 702h4v3h-4zM1184 706h1v3h-1zM1176 714h3v3h-3zM1176 722h4v3h-4zM1094 710h3v3h-3zM1098 710h3v3h-3zM1102 710h4v3h-4zM1107 710h3v3h-3zM1111 710h2v3h-2zM1114 710h1v3h-1zM1117 710h3v3h-3zM1121 710h3v3h-3zM1125 710h1v3h-1zM1127 710h1v3h-1zM1130 710h4v3h-4zM1135 710h3v3h-3zM1139 710h2v3h-2zM1142 710h4v3h-4zM1147 710h2v3h-2zM1150 710h2v3h-2zM1154 710h4v3h-4zM1159 710h1v3h-1zM1161 710h1v3h-1zM1164 710h3v3h-3zM1169 710h2v3h-2zM1172 710h2v3h-2zM1094 718h1v3h-1zM1096 718h2v3h-2zM1100 718h2v3h-2zM1104 718h2v3h-2zM1107 718h2v3h-2zM1111 718h2v3h-2zM1114 718h1v3h-1zM1116 718h2v3h-2zM1119 718h2v3h-2zM1123 718h1v3h-1zM1125 718h1v3h-1zM1127 718h4v3h-4zM1133 718h1v3h-1zM1135 718h4v3h-4zM1140 718h4v3h-4zM1145 718h3v3h-3zM1149 718h1v3h-1zM1151 718h3v3h-3zM1155 718h1v3h-1zM1157 718h4v3h-4zM1162 718h1v3h-1zM1164 718h1v3h-1zM1166 718h1v3h-1zM1168 718h1v3h-1zM1170 718h4v3h-4zM1184 746h1v3h-1zM1091 750h1v3h-1zM1093 754h4v3h-4zM1176 758h4v3h-4zM1184 762h1v3h-1zM1184 786h1v3h-1zM1091 790h1v3h-1zM1093 794h4v3h-4zM1176 798h4v3h-4zM1184 802h1v3h-1zM1184 826h1v3h-1zM1091 830h1v3h-1zM1093 834h4v3h-4zM1176 838h4v3h-4zM1184 842h1v3h-1zM1190 694h1v3h-1zM1192 698h4v3h-4zM1275 702h4v3h-4zM1283 706h1v3h-1zM1275 714h3v3h-3zM1275 722h4v3h-4zM1193 710h1v3h-1zM1195 710h1v3h-1zM1197 710h4v3h-4zM1202 710h1v3h-1zM1205 710h1v3h-1zM1207 710h1v3h-1zM1209 710h1v3h-1zM1211 710h2v3h-2zM1215 710h4v3h-4zM1220 710h1v3h-1zM1222 710h4v3h-4zM1227 710h1v3h-1zM1229 710h2v3h-2zM1233 710h3v3h-3zM1237 710h2v3h-2zM1240 710h4v3h-4zM1246 710h4v3h-4zM1251 710h1v3h-1zM1253 710h4v3h-4zM1258 710h1v3h-1zM1260 710h1v3h-1zM1262 710h4v3h-4zM1267 710h1v3h-1zM1269 710h2v3h-2zM1272 710h1v3h-1zM1193 718h3v3h-3zM1197 718h1v3h-1zM1199 718h2v3h-2zM1203 718h1v3h-1zM1205 718h4v3h-4zM1210 718h1v3h-1zM1212 718h4v3h-4zM1217 718h1v3h-1zM1219 718h1v3h-1zM1221 718h1v3h-1zM1224 718h1v3h-1zM1226 718h4v3h-4zM1231 718h1v3h-1zM1233 718h2v3h-2zM1236 718h4v3h-4zM1241 718h1v3h-1zM1244 718h3v3h-3zM1248 718h4v3h-4zM1253 718h2v3h-2zM1256 718h3v3h-3zM1261 718h1v3h-1zM1264 718h2v3h-2zM1267 718h2v3h-2zM1271 718h2v3h-2zM1283 746h1v3h-1zM1190 750h1v3h-1zM1192 754h4v3h-4zM1275 758h4v3h-4zM1283 762h1v3h-1zM1283 786h1v3h-1zM1190 790h1v3h-1zM1192 794h4v3h-4zM1275 798h4v3h-4zM1283 802h1v3h-1zM1283 826h1v3h-1zM1190 830h1v3h-1zM1192 834h4v3h-4zM1275 838h4v3h-4zM1283 842h1v3h-1zM1288 694h1v3h-1zM1290 698h4v3h-4zM1373 702h4v3h-4zM1381 706h1v3h-1zM1373 714h3v3h-3zM1373 722h4v3h-4zM1291 710h2v3h-2zM1294 710h3v3h-3zM1298 710h1v3h-1zM1300 710h3v3h-3zM1304 710h1v3h-1zM1306 710h3v3h-3zM1310 710h3v3h-3zM1314 710h1v3h-1zM1316 710h1v3h-1zM1318 710h3v3h-3zM1322 710h1v3h-1zM1324 710h2v3h-2zM1327 710h1v3h-1zM1329 710h1v3h-1zM1331 710h1v3h-1zM1334 710h3v3h-3zM1338 710h1v3h-1zM1340 710h1v3h-1zM1342 710h3v3h-3zM1346 710h2v3h-2zM1349 710h2v3h-2zM1352 710h1v3h-1zM1354 710h3v3h-3zM1358 710h1v3h-1zM1360 710h2v3h-2zM1363 710h3v3h-3zM1367 710h3v3h-3zM1291 718h1v3h-1zM1294 718h2v3h-2zM1298 718h1v3h-1zM1300 718h3v3h-3zM1304 718h2v3h-2zM1308 718h2v3h-2zM1311 718h2v3h-2zM1315 718h1v3h-1zM1317 718h2v3h-2zM1321 718h2v3h-2zM1324 718h3v3h-3zM1328 718h2v3h-2zM1331 718h1v3h-1zM1333 718h1v3h-1zM1336 718h1v3h-1zM1338 718h3v3h-3zM1342 718h2v3h-2zM1345 718h3v3h-3zM1349 718h3v3h-3zM1354 718h1v3h-1zM1356 718h2v3h-2zM1359 718h1v3h-1zM1361 718h4v3h-4zM1367 718h2v3h-2zM1370 718h1v3h-1zM1381 746h1v3h-1zM1288 750h1v3h-1zM1290 754h4v3h-4zM1373 758h4v3h-4zM1381 762h1v3h-1zM1381 786h1v3h-1zM1288 790h1v3h-1zM1290 794h4v3h-4zM1373 798h4v3h-4zM1381 802h1v3h-1zM1381 826h1v3h-1zM1288 830h1v3h-1zM1290 834h4v3h-4zM1373 838h4v3h-4zM1381 842h1v3h-1zM1387 694h1v3h-1zM1389 698h4v3h-4zM1472 702h4v3h-4zM1480 706h1v3h-1zM1472 714h3v3h-3zM1472 722h4v3h-4zM1390 710h3v3h-3zM1395 710h2v3h-2zM1399 710h2v3h-2zM1402 710h3v3h-3zM1407 710h1v3h-1zM1410 710h1v3h-1zM1412 710h2v3h-2zM1415 710h1v3h-1zM1418 710h1v3h-1zM1420 710h3v3h-3zM1424 710h1v3h-1zM1426 710h2v3h-2zM1429 710h1v3h-1zM1431 710h4v3h-4zM1436 710h2v3h-2zM1440 710h3v3h-3zM1444 710h2v3h-2zM1447 710h1v3h-1zM1449 710h2v3h-2zM1452 710h4v3h-4zM1457 710h1v3h-1zM1459 710h1v3h-1zM1461 710h1v3h-1zM1463 710h2v3h-2zM1466 710h1v3h-1zM1469 710h1v3h-1zM1390 718h2v3h-2zM1394 718h1v3h-1zM1396 718h1v3h-1zM1398 718h2v3h-2zM1401 718h2v3h-2zM1404 718h3v3h-3zM1408 718h1v3h-1zM1410 718h1v3h-1zM1412 718h2v3h-2zM1415 718h1v3h-1zM1417 718h2v3h-2zM1420 718h1v3h-1zM1423 718h1v3h-1zM1425 718h3v3h-3zM1430 718h2v3h-2zM1433 718h2v3h-2zM1436 718h1v3h-1zM1439 718h1v3h-1zM1441 718h2v3h-2zM1444 718h1v3h-1zM1446 718h2v3h-2zM1449 718h1v3h-1zM1451 718h2v3h-2zM1455 718h2v3h-2zM1458 718h4v3h-4zM1464 718h2v3h-2zM1468 718h2v3h-2zM1480 746h1v3h-1zM1387 750h1v3h-1zM1389 754h4v3h-4zM1472 758h4v3h-4zM1480 762h1v3h-1zM1480 786h1v3h-1zM1387 790h1v3h-1zM1389 794h4v3h-4zM1472 798h4v3h-4zM1480 802h1v3h-1zM1480 826h1v3h-1zM1387 830h1v3h-1zM1389 834h4v3h-4zM1472 838h4v3h-4zM1480 842h1v3h-1zM688 734h792v3h-792zM591 738h895v3h-895zM591 742h884v3h-884zM1476 742h11v3h-11zM688 774h792v3h-792zM591 778h895v3h-895zM591 782h1009v3h-1009zM688 814h792v3h-792zM591 818h895v3h-895zM591 822h784v3h-784zM1376 822h111v3h-111z" fill="#e8d64a" /></g><path d="M346.6 215.2 L348.9 217.5 L351.2 215.2 M346.8 223 L348.9 220.9 L351 223" stroke="#222" stroke-width="1.35" fill="none"/><path d="M362.3 214.2 H367.8 M366.3 214.5 V219.5 L368.2 221 H361.5 L363.4 219 M365 221 V225" stroke="#a8a8a8" stroke-width="1.4" fill="none"/><path d="M359.2 214.4 L369.8 224.6" stroke="#9a9a9a" stroke-width="1.1"/><path d="M376.6 214.4 H385.2 L381 219 Z" stroke="#222" stroke-width="1.4" fill="none" stroke-linejoin="round"/><rect x="380" y="218.5" width="2" height="4.5" fill="#222"/><g stroke="#333" stroke-width="1.3" fill="none"><circle cx="401.1" cy="216.2" r="1.9"/><circle cx="397.5" cy="222.1" r="1.9"/><circle cx="404.5" cy="222.1" r="1.9"/></g><path d="M344.9 245.75 L348 242.85000000000002 L351.1 245.75" stroke="#dfe3e8" stroke-width="1.6" fill="none"/><path d="M344.9 423.75 L348 420.85 L351.1 423.75" stroke="#dfe3e8" stroke-width="1.6" fill="none"/><path d="M353.7 441.75 L356.8 438.85 L359.90000000000003 441.75" stroke="#dfe3e8" stroke-width="1.6" fill="none"/><path d="M360.7 696.0999999999999 L364 699.5 L367.3 696.0999999999999" stroke="#444" stroke-width="1.5" fill="none"/><path d="M352.59999999999997 736.1999999999999 L355.9 739.6 L359.2 736.1999999999999" stroke="#444" stroke-width="1.5" fill="none"/><path d="M352.59999999999997 776.1999999999999 L355.9 779.6 L359.2 776.1999999999999" stroke="#444" stroke-width="1.5" fill="none"/><path d="M352.59999999999997 816.1999999999999 L355.9 819.6 L359.2 816.1999999999999" stroke="#444" stroke-width="1.5" fill="none"/><path d="M538.2 265.5 L542.4 260.7 L545 263.5 L549.7 257.9" stroke="#222" stroke-width="1.7" fill="none"/><path d="M538.2 305.5 L542.4 300.7 L545 303.5 L549.7 297.9" stroke="#222" stroke-width="1.7" fill="none"/><path d="M538.2 345.5 L542.4 340.7 L545 343.5 L549.7 337.9" stroke="#222" stroke-width="1.7" fill="none"/><path d="M538.2 385.5 L542.4 380.7 L545 383.5 L549.7 377.9" stroke="#222" stroke-width="1.7" fill="none"/><path d="M362 887.5 A4.2 4.2 0 0 0 360.3 894.5 M358.3 894.8 H361.6 V891.6" stroke="#e8eaed" stroke-width="1.3" fill="none"/><path d="M364.2 894.2 A4.2 4.2 0 0 0 366 887.2 M368 886.9 H364.7 V890.1" stroke="#e8eaed" stroke-width="1.3" fill="none"/></svg><span style="position:absolute;left:666.6px;top:77.76px;font-size:18px;line-height:18px;color:#6d7175;font-weight:normal;letter-spacing:0px;white-space:nowrap;transform-origin:0 0;">Search or type '&gt;' for commands or ':' for SQL mode</span><span style="position:absolute;left:510px;top:117.53px;font-size:10px;line-height:10px;color:#707070;font-weight:normal;letter-spacing:0px;white-space:nowrap;transform-origin:0 0;transform:scaleX(0.8475);">00:00:02</span><span style="position:absolute;left:676px;top:117.53px;font-size:10px;line-height:10px;color:#707070;font-weight:normal;letter-spacing:0px;white-space:nowrap;transform-origin:0 0;transform:scaleX(0.8475);">00:00:04</span><span style="position:absolute;left:841px;top:117.53px;font-size:10px;line-height:10px;color:#707070;font-weight:normal;letter-spacing:0px;white-space:nowrap;transform-origin:0 0;transform:scaleX(0.8475);">00:00:06</span><span style="position:absolute;left:1007px;top:117.53px;font-size:10px;line-height:10px;color:#707070;font-weight:normal;letter-spacing:0px;white-space:nowrap;transform-origin:0 0;transform:scaleX(0.8475);">00:00:08</span><span style="position:absolute;left:1173px;top:117.53px;font-size:10px;line-height:10px;color:#707070;font-weight:normal;letter-spacing:0px;white-space:nowrap;transform-origin:0 0;transform:scaleX(0.8475);">00:00:10</span><span style="position:absolute;left:1339px;top:117.53px;font-size:10px;line-height:10px;color:#707070;font-weight:normal;letter-spacing:0px;white-space:nowrap;transform-origin:0 0;transform:scaleX(0.8475);">00:00:12</span><span style="position:absolute;left:346.2px;top:178.69px;font-size:11px;line-height:11px;color:#707070;font-weight:normal;letter-spacing:0px;white-space:nowrap;transform-origin:0 0;transform:scaleX(0.8686);">00:00:00</span><span style="position:absolute;left:401.4px;top:178.69px;font-size:11px;line-height:11px;color:#707070;font-weight:normal;letter-spacing:0px;white-space:nowrap;transform-origin:0 0;">+</span><span style="position:absolute;left:346.2px;top:188.69px;font-size:11px;line-height:11px;color:#707070;font-weight:normal;letter-spacing:0px;white-space:nowrap;transform-origin:0 0;transform:scaleX(0.8501);">018 052 471</span><span style="position:absolute;left:595px;top:178.69px;font-size:11px;line-height:11px;color:#707070;font-weight:normal;letter-spacing:0px;white-space:nowrap;transform-origin:0 0;transform:scaleX(0.8686);">00:00:00</span><span style="position:absolute;left:595px;top:188.69px;font-size:11px;line-height:11px;color:#707070;font-weight:normal;letter-spacing:0px;white-space:nowrap;transform-origin:0 0;transform:scaleX(0.8501);">000 000 000</span><span style="position:absolute;left:914.3px;top:178.69px;font-size:11px;line-height:11px;color:#707070;font-weight:normal;letter-spacing:0px;white-space:nowrap;transform-origin:0 0;transform:scaleX(0.8686);">00:00:05</span><span style="position:absolute;left:914.3px;top:188.69px;font-size:11px;line-height:11px;color:#707070;font-weight:normal;letter-spacing:0px;white-space:nowrap;transform-origin:0 0;transform:scaleX(0.8501);">000 000 000</span><span style="position:absolute;left:1234.3px;top:178.69px;font-size:11px;line-height:11px;color:#707070;font-weight:normal;letter-spacing:0px;white-space:nowrap;transform-origin:0 0;transform:scaleX(0.8686);">00:00:10</span><span style="position:absolute;left:1234.3px;top:188.69px;font-size:11px;line-height:11px;color:#707070;font-weight:normal;letter-spacing:0px;white-space:nowrap;transform-origin:0 0;transform:scaleX(0.8501);">000 000 000</span><span style="position:absolute;left:410.8px;top:211.95px;font-size:14px;line-height:14px;color:#3a3a3a;font-weight:normal;letter-spacing:0px;white-space:nowrap;transform-origin:0 0;transform:scaleX(0.8728);">Default Workspace</span><span style="position:absolute;left:355.8px;top:236.51px;font-size:14.4px;line-height:14.4px;color:#ced2d7;font-weight:normal;letter-spacing:0px;white-space:nowrap;transform-origin:0 0;transform:scaleX(0.8433);">1. Network</span><span style="position:absolute;left:351.0px;top:255.25px;font-size:14px;line-height:14px;color:#474747;font-weight:normal;letter-spacing:0px;white-space:nowrap;transform-origin:0 0;transform:scaleX(0.8456);">Bandwidth RX (Gbps)</span><span style="position:absolute;left:351.0px;top:295.25px;font-size:14px;line-height:14px;color:#474747;font-weight:normal;letter-spacing:0px;white-space:nowrap;transform-origin:0 0;transform:scaleX(0.8586);">Bandwidth TX (Gbps)</span><span style="position:absolute;left:351.0px;top:335.25px;font-size:14px;line-height:14px;color:#474747;font-weight:normal;letter-spacing:0px;white-space:nowrap;transform-origin:0 0;transform:scaleX(0.8515);">Outstanding Bytes RX</span><span style="position:absolute;left:351.0px;top:375.25px;font-size:14px;line-height:14px;color:#474747;font-weight:normal;letter-spacing:0px;white-space:nowrap;transform-origin:0 0;transform:scaleX(0.8570);">Outstanding Bytes TX</span><span style="position:absolute;left:355.7px;top:414.51px;font-size:14.4px;line-height:14.4px;color:#ced2d7;font-weight:normal;letter-spacing:0px;white-space:nowrap;transform-origin:0 0;transform:scaleX(0.7966);">2. TPUs</span><span style="position:absolute;left:363px;top:432.61px;font-size:14.4px;line-height:14.4px;color:#ced2d7;font-weight:normal;letter-spacing:0px;white-space:nowrap;transform-origin:0 0;transform:scaleX(0.8275);">/device:TPU:0</span><span style="position:absolute;left:360px;top:451.25px;font-size:14px;line-height:14px;color:#474747;font-weight:normal;letter-spacing:0px;white-space:nowrap;transform-origin:0 0;transform:scaleX(0.8273);">1. Steps</span><span style="position:absolute;left:360px;top:475.35px;font-size:14px;line-height:14px;color:#474747;font-weight:normal;letter-spacing:0px;white-space:nowrap;transform-origin:0 0;transform:scaleX(0.8484);">2. XLA Modules</span><span style="position:absolute;left:360px;top:498.85px;font-size:14px;line-height:14px;color:#474747;font-weight:normal;letter-spacing:0px;white-space:nowrap;transform-origin:0 0;transform:scaleX(0.8203);">3. XLA Ops</span><span style="position:absolute;left:360px;top:666.85px;font-size:14px;line-height:14px;color:#474747;font-weight:normal;letter-spacing:0px;white-space:nowrap;transform-origin:0 0;transform:scaleX(0.8383);">4. XLA TraceMe</span><span style="position:absolute;left:371.5px;top:691.05px;font-size:14px;line-height:14px;color:#474747;font-weight:normal;letter-spacing:0px;white-space:nowrap;transform-origin:0 0;transform:scaleX(0.8582);">Megascale</span><span style="position:absolute;left:363px;top:730.75px;font-size:14px;line-height:14px;color:#474747;font-weight:normal;letter-spacing:0px;white-space:nowrap;transform-origin:0 0;transform:scaleX(0.8415);">/device:TPU:1</span><span style="position:absolute;left:363px;top:770.75px;font-size:14px;line-height:14px;color:#474747;font-weight:normal;letter-spacing:0px;white-space:nowrap;transform-origin:0 0;transform:scaleX(0.8415);">/device:TPU:2</span><span style="position:absolute;left:363px;top:810.75px;font-size:14px;line-height:14px;color:#474747;font-weight:normal;letter-spacing:0px;white-space:nowrap;transform-origin:0 0;transform:scaleX(0.8415);">/device:TPU:3</span><span style="position:absolute;left:732.6300000000001px;top:454.72px;font-size:12.5px;line-height:12.5px;color:#fff;font-weight:normal;letter-spacing:0px;white-space:nowrap;transform-origin:0 0;transform:scaleX(0.7263);-webkit-text-stroke:0.2px #fff;">21</span><span style="position:absolute;left:831.59px;top:454.72px;font-size:12.5px;line-height:12.5px;color:#fff;font-weight:normal;letter-spacing:0px;white-space:nowrap;transform-origin:0 0;transform:scaleX(0.7263);-webkit-text-stroke:0.2px #fff;">43</span><span style="position:absolute;left:930.5500000000001px;top:454.72px;font-size:12.5px;line-height:12.5px;color:#fff;font-weight:normal;letter-spacing:0px;white-space:nowrap;transform-origin:0 0;transform:scaleX(0.7263);-webkit-text-stroke:0.2px #fff;">65</span><span style="position:absolute;left:1029.51px;top:454.72px;font-size:12.5px;line-height:12.5px;color:#fff;font-weight:normal;letter-spacing:0px;white-space:nowrap;transform-origin:0 0;transform:scaleX(0.7263);-webkit-text-stroke:0.2px #fff;">87</span><span style="position:absolute;left:1124.87px;top:454.72px;font-size:12.5px;line-height:12.5px;color:#fff;font-weight:normal;letter-spacing:0px;white-space:nowrap;transform-origin:0 0;transform:scaleX(0.8294);-webkit-text-stroke:0.2px #fff;">109</span><span style="position:absolute;left:1223.83px;top:454.72px;font-size:12.5px;line-height:12.5px;color:#fff;font-weight:normal;letter-spacing:0px;white-space:nowrap;transform-origin:0 0;transform:scaleX(0.8294);-webkit-text-stroke:0.2px #fff;">131</span><span style="position:absolute;left:1322.79px;top:454.72px;font-size:12.5px;line-height:12.5px;color:#fff;font-weight:normal;letter-spacing:0px;white-space:nowrap;transform-origin:0 0;transform:scaleX(0.8294);-webkit-text-stroke:0.2px #fff;">153</span><span style="position:absolute;left:1421.75px;top:454.72px;font-size:12.5px;line-height:12.5px;color:#fff;font-weight:normal;letter-spacing:0px;white-space:nowrap;transform-origin:0 0;transform:scaleX(0.8294);-webkit-text-stroke:0.2px #fff;">175</span><span style="position:absolute;left:604.7px;top:478.30px;font-size:13px;line-height:13px;color:#f4f4e8;font-weight:normal;letter-spacing:0px;white-space:nowrap;transform-origin:0 0;transform:scaleX(0.8043);-webkit-text-stroke:0.2px #f4f4e8;">jit_train_step...</span><span style="position:absolute;left:703.6800000000001px;top:478.30px;font-size:13px;line-height:13px;color:#f4f4e8;font-weight:normal;letter-spacing:0px;white-space:nowrap;transform-origin:0 0;transform:scaleX(0.8043);-webkit-text-stroke:0.2px #f4f4e8;">jit_train_step...</span><span style="position:absolute;left:802.64px;top:478.30px;font-size:13px;line-height:13px;color:#f4f4e8;font-weight:normal;letter-spacing:0px;white-space:nowrap;transform-origin:0 0;transform:scaleX(0.8043);-webkit-text-stroke:0.2px #f4f4e8;">jit_train_step...</span><span style="position:absolute;left:901.6px;top:478.30px;font-size:13px;line-height:13px;color:#f4f4e8;font-weight:normal;letter-spacing:0px;white-space:nowrap;transform-origin:0 0;transform:scaleX(0.8043);-webkit-text-stroke:0.2px #f4f4e8;">jit_train_step...</span><span style="position:absolute;left:1000.56px;top:478.30px;font-size:13px;line-height:13px;color:#f4f4e8;font-weight:normal;letter-spacing:0px;white-space:nowrap;transform-origin:0 0;transform:scaleX(0.8043);-webkit-text-stroke:0.2px #f4f4e8;">jit_train_step...</span><span style="position:absolute;left:1099.52px;top:478.30px;font-size:13px;line-height:13px;color:#f4f4e8;font-weight:normal;letter-spacing:0px;white-space:nowrap;transform-origin:0 0;transform:scaleX(0.8043);-webkit-text-stroke:0.2px #f4f4e8;">jit_train_step...</span><span style="position:absolute;left:1198.48px;top:478.30px;font-size:13px;line-height:13px;color:#f4f4e8;font-weight:normal;letter-spacing:0px;white-space:nowrap;transform-origin:0 0;transform:scaleX(0.8043);-webkit-text-stroke:0.2px #f4f4e8;">jit_train_step...</span><span style="position:absolute;left:1297.44px;top:478.30px;font-size:13px;line-height:13px;color:#f4f4e8;font-weight:normal;letter-spacing:0px;white-space:nowrap;transform-origin:0 0;transform:scaleX(0.8043);-webkit-text-stroke:0.2px #f4f4e8;">jit_train_step...</span><span style="position:absolute;left:1396px;top:478.30px;font-size:13px;line-height:13px;color:#f4f4e8;font-weight:normal;letter-spacing:0px;white-space:nowrap;transform-origin:0 0;transform:scaleX(0.7651);-webkit-text-stroke:0.2px #f4f4e8;">jit_train_step(...</span><span style="position:absolute;left:619.54px;top:502.22px;font-size:12.5px;line-height:12.5px;color:#fff;font-weight:normal;letter-spacing:0px;white-space:nowrap;transform-origin:0 0;transform:scaleX(0.8545);-webkit-text-stroke:0.25px #fff;">while.47</span><span style="position:absolute;left:718.5px;top:502.22px;font-size:12.5px;line-height:12.5px;color:#fff;font-weight:normal;letter-spacing:0px;white-space:nowrap;transform-origin:0 0;transform:scaleX(0.8545);-webkit-text-stroke:0.25px #fff;">while.47</span><span style="position:absolute;left:817.4599999999999px;top:502.22px;font-size:12.5px;line-height:12.5px;color:#fff;font-weight:normal;letter-spacing:0px;white-space:nowrap;transform-origin:0 0;transform:scaleX(0.8545);-webkit-text-stroke:0.25px #fff;">while.47</span><span style="position:absolute;left:916.42px;top:502.22px;font-size:12.5px;line-height:12.5px;color:#fff;font-weight:normal;letter-spacing:0px;white-space:nowrap;transform-origin:0 0;transform:scaleX(0.8545);-webkit-text-stroke:0.25px #fff;">while.47</span><span style="position:absolute;left:1015.3799999999999px;top:502.22px;font-size:12.5px;line-height:12.5px;color:#fff;font-weight:normal;letter-spacing:0px;white-space:nowrap;transform-origin:0 0;transform:scaleX(0.8545);-webkit-text-stroke:0.25px #fff;">while.47</span><span style="position:absolute;left:1114.34px;top:502.22px;font-size:12.5px;line-height:12.5px;color:#fff;font-weight:normal;letter-spacing:0px;white-space:nowrap;transform-origin:0 0;transform:scaleX(0.8545);-webkit-text-stroke:0.25px #fff;">while.47</span><span style="position:absolute;left:1213.3px;top:502.22px;font-size:12.5px;line-height:12.5px;color:#fff;font-weight:normal;letter-spacing:0px;white-space:nowrap;transform-origin:0 0;transform:scaleX(0.8545);-webkit-text-stroke:0.25px #fff;">while.47</span><span style="position:absolute;left:1312.26px;top:502.22px;font-size:12.5px;line-height:12.5px;color:#fff;font-weight:normal;letter-spacing:0px;white-space:nowrap;transform-origin:0 0;transform:scaleX(0.8545);-webkit-text-stroke:0.25px #fff;">while.47</span><span style="position:absolute;left:1411.22px;top:502.22px;font-size:12.5px;line-height:12.5px;color:#fff;font-weight:normal;letter-spacing:0px;white-space:nowrap;transform-origin:0 0;transform:scaleX(0.8545);-webkit-text-stroke:0.25px #fff;">while.47</span><span style="position:absolute;left:594.2px;top:258.44px;font-size:10px;line-height:10px;color:#333;font-weight:normal;letter-spacing:0px;white-space:nowrap;transform-origin:0 0;transform:scaleX(0.8438);">500 Gbps</span><span style="position:absolute;left:594.2px;top:298.44px;font-size:10px;line-height:10px;color:#333;font-weight:normal;letter-spacing:0px;white-space:nowrap;transform-origin:0 0;transform:scaleX(0.8438);">500 Gbps</span><span style="position:absolute;left:594.2px;top:338.44px;font-size:10px;line-height:10px;color:#333;font-weight:normal;letter-spacing:0px;white-space:nowrap;transform-origin:0 0;transform:scaleX(0.8742);">750M bytes</span><span style="position:absolute;left:594.2px;top:378.44px;font-size:10px;line-height:10px;color:#333;font-weight:normal;letter-spacing:0px;white-space:nowrap;transform-origin:0 0;transform:scaleX(0.8742);">750M bytes</span><span style="position:absolute;left:379.4px;top:858.15px;font-size:14px;line-height:14px;color:#222;font-weight:normal;letter-spacing:0px;white-space:nowrap;transform-origin:0 0;transform:scaleX(0.8690);">Current Selection</span><span style="position:absolute;left:376px;top:883.15px;font-size:14px;line-height:14px;color:#e8eaed;font-weight:normal;letter-spacing:0px;white-space:nowrap;transform-origin:0 0;transform:scaleX(0.8787);">Timeline Sync</span>
</body></html>
